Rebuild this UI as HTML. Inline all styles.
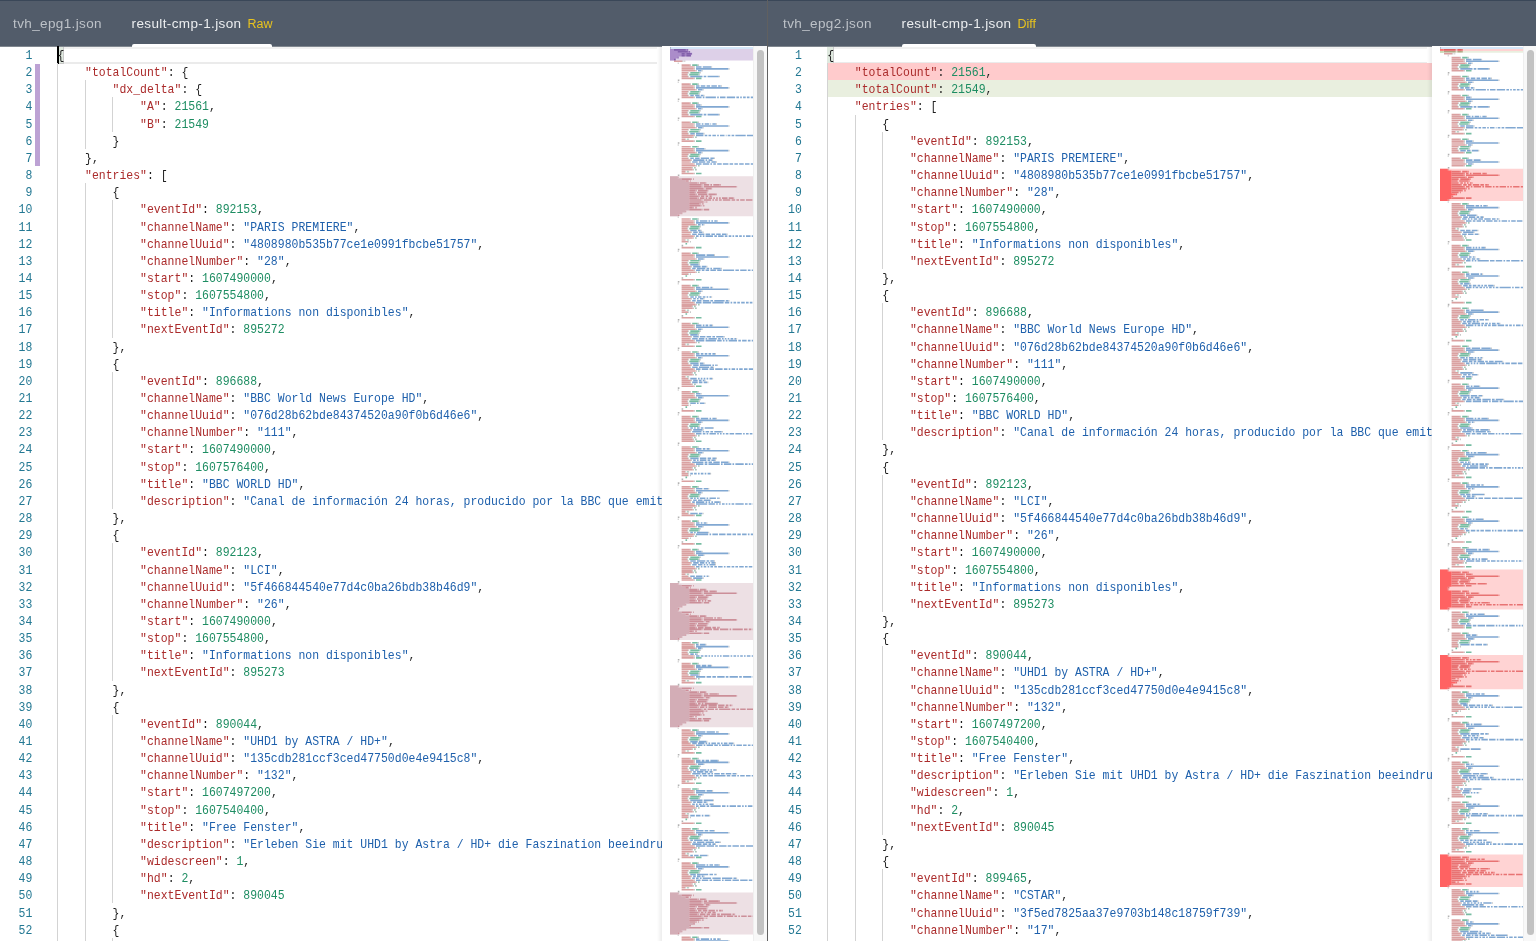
<!DOCTYPE html><html><head><meta charset="utf-8"><style>
*{margin:0;padding:0;box-sizing:border-box}
html,body{width:1536px;height:941px;overflow:hidden;background:#fff}
body{position:relative;font-family:"Liberation Mono",monospace}
.hdr{position:absolute;left:0;top:0;width:1536px;height:46px;background:#525c6a;border-top:1px solid #3a4758}
.tab{position:absolute;top:1.4px;height:46px;line-height:46px;font-family:"Liberation Sans",sans-serif;font-size:13.5px;letter-spacing:0.38px;white-space:nowrap}
.tab.in{color:#bdc2c8}
.tab.ac{color:#eceef0}
.tag{color:#e8c31e;margin-left:6px;font-size:12.5px;letter-spacing:0}
.ul{position:absolute;top:44px;height:3px;background:#fff;border-radius:2px 2px 0 0;z-index:2}
.div{position:absolute;left:767px;top:0;width:1px;height:941px;background:#606060}
.ln{position:absolute;width:60px;text-align:right;height:17.15px;line-height:17.15px;font-size:11.470px;color:#237893;white-space:pre;transform:scaleY(1.107);transform-origin:0 11.64px;margin-top:1px}
.cl{position:absolute;height:17.15px;line-height:17.15px;font-size:11.470px;color:#000;white-space:pre;overflow:hidden}
.ct{position:absolute;left:0;top:1px;transform:scaleY(1.107);transform-origin:0 11.64px}
.k{color:#ab2b2b}.s{color:#1e60ac}.n{color:#1d8d62}.p{color:#1e1e1e}
.g{position:absolute;width:1px;background:#d3d3d3}
.bg{position:absolute}
</style></head><body><div id="wrap" style="position:absolute;left:0;top:0;width:1536px;height:941px;overflow:hidden;will-change:transform">
<div class="hdr"></div><div style="position:absolute;left:0;top:46px;width:1536px;height:1px;background:#80878f"></div>
<div class="tab in" style="left:13px">tvh_epg1.json</div>
<div class="tab ac" style="left:131.5px">result-cmp-1.json<span class="tag">Raw</span></div>
<div class="ul" style="left:131.5px;width:140px"></div>
<div class="tab in" style="left:783px">tvh_epg2.json</div>
<div class="tab ac" style="left:901.5px">result-cmp-1.json<span class="tag">Diff</span></div>
<div class="ul" style="left:901.5px;width:134.5px"></div>
<div style="position:absolute;left:57.50px;top:47px;width:599.50px;height:16.5px;border-top:2px solid #f1f1f1;border-bottom:2px solid #ebebeb"></div>
<div style="position:absolute;left:57.50px;top:46.5px;width:6.7px;height:17px;background:#dfe9df;border-right:1px solid #c9c9c9;border-bottom:1px solid #c9c9c9"></div>
<div style="position:absolute;left:57.00px;top:46.3px;width:2px;height:17.3px;background:#000"></div>
<div style="position:absolute;left:827.30px;top:47px;width:599.70px;height:16.5px;border-top:2px solid #f1f1f1;border-bottom:2px solid #ebebeb"></div>
<div style="position:absolute;left:827.30px;top:46.5px;width:6.7px;height:17px;background:#dfe9df;border-right:1px solid #c9c9c9;border-bottom:1px solid #c9c9c9"></div>
<div class="g" style="left:57px;top:63.15px;height:891.80px"></div>
<div class="g" style="left:85px;top:80.30px;height:68.60px"></div>
<div class="g" style="left:85px;top:183.20px;height:771.75px"></div>
<div class="g" style="left:112px;top:97.45px;height:34.30px"></div>
<div class="g" style="left:112px;top:200.35px;height:137.20px"></div>
<div class="g" style="left:112px;top:371.85px;height:137.20px"></div>
<div class="g" style="left:112px;top:543.35px;height:137.20px"></div>
<div class="g" style="left:112px;top:714.85px;height:188.65px"></div>
<div class="g" style="left:112px;top:937.80px;height:17.15px"></div>
<div class="ln" style="top:46.00px;left:-27.70px">1</div>
<div class="cl" style="top:46.00px;left:57.50px;width:604.50px"><div class="ct"><span class="p">{</span></div></div>
<div class="ln" style="top:63.15px;left:-27.70px">2</div>
<div class="cl" style="top:63.15px;left:57.50px;width:604.50px"><div class="ct">    <span class="k">&quot;totalCount&quot;</span><span class="p">: </span><span class="p">{</span></div></div>
<div class="ln" style="top:80.30px;left:-27.70px">3</div>
<div class="cl" style="top:80.30px;left:57.50px;width:604.50px"><div class="ct">        <span class="k">&quot;dx_delta&quot;</span><span class="p">: </span><span class="p">{</span></div></div>
<div class="ln" style="top:97.45px;left:-27.70px">4</div>
<div class="cl" style="top:97.45px;left:57.50px;width:604.50px"><div class="ct">            <span class="k">&quot;A&quot;</span><span class="p">: </span><span class="n">21561</span><span class="p">,</span></div></div>
<div class="ln" style="top:114.60px;left:-27.70px">5</div>
<div class="cl" style="top:114.60px;left:57.50px;width:604.50px"><div class="ct">            <span class="k">&quot;B&quot;</span><span class="p">: </span><span class="n">21549</span></div></div>
<div class="ln" style="top:131.75px;left:-27.70px">6</div>
<div class="cl" style="top:131.75px;left:57.50px;width:604.50px"><div class="ct">        <span class="p">}</span></div></div>
<div class="ln" style="top:148.90px;left:-27.70px">7</div>
<div class="cl" style="top:148.90px;left:57.50px;width:604.50px"><div class="ct">    <span class="p">},</span></div></div>
<div class="ln" style="top:166.05px;left:-27.70px">8</div>
<div class="cl" style="top:166.05px;left:57.50px;width:604.50px"><div class="ct">    <span class="k">&quot;entries&quot;</span><span class="p">: </span><span class="p">[</span></div></div>
<div class="ln" style="top:183.20px;left:-27.70px">9</div>
<div class="cl" style="top:183.20px;left:57.50px;width:604.50px"><div class="ct">        <span class="p">{</span></div></div>
<div class="ln" style="top:200.35px;left:-27.70px">10</div>
<div class="cl" style="top:200.35px;left:57.50px;width:604.50px"><div class="ct">            <span class="k">&quot;eventId&quot;</span><span class="p">: </span><span class="n">892153</span><span class="p">,</span></div></div>
<div class="ln" style="top:217.50px;left:-27.70px">11</div>
<div class="cl" style="top:217.50px;left:57.50px;width:604.50px"><div class="ct">            <span class="k">&quot;channelName&quot;</span><span class="p">: </span><span class="s">&quot;PARIS PREMIERE&quot;</span><span class="p">,</span></div></div>
<div class="ln" style="top:234.65px;left:-27.70px">12</div>
<div class="cl" style="top:234.65px;left:57.50px;width:604.50px"><div class="ct">            <span class="k">&quot;channelUuid&quot;</span><span class="p">: </span><span class="s">&quot;4808980b535b77ce1e0991fbcbe51757&quot;</span><span class="p">,</span></div></div>
<div class="ln" style="top:251.80px;left:-27.70px">13</div>
<div class="cl" style="top:251.80px;left:57.50px;width:604.50px"><div class="ct">            <span class="k">&quot;channelNumber&quot;</span><span class="p">: </span><span class="s">&quot;28&quot;</span><span class="p">,</span></div></div>
<div class="ln" style="top:268.95px;left:-27.70px">14</div>
<div class="cl" style="top:268.95px;left:57.50px;width:604.50px"><div class="ct">            <span class="k">&quot;start&quot;</span><span class="p">: </span><span class="n">1607490000</span><span class="p">,</span></div></div>
<div class="ln" style="top:286.10px;left:-27.70px">15</div>
<div class="cl" style="top:286.10px;left:57.50px;width:604.50px"><div class="ct">            <span class="k">&quot;stop&quot;</span><span class="p">: </span><span class="n">1607554800</span><span class="p">,</span></div></div>
<div class="ln" style="top:303.25px;left:-27.70px">16</div>
<div class="cl" style="top:303.25px;left:57.50px;width:604.50px"><div class="ct">            <span class="k">&quot;title&quot;</span><span class="p">: </span><span class="s">&quot;Informations non disponibles&quot;</span><span class="p">,</span></div></div>
<div class="ln" style="top:320.40px;left:-27.70px">17</div>
<div class="cl" style="top:320.40px;left:57.50px;width:604.50px"><div class="ct">            <span class="k">&quot;nextEventId&quot;</span><span class="p">: </span><span class="n">895272</span></div></div>
<div class="ln" style="top:337.55px;left:-27.70px">18</div>
<div class="cl" style="top:337.55px;left:57.50px;width:604.50px"><div class="ct">        <span class="p">},</span></div></div>
<div class="ln" style="top:354.70px;left:-27.70px">19</div>
<div class="cl" style="top:354.70px;left:57.50px;width:604.50px"><div class="ct">        <span class="p">{</span></div></div>
<div class="ln" style="top:371.85px;left:-27.70px">20</div>
<div class="cl" style="top:371.85px;left:57.50px;width:604.50px"><div class="ct">            <span class="k">&quot;eventId&quot;</span><span class="p">: </span><span class="n">896688</span><span class="p">,</span></div></div>
<div class="ln" style="top:389.00px;left:-27.70px">21</div>
<div class="cl" style="top:389.00px;left:57.50px;width:604.50px"><div class="ct">            <span class="k">&quot;channelName&quot;</span><span class="p">: </span><span class="s">&quot;BBC World News Europe HD&quot;</span><span class="p">,</span></div></div>
<div class="ln" style="top:406.15px;left:-27.70px">22</div>
<div class="cl" style="top:406.15px;left:57.50px;width:604.50px"><div class="ct">            <span class="k">&quot;channelUuid&quot;</span><span class="p">: </span><span class="s">&quot;076d28b62bde84374520a90f0b6d46e6&quot;</span><span class="p">,</span></div></div>
<div class="ln" style="top:423.30px;left:-27.70px">23</div>
<div class="cl" style="top:423.30px;left:57.50px;width:604.50px"><div class="ct">            <span class="k">&quot;channelNumber&quot;</span><span class="p">: </span><span class="s">&quot;111&quot;</span><span class="p">,</span></div></div>
<div class="ln" style="top:440.45px;left:-27.70px">24</div>
<div class="cl" style="top:440.45px;left:57.50px;width:604.50px"><div class="ct">            <span class="k">&quot;start&quot;</span><span class="p">: </span><span class="n">1607490000</span><span class="p">,</span></div></div>
<div class="ln" style="top:457.60px;left:-27.70px">25</div>
<div class="cl" style="top:457.60px;left:57.50px;width:604.50px"><div class="ct">            <span class="k">&quot;stop&quot;</span><span class="p">: </span><span class="n">1607576400</span><span class="p">,</span></div></div>
<div class="ln" style="top:474.75px;left:-27.70px">26</div>
<div class="cl" style="top:474.75px;left:57.50px;width:604.50px"><div class="ct">            <span class="k">&quot;title&quot;</span><span class="p">: </span><span class="s">&quot;BBC WORLD HD&quot;</span><span class="p">,</span></div></div>
<div class="ln" style="top:491.90px;left:-27.70px">27</div>
<div class="cl" style="top:491.90px;left:57.50px;width:604.50px"><div class="ct">            <span class="k">&quot;description&quot;</span><span class="p">: </span><span class="s">&quot;Canal de información 24 horas, producido por la BBC que emite noticias internacionales&quot;</span></div></div>
<div class="ln" style="top:509.05px;left:-27.70px">28</div>
<div class="cl" style="top:509.05px;left:57.50px;width:604.50px"><div class="ct">        <span class="p">},</span></div></div>
<div class="ln" style="top:526.20px;left:-27.70px">29</div>
<div class="cl" style="top:526.20px;left:57.50px;width:604.50px"><div class="ct">        <span class="p">{</span></div></div>
<div class="ln" style="top:543.35px;left:-27.70px">30</div>
<div class="cl" style="top:543.35px;left:57.50px;width:604.50px"><div class="ct">            <span class="k">&quot;eventId&quot;</span><span class="p">: </span><span class="n">892123</span><span class="p">,</span></div></div>
<div class="ln" style="top:560.50px;left:-27.70px">31</div>
<div class="cl" style="top:560.50px;left:57.50px;width:604.50px"><div class="ct">            <span class="k">&quot;channelName&quot;</span><span class="p">: </span><span class="s">&quot;LCI&quot;</span><span class="p">,</span></div></div>
<div class="ln" style="top:577.65px;left:-27.70px">32</div>
<div class="cl" style="top:577.65px;left:57.50px;width:604.50px"><div class="ct">            <span class="k">&quot;channelUuid&quot;</span><span class="p">: </span><span class="s">&quot;5f466844540e77d4c0ba26bdb38b46d9&quot;</span><span class="p">,</span></div></div>
<div class="ln" style="top:594.80px;left:-27.70px">33</div>
<div class="cl" style="top:594.80px;left:57.50px;width:604.50px"><div class="ct">            <span class="k">&quot;channelNumber&quot;</span><span class="p">: </span><span class="s">&quot;26&quot;</span><span class="p">,</span></div></div>
<div class="ln" style="top:611.95px;left:-27.70px">34</div>
<div class="cl" style="top:611.95px;left:57.50px;width:604.50px"><div class="ct">            <span class="k">&quot;start&quot;</span><span class="p">: </span><span class="n">1607490000</span><span class="p">,</span></div></div>
<div class="ln" style="top:629.10px;left:-27.70px">35</div>
<div class="cl" style="top:629.10px;left:57.50px;width:604.50px"><div class="ct">            <span class="k">&quot;stop&quot;</span><span class="p">: </span><span class="n">1607554800</span><span class="p">,</span></div></div>
<div class="ln" style="top:646.25px;left:-27.70px">36</div>
<div class="cl" style="top:646.25px;left:57.50px;width:604.50px"><div class="ct">            <span class="k">&quot;title&quot;</span><span class="p">: </span><span class="s">&quot;Informations non disponibles&quot;</span><span class="p">,</span></div></div>
<div class="ln" style="top:663.40px;left:-27.70px">37</div>
<div class="cl" style="top:663.40px;left:57.50px;width:604.50px"><div class="ct">            <span class="k">&quot;nextEventId&quot;</span><span class="p">: </span><span class="n">895273</span></div></div>
<div class="ln" style="top:680.55px;left:-27.70px">38</div>
<div class="cl" style="top:680.55px;left:57.50px;width:604.50px"><div class="ct">        <span class="p">},</span></div></div>
<div class="ln" style="top:697.70px;left:-27.70px">39</div>
<div class="cl" style="top:697.70px;left:57.50px;width:604.50px"><div class="ct">        <span class="p">{</span></div></div>
<div class="ln" style="top:714.85px;left:-27.70px">40</div>
<div class="cl" style="top:714.85px;left:57.50px;width:604.50px"><div class="ct">            <span class="k">&quot;eventId&quot;</span><span class="p">: </span><span class="n">890044</span><span class="p">,</span></div></div>
<div class="ln" style="top:732.00px;left:-27.70px">41</div>
<div class="cl" style="top:732.00px;left:57.50px;width:604.50px"><div class="ct">            <span class="k">&quot;channelName&quot;</span><span class="p">: </span><span class="s">&quot;UHD1 by ASTRA / HD+&quot;</span><span class="p">,</span></div></div>
<div class="ln" style="top:749.15px;left:-27.70px">42</div>
<div class="cl" style="top:749.15px;left:57.50px;width:604.50px"><div class="ct">            <span class="k">&quot;channelUuid&quot;</span><span class="p">: </span><span class="s">&quot;135cdb281ccf3ced47750d0e4e9415c8&quot;</span><span class="p">,</span></div></div>
<div class="ln" style="top:766.30px;left:-27.70px">43</div>
<div class="cl" style="top:766.30px;left:57.50px;width:604.50px"><div class="ct">            <span class="k">&quot;channelNumber&quot;</span><span class="p">: </span><span class="s">&quot;132&quot;</span><span class="p">,</span></div></div>
<div class="ln" style="top:783.45px;left:-27.70px">44</div>
<div class="cl" style="top:783.45px;left:57.50px;width:604.50px"><div class="ct">            <span class="k">&quot;start&quot;</span><span class="p">: </span><span class="n">1607497200</span><span class="p">,</span></div></div>
<div class="ln" style="top:800.60px;left:-27.70px">45</div>
<div class="cl" style="top:800.60px;left:57.50px;width:604.50px"><div class="ct">            <span class="k">&quot;stop&quot;</span><span class="p">: </span><span class="n">1607540400</span><span class="p">,</span></div></div>
<div class="ln" style="top:817.75px;left:-27.70px">46</div>
<div class="cl" style="top:817.75px;left:57.50px;width:604.50px"><div class="ct">            <span class="k">&quot;title&quot;</span><span class="p">: </span><span class="s">&quot;Free Fenster&quot;</span><span class="p">,</span></div></div>
<div class="ln" style="top:834.90px;left:-27.70px">47</div>
<div class="cl" style="top:834.90px;left:57.50px;width:604.50px"><div class="ct">            <span class="k">&quot;description&quot;</span><span class="p">: </span><span class="s">&quot;Erleben Sie mit UHD1 by Astra / HD+ die Faszination beeindruckender Bilder&quot;</span><span class="p">,</span></div></div>
<div class="ln" style="top:852.05px;left:-27.70px">48</div>
<div class="cl" style="top:852.05px;left:57.50px;width:604.50px"><div class="ct">            <span class="k">&quot;widescreen&quot;</span><span class="p">: </span><span class="n">1</span><span class="p">,</span></div></div>
<div class="ln" style="top:869.20px;left:-27.70px">49</div>
<div class="cl" style="top:869.20px;left:57.50px;width:604.50px"><div class="ct">            <span class="k">&quot;hd&quot;</span><span class="p">: </span><span class="n">2</span><span class="p">,</span></div></div>
<div class="ln" style="top:886.35px;left:-27.70px">50</div>
<div class="cl" style="top:886.35px;left:57.50px;width:604.50px"><div class="ct">            <span class="k">&quot;nextEventId&quot;</span><span class="p">: </span><span class="n">890045</span></div></div>
<div class="ln" style="top:903.50px;left:-27.70px">51</div>
<div class="cl" style="top:903.50px;left:57.50px;width:604.50px"><div class="ct">        <span class="p">},</span></div></div>
<div class="ln" style="top:920.65px;left:-27.70px">52</div>
<div class="cl" style="top:920.65px;left:57.50px;width:604.50px"><div class="ct">        <span class="p">{</span></div></div>
<div class="ln" style="top:937.80px;left:-27.70px">53</div>
<div class="cl" style="top:937.80px;left:57.50px;width:604.50px"><div class="ct">            <span class="k">&quot;eventId&quot;</span><span class="p">: </span><span class="n">899465</span><span class="p">,</span></div></div>
<div style="position:absolute;left:35px;top:64.15px;width:5px;height:101.90px;background:#bda2d4"></div>
<div class="bg" style="left:827.30px;top:63.15px;width:604.70px;height:17.15px;background:#ffcbcc"></div>
<div class="bg" style="left:827.30px;top:80.30px;width:604.70px;height:17.15px;background:#e9efdf"></div>
<div class="g" style="left:827px;top:63.15px;height:891.80px"></div>
<div class="g" style="left:855px;top:114.60px;height:840.35px"></div>
<div class="g" style="left:882px;top:131.75px;height:137.20px"></div>
<div class="g" style="left:882px;top:303.25px;height:137.20px"></div>
<div class="g" style="left:882px;top:474.75px;height:137.20px"></div>
<div class="g" style="left:882px;top:646.25px;height:188.65px"></div>
<div class="g" style="left:882px;top:869.20px;height:85.75px"></div>
<div class="ln" style="top:46.00px;left:741.80px">1</div>
<div class="cl" style="top:46.00px;left:827.30px;width:604.70px"><div class="ct"><span class="p">{</span></div></div>
<div class="ln" style="top:63.15px;left:741.80px">2</div>
<div class="cl" style="top:63.15px;left:827.30px;width:604.70px"><div class="ct">    <span class="k">&quot;totalCount&quot;</span><span class="p">: </span><span class="n">21561</span><span class="p">,</span></div></div>
<div class="ln" style="top:80.30px;left:741.80px">3</div>
<div class="cl" style="top:80.30px;left:827.30px;width:604.70px"><div class="ct">    <span class="k">&quot;totalCount&quot;</span><span class="p">: </span><span class="n">21549</span><span class="p">,</span></div></div>
<div class="ln" style="top:97.45px;left:741.80px">4</div>
<div class="cl" style="top:97.45px;left:827.30px;width:604.70px"><div class="ct">    <span class="k">&quot;entries&quot;</span><span class="p">: </span><span class="p">[</span></div></div>
<div class="ln" style="top:114.60px;left:741.80px">5</div>
<div class="cl" style="top:114.60px;left:827.30px;width:604.70px"><div class="ct">        <span class="p">{</span></div></div>
<div class="ln" style="top:131.75px;left:741.80px">6</div>
<div class="cl" style="top:131.75px;left:827.30px;width:604.70px"><div class="ct">            <span class="k">&quot;eventId&quot;</span><span class="p">: </span><span class="n">892153</span><span class="p">,</span></div></div>
<div class="ln" style="top:148.90px;left:741.80px">7</div>
<div class="cl" style="top:148.90px;left:827.30px;width:604.70px"><div class="ct">            <span class="k">&quot;channelName&quot;</span><span class="p">: </span><span class="s">&quot;PARIS PREMIERE&quot;</span><span class="p">,</span></div></div>
<div class="ln" style="top:166.05px;left:741.80px">8</div>
<div class="cl" style="top:166.05px;left:827.30px;width:604.70px"><div class="ct">            <span class="k">&quot;channelUuid&quot;</span><span class="p">: </span><span class="s">&quot;4808980b535b77ce1e0991fbcbe51757&quot;</span><span class="p">,</span></div></div>
<div class="ln" style="top:183.20px;left:741.80px">9</div>
<div class="cl" style="top:183.20px;left:827.30px;width:604.70px"><div class="ct">            <span class="k">&quot;channelNumber&quot;</span><span class="p">: </span><span class="s">&quot;28&quot;</span><span class="p">,</span></div></div>
<div class="ln" style="top:200.35px;left:741.80px">10</div>
<div class="cl" style="top:200.35px;left:827.30px;width:604.70px"><div class="ct">            <span class="k">&quot;start&quot;</span><span class="p">: </span><span class="n">1607490000</span><span class="p">,</span></div></div>
<div class="ln" style="top:217.50px;left:741.80px">11</div>
<div class="cl" style="top:217.50px;left:827.30px;width:604.70px"><div class="ct">            <span class="k">&quot;stop&quot;</span><span class="p">: </span><span class="n">1607554800</span><span class="p">,</span></div></div>
<div class="ln" style="top:234.65px;left:741.80px">12</div>
<div class="cl" style="top:234.65px;left:827.30px;width:604.70px"><div class="ct">            <span class="k">&quot;title&quot;</span><span class="p">: </span><span class="s">&quot;Informations non disponibles&quot;</span><span class="p">,</span></div></div>
<div class="ln" style="top:251.80px;left:741.80px">13</div>
<div class="cl" style="top:251.80px;left:827.30px;width:604.70px"><div class="ct">            <span class="k">&quot;nextEventId&quot;</span><span class="p">: </span><span class="n">895272</span></div></div>
<div class="ln" style="top:268.95px;left:741.80px">14</div>
<div class="cl" style="top:268.95px;left:827.30px;width:604.70px"><div class="ct">        <span class="p">},</span></div></div>
<div class="ln" style="top:286.10px;left:741.80px">15</div>
<div class="cl" style="top:286.10px;left:827.30px;width:604.70px"><div class="ct">        <span class="p">{</span></div></div>
<div class="ln" style="top:303.25px;left:741.80px">16</div>
<div class="cl" style="top:303.25px;left:827.30px;width:604.70px"><div class="ct">            <span class="k">&quot;eventId&quot;</span><span class="p">: </span><span class="n">896688</span><span class="p">,</span></div></div>
<div class="ln" style="top:320.40px;left:741.80px">17</div>
<div class="cl" style="top:320.40px;left:827.30px;width:604.70px"><div class="ct">            <span class="k">&quot;channelName&quot;</span><span class="p">: </span><span class="s">&quot;BBC World News Europe HD&quot;</span><span class="p">,</span></div></div>
<div class="ln" style="top:337.55px;left:741.80px">18</div>
<div class="cl" style="top:337.55px;left:827.30px;width:604.70px"><div class="ct">            <span class="k">&quot;channelUuid&quot;</span><span class="p">: </span><span class="s">&quot;076d28b62bde84374520a90f0b6d46e6&quot;</span><span class="p">,</span></div></div>
<div class="ln" style="top:354.70px;left:741.80px">19</div>
<div class="cl" style="top:354.70px;left:827.30px;width:604.70px"><div class="ct">            <span class="k">&quot;channelNumber&quot;</span><span class="p">: </span><span class="s">&quot;111&quot;</span><span class="p">,</span></div></div>
<div class="ln" style="top:371.85px;left:741.80px">20</div>
<div class="cl" style="top:371.85px;left:827.30px;width:604.70px"><div class="ct">            <span class="k">&quot;start&quot;</span><span class="p">: </span><span class="n">1607490000</span><span class="p">,</span></div></div>
<div class="ln" style="top:389.00px;left:741.80px">21</div>
<div class="cl" style="top:389.00px;left:827.30px;width:604.70px"><div class="ct">            <span class="k">&quot;stop&quot;</span><span class="p">: </span><span class="n">1607576400</span><span class="p">,</span></div></div>
<div class="ln" style="top:406.15px;left:741.80px">22</div>
<div class="cl" style="top:406.15px;left:827.30px;width:604.70px"><div class="ct">            <span class="k">&quot;title&quot;</span><span class="p">: </span><span class="s">&quot;BBC WORLD HD&quot;</span><span class="p">,</span></div></div>
<div class="ln" style="top:423.30px;left:741.80px">23</div>
<div class="cl" style="top:423.30px;left:827.30px;width:604.70px"><div class="ct">            <span class="k">&quot;description&quot;</span><span class="p">: </span><span class="s">&quot;Canal de información 24 horas, producido por la BBC que emite noticias internacionales&quot;</span></div></div>
<div class="ln" style="top:440.45px;left:741.80px">24</div>
<div class="cl" style="top:440.45px;left:827.30px;width:604.70px"><div class="ct">        <span class="p">},</span></div></div>
<div class="ln" style="top:457.60px;left:741.80px">25</div>
<div class="cl" style="top:457.60px;left:827.30px;width:604.70px"><div class="ct">        <span class="p">{</span></div></div>
<div class="ln" style="top:474.75px;left:741.80px">26</div>
<div class="cl" style="top:474.75px;left:827.30px;width:604.70px"><div class="ct">            <span class="k">&quot;eventId&quot;</span><span class="p">: </span><span class="n">892123</span><span class="p">,</span></div></div>
<div class="ln" style="top:491.90px;left:741.80px">27</div>
<div class="cl" style="top:491.90px;left:827.30px;width:604.70px"><div class="ct">            <span class="k">&quot;channelName&quot;</span><span class="p">: </span><span class="s">&quot;LCI&quot;</span><span class="p">,</span></div></div>
<div class="ln" style="top:509.05px;left:741.80px">28</div>
<div class="cl" style="top:509.05px;left:827.30px;width:604.70px"><div class="ct">            <span class="k">&quot;channelUuid&quot;</span><span class="p">: </span><span class="s">&quot;5f466844540e77d4c0ba26bdb38b46d9&quot;</span><span class="p">,</span></div></div>
<div class="ln" style="top:526.20px;left:741.80px">29</div>
<div class="cl" style="top:526.20px;left:827.30px;width:604.70px"><div class="ct">            <span class="k">&quot;channelNumber&quot;</span><span class="p">: </span><span class="s">&quot;26&quot;</span><span class="p">,</span></div></div>
<div class="ln" style="top:543.35px;left:741.80px">30</div>
<div class="cl" style="top:543.35px;left:827.30px;width:604.70px"><div class="ct">            <span class="k">&quot;start&quot;</span><span class="p">: </span><span class="n">1607490000</span><span class="p">,</span></div></div>
<div class="ln" style="top:560.50px;left:741.80px">31</div>
<div class="cl" style="top:560.50px;left:827.30px;width:604.70px"><div class="ct">            <span class="k">&quot;stop&quot;</span><span class="p">: </span><span class="n">1607554800</span><span class="p">,</span></div></div>
<div class="ln" style="top:577.65px;left:741.80px">32</div>
<div class="cl" style="top:577.65px;left:827.30px;width:604.70px"><div class="ct">            <span class="k">&quot;title&quot;</span><span class="p">: </span><span class="s">&quot;Informations non disponibles&quot;</span><span class="p">,</span></div></div>
<div class="ln" style="top:594.80px;left:741.80px">33</div>
<div class="cl" style="top:594.80px;left:827.30px;width:604.70px"><div class="ct">            <span class="k">&quot;nextEventId&quot;</span><span class="p">: </span><span class="n">895273</span></div></div>
<div class="ln" style="top:611.95px;left:741.80px">34</div>
<div class="cl" style="top:611.95px;left:827.30px;width:604.70px"><div class="ct">        <span class="p">},</span></div></div>
<div class="ln" style="top:629.10px;left:741.80px">35</div>
<div class="cl" style="top:629.10px;left:827.30px;width:604.70px"><div class="ct">        <span class="p">{</span></div></div>
<div class="ln" style="top:646.25px;left:741.80px">36</div>
<div class="cl" style="top:646.25px;left:827.30px;width:604.70px"><div class="ct">            <span class="k">&quot;eventId&quot;</span><span class="p">: </span><span class="n">890044</span><span class="p">,</span></div></div>
<div class="ln" style="top:663.40px;left:741.80px">37</div>
<div class="cl" style="top:663.40px;left:827.30px;width:604.70px"><div class="ct">            <span class="k">&quot;channelName&quot;</span><span class="p">: </span><span class="s">&quot;UHD1 by ASTRA / HD+&quot;</span><span class="p">,</span></div></div>
<div class="ln" style="top:680.55px;left:741.80px">38</div>
<div class="cl" style="top:680.55px;left:827.30px;width:604.70px"><div class="ct">            <span class="k">&quot;channelUuid&quot;</span><span class="p">: </span><span class="s">&quot;135cdb281ccf3ced47750d0e4e9415c8&quot;</span><span class="p">,</span></div></div>
<div class="ln" style="top:697.70px;left:741.80px">39</div>
<div class="cl" style="top:697.70px;left:827.30px;width:604.70px"><div class="ct">            <span class="k">&quot;channelNumber&quot;</span><span class="p">: </span><span class="s">&quot;132&quot;</span><span class="p">,</span></div></div>
<div class="ln" style="top:714.85px;left:741.80px">40</div>
<div class="cl" style="top:714.85px;left:827.30px;width:604.70px"><div class="ct">            <span class="k">&quot;start&quot;</span><span class="p">: </span><span class="n">1607497200</span><span class="p">,</span></div></div>
<div class="ln" style="top:732.00px;left:741.80px">41</div>
<div class="cl" style="top:732.00px;left:827.30px;width:604.70px"><div class="ct">            <span class="k">&quot;stop&quot;</span><span class="p">: </span><span class="n">1607540400</span><span class="p">,</span></div></div>
<div class="ln" style="top:749.15px;left:741.80px">42</div>
<div class="cl" style="top:749.15px;left:827.30px;width:604.70px"><div class="ct">            <span class="k">&quot;title&quot;</span><span class="p">: </span><span class="s">&quot;Free Fenster&quot;</span><span class="p">,</span></div></div>
<div class="ln" style="top:766.30px;left:741.80px">43</div>
<div class="cl" style="top:766.30px;left:827.30px;width:604.70px"><div class="ct">            <span class="k">&quot;description&quot;</span><span class="p">: </span><span class="s">&quot;Erleben Sie mit UHD1 by Astra / HD+ die Faszination beeindruckender Bilder&quot;</span><span class="p">,</span></div></div>
<div class="ln" style="top:783.45px;left:741.80px">44</div>
<div class="cl" style="top:783.45px;left:827.30px;width:604.70px"><div class="ct">            <span class="k">&quot;widescreen&quot;</span><span class="p">: </span><span class="n">1</span><span class="p">,</span></div></div>
<div class="ln" style="top:800.60px;left:741.80px">45</div>
<div class="cl" style="top:800.60px;left:827.30px;width:604.70px"><div class="ct">            <span class="k">&quot;hd&quot;</span><span class="p">: </span><span class="n">2</span><span class="p">,</span></div></div>
<div class="ln" style="top:817.75px;left:741.80px">46</div>
<div class="cl" style="top:817.75px;left:827.30px;width:604.70px"><div class="ct">            <span class="k">&quot;nextEventId&quot;</span><span class="p">: </span><span class="n">890045</span></div></div>
<div class="ln" style="top:834.90px;left:741.80px">47</div>
<div class="cl" style="top:834.90px;left:827.30px;width:604.70px"><div class="ct">        <span class="p">},</span></div></div>
<div class="ln" style="top:852.05px;left:741.80px">48</div>
<div class="cl" style="top:852.05px;left:827.30px;width:604.70px"><div class="ct">        <span class="p">{</span></div></div>
<div class="ln" style="top:869.20px;left:741.80px">49</div>
<div class="cl" style="top:869.20px;left:827.30px;width:604.70px"><div class="ct">            <span class="k">&quot;eventId&quot;</span><span class="p">: </span><span class="n">899465</span><span class="p">,</span></div></div>
<div class="ln" style="top:886.35px;left:741.80px">50</div>
<div class="cl" style="top:886.35px;left:827.30px;width:604.70px"><div class="ct">            <span class="k">&quot;channelName&quot;</span><span class="p">: </span><span class="s">&quot;CSTAR&quot;</span><span class="p">,</span></div></div>
<div class="ln" style="top:903.50px;left:741.80px">51</div>
<div class="cl" style="top:903.50px;left:827.30px;width:604.70px"><div class="ct">            <span class="k">&quot;channelUuid&quot;</span><span class="p">: </span><span class="s">&quot;3f5ed7825aa37e9703b148c18759f739&quot;</span><span class="p">,</span></div></div>
<div class="ln" style="top:920.65px;left:741.80px">52</div>
<div class="cl" style="top:920.65px;left:827.30px;width:604.70px"><div class="ct">            <span class="k">&quot;channelNumber&quot;</span><span class="p">: </span><span class="s">&quot;17&quot;</span><span class="p">,</span></div></div>
<div class="ln" style="top:937.80px;left:741.80px">53</div>
<div class="cl" style="top:937.80px;left:827.30px;width:604.70px"><div class="ct">            <span class="k">&quot;start&quot;</span><span class="p">: </span><span class="n">1607490000</span><span class="p">,</span></div></div>
<div class="div"></div>
<div style="position:absolute;left:657.00px;top:46px;width:5.00px;height:895px;background:linear-gradient(to right,rgba(0,0,0,0),rgba(0,0,0,0.07))"></div>
<div style="position:absolute;left:662.00px;top:46px;width:91.00px;height:895px;background:#fff"></div>
<div style="position:absolute;left:670.00px;top:47px;width:83.00px;height:1.9px;background:#d4e6f8"></div>
<svg style="position:absolute;left:670.00px;top:48.90px" width="83.00" height="892.10"><path fill="#ede0e4" d="M0.0 127.3h83.0v1.9h-83.0zM0.0 129.2h83.0v1.9h-83.0zM0.0 131.1h83.0v1.9h-83.0zM0.0 133.0h83.0v1.9h-83.0zM0.0 134.9h83.0v1.9h-83.0zM0.0 136.8h83.0v1.9h-83.0zM0.0 138.7h83.0v1.9h-83.0zM0.0 140.6h83.0v1.9h-83.0zM0.0 142.5h83.0v1.9h-83.0zM0.0 144.4h83.0v1.9h-83.0zM0.0 146.3h83.0v1.9h-83.0zM0.0 148.2h83.0v1.9h-83.0zM0.0 150.1h83.0v1.9h-83.0zM0.0 152.0h83.0v1.9h-83.0zM0.0 153.9h83.0v1.9h-83.0zM0.0 155.8h83.0v1.9h-83.0zM0.0 157.7h83.0v1.9h-83.0zM0.0 159.6h83.0v1.9h-83.0zM0.0 161.5h83.0v1.9h-83.0zM0.0 163.4h83.0v1.9h-83.0zM0.0 165.3h83.0v1.9h-83.0zM0.0 533.9h83.0v1.9h-83.0zM0.0 535.8h83.0v1.9h-83.0zM0.0 537.7h83.0v1.9h-83.0zM0.0 539.6h83.0v1.9h-83.0zM0.0 541.5h83.0v1.9h-83.0zM0.0 543.4h83.0v1.9h-83.0zM0.0 545.3h83.0v1.9h-83.0zM0.0 547.2h83.0v1.9h-83.0zM0.0 549.1h83.0v1.9h-83.0zM0.0 551.0h83.0v1.9h-83.0zM0.0 552.9h83.0v1.9h-83.0zM0.0 554.8h83.0v1.9h-83.0zM0.0 556.7h83.0v1.9h-83.0zM0.0 558.6h83.0v1.9h-83.0zM0.0 560.5h83.0v1.9h-83.0zM0.0 562.4h83.0v1.9h-83.0zM0.0 564.3h83.0v1.9h-83.0zM0.0 566.2h83.0v1.9h-83.0zM0.0 568.1h83.0v1.9h-83.0zM0.0 570.0h83.0v1.9h-83.0zM0.0 571.9h83.0v1.9h-83.0zM0.0 573.8h83.0v1.9h-83.0zM0.0 575.7h83.0v1.9h-83.0zM0.0 577.6h83.0v1.9h-83.0zM0.0 579.5h83.0v1.9h-83.0zM0.0 581.4h83.0v1.9h-83.0zM0.0 583.3h83.0v1.9h-83.0zM0.0 585.2h83.0v1.9h-83.0zM0.0 587.1h83.0v1.9h-83.0zM0.0 589.0h83.0v1.9h-83.0zM0.0 636.5h83.0v1.9h-83.0zM0.0 638.4h83.0v1.9h-83.0zM0.0 640.3h83.0v1.9h-83.0zM0.0 642.2h83.0v1.9h-83.0zM0.0 644.1h83.0v1.9h-83.0zM0.0 646.0h83.0v1.9h-83.0zM0.0 647.9h83.0v1.9h-83.0zM0.0 649.8h83.0v1.9h-83.0zM0.0 651.7h83.0v1.9h-83.0zM0.0 653.6h83.0v1.9h-83.0zM0.0 655.5h83.0v1.9h-83.0zM0.0 657.4h83.0v1.9h-83.0zM0.0 659.3h83.0v1.9h-83.0zM0.0 661.2h83.0v1.9h-83.0zM0.0 663.1h83.0v1.9h-83.0zM0.0 665.0h83.0v1.9h-83.0zM0.0 666.9h83.0v1.9h-83.0zM0.0 668.8h83.0v1.9h-83.0zM0.0 670.7h83.0v1.9h-83.0zM0.0 672.6h83.0v1.9h-83.0zM0.0 674.5h83.0v1.9h-83.0zM0.0 676.4h83.0v1.9h-83.0zM0.0 843.6h83.0v1.9h-83.0zM0.0 845.5h83.0v1.9h-83.0zM0.0 847.4h83.0v1.9h-83.0zM0.0 849.3h83.0v1.9h-83.0zM0.0 851.2h83.0v1.9h-83.0zM0.0 853.1h83.0v1.9h-83.0zM0.0 855.0h83.0v1.9h-83.0zM0.0 856.9h83.0v1.9h-83.0zM0.0 858.8h83.0v1.9h-83.0zM0.0 860.7h83.0v1.9h-83.0zM0.0 862.6h83.0v1.9h-83.0zM0.0 864.5h83.0v1.9h-83.0zM0.0 866.4h83.0v1.9h-83.0zM0.0 868.3h83.0v1.9h-83.0zM0.0 870.2h83.0v1.9h-83.0zM0.0 872.1h83.0v1.9h-83.0zM0.0 874.0h83.0v1.9h-83.0zM0.0 875.9h83.0v1.9h-83.0zM0.0 877.8h83.0v1.9h-83.0zM0.0 879.7h83.0v1.9h-83.0zM0.0 881.6h83.0v1.9h-83.0zM0.0 883.5h83.0v1.9h-83.0z"/><path fill="#d3adb6" d="M0.0 127.3h7.7v1.9h-7.7zM0.0 129.2h11.5v1.9h-11.5zM0.0 131.1h15.4v1.9h-15.4zM0.0 133.0h19.2v1.9h-19.2zM0.0 134.9h19.2v1.9h-19.2zM0.0 136.8h19.2v1.9h-19.2zM0.0 138.7h19.2v1.9h-19.2zM0.0 140.6h19.2v1.9h-19.2zM0.0 142.5h19.2v1.9h-19.2zM0.0 144.4h19.2v1.9h-19.2zM0.0 146.3h19.2v1.9h-19.2zM0.0 148.2h19.2v1.9h-19.2zM0.0 150.1h19.2v1.9h-19.2zM0.0 152.0h19.2v1.9h-19.2zM0.0 153.9h19.2v1.9h-19.2zM0.0 155.8h19.2v1.9h-19.2zM0.0 157.7h19.2v1.9h-19.2zM0.0 159.6h19.2v1.9h-19.2zM0.0 161.5h15.4v1.9h-15.4zM0.0 163.4h11.5v1.9h-11.5zM0.0 165.3h7.7v1.9h-7.7zM0.0 533.9h7.7v1.9h-7.7zM0.0 535.8h11.5v1.9h-11.5zM0.0 537.7h15.4v1.9h-15.4zM0.0 539.6h19.2v1.9h-19.2zM0.0 541.5h19.2v1.9h-19.2zM0.0 543.4h19.2v1.9h-19.2zM0.0 545.3h19.2v1.9h-19.2zM0.0 547.2h19.2v1.9h-19.2zM0.0 549.1h19.2v1.9h-19.2zM0.0 551.0h19.2v1.9h-19.2zM0.0 552.9h19.2v1.9h-19.2zM0.0 554.8h15.4v1.9h-15.4zM0.0 556.7h11.5v1.9h-11.5zM0.0 558.6h7.7v1.9h-7.7zM0.0 560.5h7.7v1.9h-7.7zM0.0 562.4h11.5v1.9h-11.5zM0.0 564.3h15.4v1.9h-15.4zM0.0 566.2h19.2v1.9h-19.2zM0.0 568.1h19.2v1.9h-19.2zM0.0 570.0h19.2v1.9h-19.2zM0.0 571.9h19.2v1.9h-19.2zM0.0 573.8h19.2v1.9h-19.2zM0.0 575.7h19.2v1.9h-19.2zM0.0 577.6h19.2v1.9h-19.2zM0.0 579.5h19.2v1.9h-19.2zM0.0 581.4h19.2v1.9h-19.2zM0.0 583.3h19.2v1.9h-19.2zM0.0 585.2h15.4v1.9h-15.4zM0.0 587.1h11.5v1.9h-11.5zM0.0 589.0h7.7v1.9h-7.7zM0.0 636.5h7.7v1.9h-7.7zM0.0 638.4h11.5v1.9h-11.5zM0.0 640.3h15.4v1.9h-15.4zM0.0 642.2h19.2v1.9h-19.2zM0.0 644.1h19.2v1.9h-19.2zM0.0 646.0h19.2v1.9h-19.2zM0.0 647.9h19.2v1.9h-19.2zM0.0 649.8h19.2v1.9h-19.2zM0.0 651.7h19.2v1.9h-19.2zM0.0 653.6h19.2v1.9h-19.2zM0.0 655.5h19.2v1.9h-19.2zM0.0 657.4h19.2v1.9h-19.2zM0.0 659.3h19.2v1.9h-19.2zM0.0 661.2h19.2v1.9h-19.2zM0.0 663.1h19.2v1.9h-19.2zM0.0 665.0h19.2v1.9h-19.2zM0.0 666.9h19.2v1.9h-19.2zM0.0 668.8h19.2v1.9h-19.2zM0.0 670.7h19.2v1.9h-19.2zM0.0 672.6h15.4v1.9h-15.4zM0.0 674.5h11.5v1.9h-11.5zM0.0 676.4h7.7v1.9h-7.7zM0.0 843.6h7.7v1.9h-7.7zM0.0 845.5h11.5v1.9h-11.5zM0.0 847.4h15.4v1.9h-15.4zM0.0 849.3h19.2v1.9h-19.2zM0.0 851.2h19.2v1.9h-19.2zM0.0 853.1h19.2v1.9h-19.2zM0.0 855.0h19.2v1.9h-19.2zM0.0 856.9h19.2v1.9h-19.2zM0.0 858.8h19.2v1.9h-19.2zM0.0 860.7h19.2v1.9h-19.2zM0.0 862.6h19.2v1.9h-19.2zM0.0 864.5h19.2v1.9h-19.2zM0.0 866.4h19.2v1.9h-19.2zM0.0 868.3h19.2v1.9h-19.2zM0.0 870.2h19.2v1.9h-19.2zM0.0 872.1h19.2v1.9h-19.2zM0.0 874.0h23.0v1.9h-23.0zM0.0 875.9h19.2v1.9h-19.2zM0.0 877.8h19.2v1.9h-19.2zM0.0 879.7h15.4v1.9h-15.4zM0.0 881.6h11.5v1.9h-11.5zM0.0 883.5h7.7v1.9h-7.7z"/><path fill="#ddd0e8" d="M0.0 0.0h83.0v1.9h-83.0zM0.0 1.9h83.0v1.9h-83.0zM0.0 3.8h83.0v1.9h-83.0zM0.0 5.7h83.0v1.9h-83.0zM0.0 7.6h83.0v1.9h-83.0zM0.0 9.5h83.0v1.9h-83.0z"/><path fill="#ab8cca" d="M0.0 0.0h18.2v1.9h-18.2zM0.0 1.9h20.2v1.9h-20.2zM0.0 3.8h22.1v1.9h-22.1zM0.0 5.7h21.1v1.9h-21.1zM0.0 7.6h8.6v1.9h-8.6zM0.0 9.5h5.8v1.9h-5.8z"/><path fill="rgba(90,50,140,0.5)" d="M4.0 0.1h11.2v1.6h-11.2zM15.5 0.1h0.7v1.6h-0.7zM17.4 0.1h0.7v1.6h-0.7zM7.8 2.0h9.3v1.6h-9.3zM17.4 2.0h0.7v1.6h-0.7zM19.3 2.0h0.7v1.6h-0.7zM11.6 3.9h2.6v1.6h-2.6zM14.5 3.9h0.7v1.6h-0.7zM16.4 3.9h4.5v1.6h-4.5zM21.2 3.9h0.7v1.6h-0.7zM11.6 5.8h2.6v1.6h-2.6zM14.5 5.8h0.7v1.6h-0.7zM16.4 5.8h4.5v1.6h-4.5zM7.8 7.8h0.7v1.6h-0.7zM4.0 9.7h1.6v1.6h-1.6z"/><path fill="rgba(163,21,21,0.4)" d="M4.0 11.5h8.3v1.6h-8.3zM11.6 15.3h8.3v1.6h-8.3zM11.6 17.2h12.2v1.6h-12.2zM11.6 19.1h12.2v1.6h-12.2zM11.6 21.0h14.1v1.6h-14.1zM11.6 22.9h6.4v1.6h-6.4zM11.6 24.8h5.5v1.6h-5.5zM11.6 26.7h6.4v1.6h-6.4zM11.6 28.6h12.2v1.6h-12.2zM11.6 34.3h8.3v1.6h-8.3zM11.6 36.2h12.2v1.6h-12.2zM11.6 38.1h12.2v1.6h-12.2zM11.6 40.0h14.1v1.6h-14.1zM11.6 41.9h6.4v1.6h-6.4zM11.6 43.8h5.5v1.6h-5.5zM11.6 45.7h6.4v1.6h-6.4zM11.6 47.6h12.2v1.6h-12.2zM11.6 53.3h8.3v1.6h-8.3zM11.6 55.2h12.2v1.6h-12.2zM11.6 57.1h12.2v1.6h-12.2zM11.6 59.0h14.1v1.6h-14.1zM11.6 60.9h6.4v1.6h-6.4zM11.6 62.8h5.5v1.6h-5.5zM11.6 64.8h6.4v1.6h-6.4zM11.6 66.7h12.2v1.6h-12.2zM11.6 72.4h8.3v1.6h-8.3zM11.6 74.2h12.2v1.6h-12.2zM11.6 76.2h12.2v1.6h-12.2zM11.6 78.0h14.1v1.6h-14.1zM11.6 80.0h6.4v1.6h-6.4zM11.6 81.9h5.5v1.6h-5.5zM11.6 83.8h6.4v1.6h-6.4zM11.6 85.7h12.2v1.6h-12.2zM11.6 87.5h11.2v1.6h-11.2zM11.6 89.5h3.5v1.6h-3.5zM11.6 91.3h12.2v1.6h-12.2zM11.6 97.0h8.3v1.6h-8.3zM11.6 99.0h12.2v1.6h-12.2zM11.6 100.8h12.2v1.6h-12.2zM11.6 102.8h14.1v1.6h-14.1zM11.6 104.7h6.4v1.6h-6.4zM11.6 106.5h5.5v1.6h-5.5zM11.6 108.5h6.4v1.6h-6.4zM11.6 110.3h9.3v1.6h-9.3zM11.6 112.2h8.3v1.6h-8.3zM11.6 114.2h12.2v1.6h-12.2zM11.6 116.0h14.1v1.6h-14.1zM11.6 118.0h10.3v1.6h-10.3zM11.6 119.8h11.2v1.6h-11.2zM11.6 121.8h3.5v1.6h-3.5zM11.6 123.7h12.2v1.6h-12.2zM11.6 169.2h8.3v1.6h-8.3zM11.6 171.2h12.2v1.6h-12.2zM11.6 173.1h12.2v1.6h-12.2zM11.6 174.9h14.1v1.6h-14.1zM11.6 176.8h6.4v1.6h-6.4zM11.6 178.8h5.5v1.6h-5.5zM11.6 180.7h6.4v1.6h-6.4zM11.6 182.5h9.3v1.6h-9.3zM11.6 184.4h8.3v1.6h-8.3zM11.6 186.3h12.2v1.6h-12.2zM11.6 188.2h11.2v1.6h-11.2zM11.6 190.2h3.5v1.6h-3.5zM11.6 192.0h6.4v1.6h-6.4zM11.6 197.8h12.2v1.6h-12.2zM11.6 203.4h8.3v1.6h-8.3zM11.6 205.3h12.2v1.6h-12.2zM11.6 207.2h12.2v1.6h-12.2zM11.6 209.2h14.1v1.6h-14.1zM11.6 211.0h6.4v1.6h-6.4zM11.6 212.9h5.5v1.6h-5.5zM11.6 214.8h6.4v1.6h-6.4zM11.6 216.8h9.3v1.6h-9.3zM11.6 218.7h8.3v1.6h-8.3zM11.6 220.5h12.2v1.6h-12.2zM11.6 222.4h14.1v1.6h-14.1zM11.6 224.3h6.4v1.6h-6.4zM11.6 230.0h12.2v1.6h-12.2zM11.6 235.8h8.3v1.6h-8.3zM11.6 237.7h12.2v1.6h-12.2zM11.6 239.5h12.2v1.6h-12.2zM11.6 241.4h14.1v1.6h-14.1zM11.6 243.3h6.4v1.6h-6.4zM11.6 245.2h5.5v1.6h-5.5zM11.6 247.2h6.4v1.6h-6.4zM11.6 249.0h9.3v1.6h-9.3zM11.6 250.9h8.3v1.6h-8.3zM11.6 252.8h12.2v1.6h-12.2zM11.6 254.8h14.1v1.6h-14.1zM11.6 256.6h10.3v1.6h-10.3zM11.6 258.5h11.2v1.6h-11.2zM11.6 260.4h3.5v1.6h-3.5zM11.6 262.3h6.4v1.6h-6.4zM11.6 268.0h12.2v1.6h-12.2zM11.6 273.7h8.3v1.6h-8.3zM11.6 275.6h12.2v1.6h-12.2zM11.6 277.5h12.2v1.6h-12.2zM11.6 279.4h14.1v1.6h-14.1zM11.6 281.3h6.4v1.6h-6.4zM11.6 283.2h5.5v1.6h-5.5zM11.6 285.1h6.4v1.6h-6.4zM11.6 287.0h9.3v1.6h-9.3zM11.6 288.9h8.3v1.6h-8.3zM11.6 290.8h12.2v1.6h-12.2zM11.6 292.7h14.1v1.6h-14.1zM11.6 294.6h3.5v1.6h-3.5zM11.6 296.5h12.2v1.6h-12.2zM11.6 302.2h8.3v1.6h-8.3zM11.6 304.1h12.2v1.6h-12.2zM11.6 306.0h12.2v1.6h-12.2zM11.6 307.9h14.1v1.6h-14.1zM11.6 309.8h6.4v1.6h-6.4zM11.6 311.7h5.5v1.6h-5.5zM11.6 313.6h6.4v1.6h-6.4zM11.6 315.5h9.3v1.6h-9.3zM11.6 317.4h8.3v1.6h-8.3zM11.6 319.3h12.2v1.6h-12.2zM11.6 321.2h14.1v1.6h-14.1zM11.6 323.1h10.3v1.6h-10.3zM11.6 325.0h11.2v1.6h-11.2zM11.6 326.9h3.5v1.6h-3.5zM11.6 328.8h6.4v1.6h-6.4zM11.6 330.7h9.3v1.6h-9.3zM11.6 332.6h8.3v1.6h-8.3zM11.6 334.5h10.3v1.6h-10.3zM11.6 336.4h12.2v1.6h-12.2zM11.6 342.1h8.3v1.6h-8.3zM11.6 344.0h12.2v1.6h-12.2zM11.6 345.9h12.2v1.6h-12.2zM11.6 347.8h14.1v1.6h-14.1zM11.6 349.7h6.4v1.6h-6.4zM11.6 351.6h5.5v1.6h-5.5zM11.6 353.5h6.4v1.6h-6.4zM11.6 355.4h6.4v1.6h-6.4zM11.6 361.1h12.2v1.6h-12.2zM11.6 366.8h8.3v1.6h-8.3zM11.6 368.7h12.2v1.6h-12.2zM11.6 370.6h12.2v1.6h-12.2zM11.6 372.5h14.1v1.6h-14.1zM11.6 374.4h6.4v1.6h-6.4zM11.6 376.3h5.5v1.6h-5.5zM11.6 378.2h6.4v1.6h-6.4zM11.6 380.1h9.3v1.6h-9.3zM11.6 382.0h8.3v1.6h-8.3zM11.6 383.9h12.2v1.6h-12.2zM11.6 385.8h14.1v1.6h-14.1zM11.6 387.7h10.3v1.6h-10.3zM11.6 389.6h11.2v1.6h-11.2zM11.6 391.5h12.2v1.6h-12.2zM11.6 397.2h8.3v1.6h-8.3zM11.6 399.1h12.2v1.6h-12.2zM11.6 401.0h12.2v1.6h-12.2zM11.6 402.9h14.1v1.6h-14.1zM11.6 404.8h6.4v1.6h-6.4zM11.6 406.7h5.5v1.6h-5.5zM11.6 408.6h6.4v1.6h-6.4zM11.6 410.5h9.3v1.6h-9.3zM11.6 412.4h8.3v1.6h-8.3zM11.6 414.3h12.2v1.6h-12.2zM11.6 416.2h14.1v1.6h-14.1zM11.6 418.1h10.3v1.6h-10.3zM11.6 420.0h11.2v1.6h-11.2zM11.6 421.9h3.5v1.6h-3.5zM11.6 423.8h6.4v1.6h-6.4zM11.6 425.7h6.4v1.6h-6.4zM11.6 431.4h12.2v1.6h-12.2zM11.6 437.1h8.3v1.6h-8.3zM11.6 439.0h12.2v1.6h-12.2zM11.6 440.9h12.2v1.6h-12.2zM11.6 442.8h14.1v1.6h-14.1zM11.6 444.7h6.4v1.6h-6.4zM11.6 446.6h5.5v1.6h-5.5zM11.6 448.5h6.4v1.6h-6.4zM11.6 450.4h9.3v1.6h-9.3zM11.6 452.3h8.3v1.6h-8.3zM11.6 454.2h12.2v1.6h-12.2zM11.6 456.1h14.1v1.6h-14.1zM11.6 458.0h10.3v1.6h-10.3zM11.6 459.9h11.2v1.6h-11.2zM11.6 461.8h3.5v1.6h-3.5zM11.6 463.7h6.4v1.6h-6.4zM11.6 465.6h12.2v1.6h-12.2zM11.6 471.3h8.3v1.6h-8.3zM11.6 473.2h12.2v1.6h-12.2zM11.6 475.1h12.2v1.6h-12.2zM11.6 477.0h14.1v1.6h-14.1zM11.6 478.9h6.4v1.6h-6.4zM11.6 480.8h5.5v1.6h-5.5zM11.6 482.7h6.4v1.6h-6.4zM11.6 484.6h12.2v1.6h-12.2zM11.6 486.5h11.2v1.6h-11.2zM11.6 488.4h6.4v1.6h-6.4zM11.6 494.1h12.2v1.6h-12.2zM11.6 499.8h8.3v1.6h-8.3zM11.6 501.7h12.2v1.6h-12.2zM11.6 503.6h12.2v1.6h-12.2zM11.6 505.5h14.1v1.6h-14.1zM11.6 507.4h6.4v1.6h-6.4zM11.6 509.3h5.5v1.6h-5.5zM11.6 511.2h6.4v1.6h-6.4zM11.6 513.1h9.3v1.6h-9.3zM11.6 515.0h8.3v1.6h-8.3zM11.6 516.9h12.2v1.6h-12.2zM11.6 518.8h14.1v1.6h-14.1zM11.6 520.8h10.3v1.6h-10.3zM11.6 522.6h11.2v1.6h-11.2zM11.6 524.5h3.5v1.6h-3.5zM11.6 526.4h6.4v1.6h-6.4zM11.6 528.3h9.3v1.6h-9.3zM11.6 530.2h12.2v1.6h-12.2zM11.6 592.9h8.3v1.6h-8.3zM11.6 594.8h12.2v1.6h-12.2zM11.6 596.8h12.2v1.6h-12.2zM11.6 598.6h14.1v1.6h-14.1zM11.6 600.5h6.4v1.6h-6.4zM11.6 602.4h5.5v1.6h-5.5zM11.6 604.3h6.4v1.6h-6.4zM11.6 606.2h12.2v1.6h-12.2zM11.6 608.1h12.2v1.6h-12.2zM11.6 613.8h8.3v1.6h-8.3zM11.6 615.8h12.2v1.6h-12.2zM11.6 617.6h12.2v1.6h-12.2zM11.6 619.5h14.1v1.6h-14.1zM11.6 621.4h6.4v1.6h-6.4zM11.6 623.3h5.5v1.6h-5.5zM11.6 625.2h6.4v1.6h-6.4zM11.6 627.1h12.2v1.6h-12.2zM11.6 629.0h14.1v1.6h-14.1zM11.6 630.9h3.5v1.6h-3.5zM11.6 632.8h12.2v1.6h-12.2zM11.6 680.3h8.3v1.6h-8.3zM11.6 682.2h12.2v1.6h-12.2zM11.6 684.1h12.2v1.6h-12.2zM11.6 686.0h14.1v1.6h-14.1zM11.6 687.9h6.4v1.6h-6.4zM11.6 689.8h5.5v1.6h-5.5zM11.6 691.8h6.4v1.6h-6.4zM11.6 693.6h8.3v1.6h-8.3zM11.6 695.5h12.2v1.6h-12.2zM11.6 697.4h14.1v1.6h-14.1zM11.6 699.3h10.3v1.6h-10.3zM11.6 701.2h3.5v1.6h-3.5zM11.6 703.1h12.2v1.6h-12.2zM11.6 708.8h8.3v1.6h-8.3zM11.6 710.8h12.2v1.6h-12.2zM11.6 712.6h12.2v1.6h-12.2zM11.6 714.5h14.1v1.6h-14.1zM11.6 716.4h6.4v1.6h-6.4zM11.6 718.3h5.5v1.6h-5.5zM11.6 720.2h6.4v1.6h-6.4zM11.6 722.1h9.3v1.6h-9.3zM11.6 724.0h8.3v1.6h-8.3zM11.6 725.9h12.2v1.6h-12.2zM11.6 727.8h14.1v1.6h-14.1zM11.6 729.7h10.3v1.6h-10.3zM11.6 731.6h3.5v1.6h-3.5zM11.6 733.5h12.2v1.6h-12.2zM11.6 739.2h8.3v1.6h-8.3zM11.6 741.1h12.2v1.6h-12.2zM11.6 743.0h12.2v1.6h-12.2zM11.6 744.9h14.1v1.6h-14.1zM11.6 746.8h6.4v1.6h-6.4zM11.6 748.7h5.5v1.6h-5.5zM11.6 750.6h6.4v1.6h-6.4zM11.6 752.5h9.3v1.6h-9.3zM11.6 754.4h8.3v1.6h-8.3zM11.6 756.3h12.2v1.6h-12.2zM11.6 758.2h14.1v1.6h-14.1zM11.6 760.1h10.3v1.6h-10.3zM11.6 762.0h11.2v1.6h-11.2zM11.6 763.9h3.5v1.6h-3.5zM11.6 765.8h6.4v1.6h-6.4zM11.6 767.7h6.4v1.6h-6.4zM11.6 773.4h12.2v1.6h-12.2zM11.6 779.1h8.3v1.6h-8.3zM11.6 781.0h12.2v1.6h-12.2zM11.6 782.9h12.2v1.6h-12.2zM11.6 784.8h14.1v1.6h-14.1zM11.6 786.7h6.4v1.6h-6.4zM11.6 788.6h5.5v1.6h-5.5zM11.6 790.5h6.4v1.6h-6.4zM11.6 792.4h9.3v1.6h-9.3zM11.6 794.3h8.3v1.6h-8.3zM11.6 796.2h12.2v1.6h-12.2zM11.6 798.1h14.1v1.6h-14.1zM11.6 800.0h10.3v1.6h-10.3zM11.6 801.9h11.2v1.6h-11.2zM11.6 803.8h3.5v1.6h-3.5zM11.6 805.7h6.4v1.6h-6.4zM11.6 807.6h12.2v1.6h-12.2zM11.6 813.3h8.3v1.6h-8.3zM11.6 815.2h12.2v1.6h-12.2zM11.6 817.1h12.2v1.6h-12.2zM11.6 819.0h14.1v1.6h-14.1zM11.6 820.9h6.4v1.6h-6.4zM11.6 822.8h5.5v1.6h-5.5zM11.6 824.7h6.4v1.6h-6.4zM11.6 826.6h9.3v1.6h-9.3zM11.6 828.5h8.3v1.6h-8.3zM11.6 830.4h12.2v1.6h-12.2zM11.6 832.3h14.1v1.6h-14.1zM11.6 834.2h10.3v1.6h-10.3zM11.6 836.1h11.2v1.6h-11.2zM11.6 838.0h3.5v1.6h-3.5zM11.6 839.9h12.2v1.6h-12.2zM11.6 887.4h8.3v1.6h-8.3zM11.6 889.3h12.2v1.6h-12.2zM11.6 891.2h12.2v1.6h-12.2zM11.6 893.1h14.1v1.6h-14.1zM11.6 895.0h6.4v1.6h-6.4zM11.6 896.9h5.5v1.6h-5.5zM11.6 898.8h6.4v1.6h-6.4z"/><path fill="rgba(0,0,0,0.3)" d="M12.6 11.5h0.7v1.6h-0.7zM14.5 11.5h0.7v1.6h-0.7zM7.8 13.4h0.7v1.6h-0.7zM20.3 15.3h0.7v1.6h-0.7zM28.0 15.3h0.7v1.6h-0.7zM24.1 17.2h0.7v1.6h-0.7zM41.4 17.2h0.7v1.6h-0.7zM24.1 19.1h0.7v1.6h-0.7zM58.7 19.1h0.7v1.6h-0.7zM26.0 21.0h0.7v1.6h-0.7zM31.8 21.0h0.7v1.6h-0.7zM18.4 22.9h0.7v1.6h-0.7zM29.9 22.9h0.7v1.6h-0.7zM17.4 24.8h0.7v1.6h-0.7zM28.9 24.8h0.7v1.6h-0.7zM18.4 26.7h0.7v1.6h-0.7zM49.1 26.7h0.7v1.6h-0.7zM24.1 28.6h0.7v1.6h-0.7zM7.8 30.5h1.6v1.6h-1.6zM7.8 32.4h0.7v1.6h-0.7zM20.3 34.3h0.7v1.6h-0.7zM28.0 34.3h0.7v1.6h-0.7zM24.1 36.2h0.7v1.6h-0.7zM51.0 36.2h0.7v1.6h-0.7zM24.1 38.1h0.7v1.6h-0.7zM58.7 38.1h0.7v1.6h-0.7zM26.0 40.0h0.7v1.6h-0.7zM32.8 40.0h0.7v1.6h-0.7zM18.4 41.9h0.7v1.6h-0.7zM29.9 41.9h0.7v1.6h-0.7zM17.4 43.8h0.7v1.6h-0.7zM28.9 43.8h0.7v1.6h-0.7zM18.4 45.7h0.7v1.6h-0.7zM33.7 45.7h0.7v1.6h-0.7zM24.1 47.6h0.7v1.6h-0.7zM7.8 49.5h1.6v1.6h-1.6zM7.8 51.4h0.7v1.6h-0.7zM20.3 53.3h0.7v1.6h-0.7zM28.0 53.3h0.7v1.6h-0.7zM24.1 55.2h0.7v1.6h-0.7zM30.8 55.2h0.7v1.6h-0.7zM24.1 57.1h0.7v1.6h-0.7zM58.7 57.1h0.7v1.6h-0.7zM26.0 59.0h0.7v1.6h-0.7zM31.8 59.0h0.7v1.6h-0.7zM18.4 60.9h0.7v1.6h-0.7zM29.9 60.9h0.7v1.6h-0.7zM17.4 62.8h0.7v1.6h-0.7zM28.9 62.8h0.7v1.6h-0.7zM18.4 64.8h0.7v1.6h-0.7zM49.1 64.8h0.7v1.6h-0.7zM24.1 66.7h0.7v1.6h-0.7zM7.8 68.5h1.6v1.6h-1.6zM7.8 70.5h0.7v1.6h-0.7zM20.3 72.4h0.7v1.6h-0.7zM28.0 72.4h0.7v1.6h-0.7zM24.1 74.2h0.7v1.6h-0.7zM46.2 74.2h0.7v1.6h-0.7zM24.1 76.2h0.7v1.6h-0.7zM58.7 76.2h0.7v1.6h-0.7zM26.0 78.0h0.7v1.6h-0.7zM32.8 78.0h0.7v1.6h-0.7zM18.4 80.0h0.7v1.6h-0.7zM29.9 80.0h0.7v1.6h-0.7zM17.4 81.9h0.7v1.6h-0.7zM28.9 81.9h0.7v1.6h-0.7zM18.4 83.8h0.7v1.6h-0.7zM33.7 83.8h0.7v1.6h-0.7zM24.1 85.7h0.7v1.6h-0.7zM23.2 87.5h0.7v1.6h-0.7zM26.0 87.5h0.7v1.6h-0.7zM15.5 89.5h0.7v1.6h-0.7zM18.4 89.5h0.7v1.6h-0.7zM24.1 91.3h0.7v1.6h-0.7zM7.8 93.2h1.6v1.6h-1.6zM7.8 95.2h0.7v1.6h-0.7zM20.3 97.0h0.7v1.6h-0.7zM28.0 97.0h0.7v1.6h-0.7zM24.1 99.0h0.7v1.6h-0.7zM34.7 99.0h0.7v1.6h-0.7zM24.1 100.8h0.7v1.6h-0.7zM58.7 100.8h0.7v1.6h-0.7zM26.0 102.8h0.7v1.6h-0.7zM31.8 102.8h0.7v1.6h-0.7zM18.4 104.7h0.7v1.6h-0.7zM29.9 104.7h0.7v1.6h-0.7zM17.4 106.5h0.7v1.6h-0.7zM28.9 106.5h0.7v1.6h-0.7zM18.4 108.5h0.7v1.6h-0.7zM44.3 108.5h0.7v1.6h-0.7zM21.2 110.3h0.7v1.6h-0.7zM42.4 110.3h0.7v1.6h-0.7zM20.3 112.2h0.7v1.6h-0.7zM46.2 112.2h0.7v1.6h-0.7zM24.1 114.2h0.7v1.6h-0.7zM26.0 116.0h0.7v1.6h-0.7zM28.9 116.0h0.7v1.6h-0.7zM22.2 118.0h0.7v1.6h-0.7zM25.1 118.0h0.7v1.6h-0.7zM23.2 119.8h0.7v1.6h-0.7zM26.0 119.8h0.7v1.6h-0.7zM15.5 121.8h0.7v1.6h-0.7zM18.4 121.8h0.7v1.6h-0.7zM24.1 123.7h0.7v1.6h-0.7zM7.8 125.5h1.6v1.6h-1.6zM7.8 167.3h0.7v1.6h-0.7zM20.3 169.2h0.7v1.6h-0.7zM28.0 169.2h0.7v1.6h-0.7zM24.1 171.2h0.7v1.6h-0.7zM47.2 171.2h0.7v1.6h-0.7zM24.1 173.1h0.7v1.6h-0.7zM58.7 173.1h0.7v1.6h-0.7zM26.0 174.9h0.7v1.6h-0.7zM33.7 174.9h0.7v1.6h-0.7zM18.4 176.8h0.7v1.6h-0.7zM29.9 176.8h0.7v1.6h-0.7zM17.4 178.8h0.7v1.6h-0.7zM28.9 178.8h0.7v1.6h-0.7zM18.4 180.7h0.7v1.6h-0.7zM30.8 180.7h0.7v1.6h-0.7zM21.2 182.5h0.7v1.6h-0.7zM32.8 182.5h0.7v1.6h-0.7zM20.3 184.4h0.7v1.6h-0.7zM56.8 184.4h0.7v1.6h-0.7zM24.1 186.3h0.7v1.6h-0.7zM23.2 188.2h0.7v1.6h-0.7zM26.0 188.2h0.7v1.6h-0.7zM15.5 190.2h0.7v1.6h-0.7zM18.4 190.2h0.7v1.6h-0.7zM18.4 192.0h0.7v1.6h-0.7zM20.3 192.0h0.7v1.6h-0.7zM11.6 195.8h1.6v1.6h-1.6zM24.1 197.8h0.7v1.6h-0.7zM7.8 199.7h1.6v1.6h-1.6zM7.8 201.5h0.7v1.6h-0.7zM20.3 203.4h0.7v1.6h-0.7zM28.0 203.4h0.7v1.6h-0.7zM24.1 205.3h0.7v1.6h-0.7zM44.3 205.3h0.7v1.6h-0.7zM24.1 207.2h0.7v1.6h-0.7zM58.7 207.2h0.7v1.6h-0.7zM26.0 209.2h0.7v1.6h-0.7zM33.7 209.2h0.7v1.6h-0.7zM18.4 211.0h0.7v1.6h-0.7zM29.9 211.0h0.7v1.6h-0.7zM17.4 212.9h0.7v1.6h-0.7zM28.9 212.9h0.7v1.6h-0.7zM18.4 214.8h0.7v1.6h-0.7zM28.9 214.8h0.7v1.6h-0.7zM21.2 216.8h0.7v1.6h-0.7zM36.6 216.8h0.7v1.6h-0.7zM20.3 218.7h0.7v1.6h-0.7zM51.0 218.7h0.7v1.6h-0.7zM24.1 220.5h0.7v1.6h-0.7zM26.0 222.4h0.7v1.6h-0.7zM28.9 222.4h0.7v1.6h-0.7zM18.4 224.3h0.7v1.6h-0.7zM20.3 224.3h0.7v1.6h-0.7zM11.6 228.2h1.6v1.6h-1.6zM24.1 230.0h0.7v1.6h-0.7zM7.8 231.9h1.6v1.6h-1.6zM7.8 233.8h0.7v1.6h-0.7zM20.3 235.8h0.7v1.6h-0.7zM28.0 235.8h0.7v1.6h-0.7zM24.1 237.7h0.7v1.6h-0.7zM42.4 237.7h0.7v1.6h-0.7zM24.1 239.5h0.7v1.6h-0.7zM58.7 239.5h0.7v1.6h-0.7zM26.0 241.4h0.7v1.6h-0.7zM31.8 241.4h0.7v1.6h-0.7zM18.4 243.3h0.7v1.6h-0.7zM29.9 243.3h0.7v1.6h-0.7zM17.4 245.2h0.7v1.6h-0.7zM28.9 245.2h0.7v1.6h-0.7zM18.4 247.2h0.7v1.6h-0.7zM41.4 247.2h0.7v1.6h-0.7zM21.2 249.0h0.7v1.6h-0.7zM33.7 249.0h0.7v1.6h-0.7zM20.3 250.9h0.7v1.6h-0.7zM58.7 250.9h0.7v1.6h-0.7zM24.1 252.8h0.7v1.6h-0.7zM26.0 254.8h0.7v1.6h-0.7zM28.9 254.8h0.7v1.6h-0.7zM22.2 256.6h0.7v1.6h-0.7zM25.1 256.6h0.7v1.6h-0.7zM23.2 258.5h0.7v1.6h-0.7zM26.0 258.5h0.7v1.6h-0.7zM15.5 260.4h0.7v1.6h-0.7zM18.4 260.4h0.7v1.6h-0.7zM18.4 262.3h0.7v1.6h-0.7zM20.3 262.3h0.7v1.6h-0.7zM11.6 266.1h1.6v1.6h-1.6zM24.1 268.0h0.7v1.6h-0.7zM7.8 269.9h1.6v1.6h-1.6zM7.8 271.8h0.7v1.6h-0.7zM20.3 273.7h0.7v1.6h-0.7zM28.0 273.7h0.7v1.6h-0.7zM24.1 275.6h0.7v1.6h-0.7zM42.4 275.6h0.7v1.6h-0.7zM24.1 277.5h0.7v1.6h-0.7zM58.7 277.5h0.7v1.6h-0.7zM26.0 279.4h0.7v1.6h-0.7zM31.8 279.4h0.7v1.6h-0.7zM18.4 281.3h0.7v1.6h-0.7zM29.9 281.3h0.7v1.6h-0.7zM17.4 283.2h0.7v1.6h-0.7zM28.9 283.2h0.7v1.6h-0.7zM18.4 285.1h0.7v1.6h-0.7zM28.0 285.1h0.7v1.6h-0.7zM21.2 287.0h0.7v1.6h-0.7zM53.9 287.0h0.7v1.6h-0.7zM20.3 288.9h0.7v1.6h-0.7zM66.4 288.9h0.7v1.6h-0.7zM24.1 290.8h0.7v1.6h-0.7zM26.0 292.7h0.7v1.6h-0.7zM28.9 292.7h0.7v1.6h-0.7zM15.5 294.6h0.7v1.6h-0.7zM18.4 294.6h0.7v1.6h-0.7zM24.1 296.5h0.7v1.6h-0.7zM7.8 298.4h1.6v1.6h-1.6zM7.8 300.3h0.7v1.6h-0.7zM20.3 302.2h0.7v1.6h-0.7zM28.0 302.2h0.7v1.6h-0.7zM24.1 304.1h0.7v1.6h-0.7zM45.2 304.1h0.7v1.6h-0.7zM24.1 306.0h0.7v1.6h-0.7zM58.7 306.0h0.7v1.6h-0.7zM26.0 307.9h0.7v1.6h-0.7zM31.8 307.9h0.7v1.6h-0.7zM18.4 309.8h0.7v1.6h-0.7zM29.9 309.8h0.7v1.6h-0.7zM17.4 311.7h0.7v1.6h-0.7zM28.9 311.7h0.7v1.6h-0.7zM18.4 313.6h0.7v1.6h-0.7zM33.7 313.6h0.7v1.6h-0.7zM21.2 315.5h0.7v1.6h-0.7zM47.2 315.5h0.7v1.6h-0.7zM20.3 317.4h0.7v1.6h-0.7zM43.3 317.4h0.7v1.6h-0.7zM24.1 319.3h0.7v1.6h-0.7zM26.0 321.2h0.7v1.6h-0.7zM28.9 321.2h0.7v1.6h-0.7zM22.2 323.1h0.7v1.6h-0.7zM25.1 323.1h0.7v1.6h-0.7zM23.2 325.0h0.7v1.6h-0.7zM26.0 325.0h0.7v1.6h-0.7zM15.5 326.9h0.7v1.6h-0.7zM18.4 326.9h0.7v1.6h-0.7zM18.4 328.8h0.7v1.6h-0.7zM42.4 328.8h0.7v1.6h-0.7zM21.2 330.7h0.7v1.6h-0.7zM34.7 330.7h0.7v1.6h-0.7zM20.3 332.6h0.7v1.6h-0.7zM37.6 332.6h0.7v1.6h-0.7zM22.2 334.5h0.7v1.6h-0.7zM25.1 334.5h0.7v1.6h-0.7zM24.1 336.4h0.7v1.6h-0.7zM7.8 338.3h1.6v1.6h-1.6zM7.8 340.2h0.7v1.6h-0.7zM20.3 342.1h0.7v1.6h-0.7zM28.0 342.1h0.7v1.6h-0.7zM24.1 344.0h0.7v1.6h-0.7zM30.8 344.0h0.7v1.6h-0.7zM24.1 345.9h0.7v1.6h-0.7zM58.7 345.9h0.7v1.6h-0.7zM26.0 347.8h0.7v1.6h-0.7zM32.8 347.8h0.7v1.6h-0.7zM18.4 349.7h0.7v1.6h-0.7zM29.9 349.7h0.7v1.6h-0.7zM17.4 351.6h0.7v1.6h-0.7zM28.9 351.6h0.7v1.6h-0.7zM18.4 353.5h0.7v1.6h-0.7zM34.7 353.5h0.7v1.6h-0.7zM18.4 355.4h0.7v1.6h-0.7zM20.3 355.4h0.7v1.6h-0.7zM11.6 359.2h1.6v1.6h-1.6zM24.1 361.1h0.7v1.6h-0.7zM7.8 363.0h1.6v1.6h-1.6zM7.8 364.9h0.7v1.6h-0.7zM20.3 366.8h0.7v1.6h-0.7zM28.0 366.8h0.7v1.6h-0.7zM24.1 368.7h0.7v1.6h-0.7zM46.2 368.7h0.7v1.6h-0.7zM24.1 370.6h0.7v1.6h-0.7zM58.7 370.6h0.7v1.6h-0.7zM26.0 372.5h0.7v1.6h-0.7zM31.8 372.5h0.7v1.6h-0.7zM18.4 374.4h0.7v1.6h-0.7zM29.9 374.4h0.7v1.6h-0.7zM17.4 376.3h0.7v1.6h-0.7zM28.9 376.3h0.7v1.6h-0.7zM18.4 378.2h0.7v1.6h-0.7zM43.3 378.2h0.7v1.6h-0.7zM21.2 380.1h0.7v1.6h-0.7zM32.8 380.1h0.7v1.6h-0.7zM20.3 382.0h0.7v1.6h-0.7zM52.0 382.0h0.7v1.6h-0.7zM24.1 383.9h0.7v1.6h-0.7zM26.0 385.8h0.7v1.6h-0.7zM28.9 385.8h0.7v1.6h-0.7zM22.2 387.7h0.7v1.6h-0.7zM25.1 387.7h0.7v1.6h-0.7zM23.2 389.6h0.7v1.6h-0.7zM26.0 389.6h0.7v1.6h-0.7zM24.1 391.5h0.7v1.6h-0.7zM7.8 393.4h1.6v1.6h-1.6zM7.8 395.3h0.7v1.6h-0.7zM20.3 397.2h0.7v1.6h-0.7zM28.0 397.2h0.7v1.6h-0.7zM24.1 399.1h0.7v1.6h-0.7zM39.5 399.1h0.7v1.6h-0.7zM24.1 401.0h0.7v1.6h-0.7zM58.7 401.0h0.7v1.6h-0.7zM26.0 402.9h0.7v1.6h-0.7zM32.8 402.9h0.7v1.6h-0.7zM18.4 404.8h0.7v1.6h-0.7zM29.9 404.8h0.7v1.6h-0.7zM17.4 406.7h0.7v1.6h-0.7zM28.9 406.7h0.7v1.6h-0.7zM18.4 408.6h0.7v1.6h-0.7zM46.2 408.6h0.7v1.6h-0.7zM21.2 410.5h0.7v1.6h-0.7zM45.2 410.5h0.7v1.6h-0.7zM20.3 412.4h0.7v1.6h-0.7zM58.7 412.4h0.7v1.6h-0.7zM24.1 414.3h0.7v1.6h-0.7zM26.0 416.2h0.7v1.6h-0.7zM28.9 416.2h0.7v1.6h-0.7zM22.2 418.1h0.7v1.6h-0.7zM25.1 418.1h0.7v1.6h-0.7zM23.2 420.0h0.7v1.6h-0.7zM26.0 420.0h0.7v1.6h-0.7zM15.5 421.9h0.7v1.6h-0.7zM18.4 421.9h0.7v1.6h-0.7zM18.4 423.8h0.7v1.6h-0.7zM40.4 423.8h0.7v1.6h-0.7zM18.4 425.7h0.7v1.6h-0.7zM20.3 425.7h0.7v1.6h-0.7zM11.6 429.5h1.6v1.6h-1.6zM24.1 431.4h0.7v1.6h-0.7zM7.8 433.3h1.6v1.6h-1.6zM7.8 435.2h0.7v1.6h-0.7zM20.3 437.1h0.7v1.6h-0.7zM28.0 437.1h0.7v1.6h-0.7zM24.1 439.0h0.7v1.6h-0.7zM38.5 439.0h0.7v1.6h-0.7zM24.1 440.9h0.7v1.6h-0.7zM58.7 440.9h0.7v1.6h-0.7zM26.0 442.8h0.7v1.6h-0.7zM31.8 442.8h0.7v1.6h-0.7zM18.4 444.7h0.7v1.6h-0.7zM29.9 444.7h0.7v1.6h-0.7zM17.4 446.6h0.7v1.6h-0.7zM28.9 446.6h0.7v1.6h-0.7zM18.4 448.5h0.7v1.6h-0.7zM49.1 448.5h0.7v1.6h-0.7zM21.2 450.4h0.7v1.6h-0.7zM40.4 450.4h0.7v1.6h-0.7zM20.3 452.3h0.7v1.6h-0.7zM50.0 452.3h0.7v1.6h-0.7zM24.1 454.2h0.7v1.6h-0.7zM26.0 456.1h0.7v1.6h-0.7zM28.9 456.1h0.7v1.6h-0.7zM22.2 458.0h0.7v1.6h-0.7zM25.1 458.0h0.7v1.6h-0.7zM23.2 459.9h0.7v1.6h-0.7zM26.0 459.9h0.7v1.6h-0.7zM15.5 461.8h0.7v1.6h-0.7zM18.4 461.8h0.7v1.6h-0.7zM18.4 463.7h0.7v1.6h-0.7zM32.8 463.7h0.7v1.6h-0.7zM24.1 465.6h0.7v1.6h-0.7zM7.8 467.5h1.6v1.6h-1.6zM7.8 469.4h0.7v1.6h-0.7zM20.3 471.3h0.7v1.6h-0.7zM28.0 471.3h0.7v1.6h-0.7zM24.1 473.2h0.7v1.6h-0.7zM36.6 473.2h0.7v1.6h-0.7zM24.1 475.1h0.7v1.6h-0.7zM58.7 475.1h0.7v1.6h-0.7zM26.0 477.0h0.7v1.6h-0.7zM32.8 477.0h0.7v1.6h-0.7zM18.4 478.9h0.7v1.6h-0.7zM29.9 478.9h0.7v1.6h-0.7zM17.4 480.8h0.7v1.6h-0.7zM28.9 480.8h0.7v1.6h-0.7zM18.4 482.7h0.7v1.6h-0.7zM38.5 482.7h0.7v1.6h-0.7zM24.1 484.6h0.7v1.6h-0.7zM23.2 486.5h0.7v1.6h-0.7zM26.0 486.5h0.7v1.6h-0.7zM18.4 488.4h0.7v1.6h-0.7zM20.3 488.4h0.7v1.6h-0.7zM11.6 492.2h1.6v1.6h-1.6zM24.1 494.1h0.7v1.6h-0.7zM7.8 496.0h1.6v1.6h-1.6zM7.8 497.9h0.7v1.6h-0.7zM20.3 499.8h0.7v1.6h-0.7zM28.0 499.8h0.7v1.6h-0.7zM24.1 501.7h0.7v1.6h-0.7zM31.8 501.7h0.7v1.6h-0.7zM24.1 503.6h0.7v1.6h-0.7zM58.7 503.6h0.7v1.6h-0.7zM26.0 505.5h0.7v1.6h-0.7zM33.7 505.5h0.7v1.6h-0.7zM18.4 507.4h0.7v1.6h-0.7zM29.9 507.4h0.7v1.6h-0.7zM17.4 509.3h0.7v1.6h-0.7zM28.9 509.3h0.7v1.6h-0.7zM18.4 511.2h0.7v1.6h-0.7zM44.3 511.2h0.7v1.6h-0.7zM21.2 513.1h0.7v1.6h-0.7zM45.2 513.1h0.7v1.6h-0.7zM20.3 515.0h0.7v1.6h-0.7zM45.2 515.0h0.7v1.6h-0.7zM24.1 516.9h0.7v1.6h-0.7zM26.0 518.8h0.7v1.6h-0.7zM28.9 518.8h0.7v1.6h-0.7zM22.2 520.8h0.7v1.6h-0.7zM25.1 520.8h0.7v1.6h-0.7zM23.2 522.6h0.7v1.6h-0.7zM26.0 522.6h0.7v1.6h-0.7zM15.5 524.5h0.7v1.6h-0.7zM18.4 524.5h0.7v1.6h-0.7zM18.4 526.4h0.7v1.6h-0.7zM38.5 526.4h0.7v1.6h-0.7zM21.2 528.3h0.7v1.6h-0.7zM32.8 528.3h0.7v1.6h-0.7zM24.1 530.2h0.7v1.6h-0.7zM7.8 532.1h1.6v1.6h-1.6zM7.8 591.0h0.7v1.6h-0.7zM20.3 592.9h0.7v1.6h-0.7zM28.0 592.9h0.7v1.6h-0.7zM24.1 594.8h0.7v1.6h-0.7zM35.6 594.8h0.7v1.6h-0.7zM24.1 596.8h0.7v1.6h-0.7zM58.7 596.8h0.7v1.6h-0.7zM26.0 598.6h0.7v1.6h-0.7zM31.8 598.6h0.7v1.6h-0.7zM18.4 600.5h0.7v1.6h-0.7zM29.9 600.5h0.7v1.6h-0.7zM17.4 602.4h0.7v1.6h-0.7zM28.9 602.4h0.7v1.6h-0.7zM18.4 604.3h0.7v1.6h-0.7zM27.0 604.3h0.7v1.6h-0.7zM24.1 606.2h0.7v1.6h-0.7zM24.1 608.1h0.7v1.6h-0.7zM7.8 610.0h1.6v1.6h-1.6zM7.8 611.9h0.7v1.6h-0.7zM20.3 613.8h0.7v1.6h-0.7zM28.0 613.8h0.7v1.6h-0.7zM24.1 615.8h0.7v1.6h-0.7zM41.4 615.8h0.7v1.6h-0.7zM24.1 617.6h0.7v1.6h-0.7zM58.7 617.6h0.7v1.6h-0.7zM26.0 619.5h0.7v1.6h-0.7zM31.8 619.5h0.7v1.6h-0.7zM18.4 621.4h0.7v1.6h-0.7zM29.9 621.4h0.7v1.6h-0.7zM17.4 623.3h0.7v1.6h-0.7zM28.9 623.3h0.7v1.6h-0.7zM18.4 625.2h0.7v1.6h-0.7zM28.9 625.2h0.7v1.6h-0.7zM24.1 627.1h0.7v1.6h-0.7zM26.0 629.0h0.7v1.6h-0.7zM28.9 629.0h0.7v1.6h-0.7zM15.5 630.9h0.7v1.6h-0.7zM18.4 630.9h0.7v1.6h-0.7zM24.1 632.8h0.7v1.6h-0.7zM7.8 634.8h1.6v1.6h-1.6zM7.8 678.4h0.7v1.6h-0.7zM20.3 680.3h0.7v1.6h-0.7zM28.0 680.3h0.7v1.6h-0.7zM24.1 682.2h0.7v1.6h-0.7zM48.1 682.2h0.7v1.6h-0.7zM24.1 684.1h0.7v1.6h-0.7zM58.7 684.1h0.7v1.6h-0.7zM26.0 686.0h0.7v1.6h-0.7zM31.8 686.0h0.7v1.6h-0.7zM18.4 687.9h0.7v1.6h-0.7zM29.9 687.9h0.7v1.6h-0.7zM17.4 689.8h0.7v1.6h-0.7zM28.9 689.8h0.7v1.6h-0.7zM18.4 691.8h0.7v1.6h-0.7zM36.6 691.8h0.7v1.6h-0.7zM20.3 693.6h0.7v1.6h-0.7zM63.5 693.6h0.7v1.6h-0.7zM24.1 695.5h0.7v1.6h-0.7zM26.0 697.4h0.7v1.6h-0.7zM28.9 697.4h0.7v1.6h-0.7zM22.2 699.3h0.7v1.6h-0.7zM25.1 699.3h0.7v1.6h-0.7zM15.5 701.2h0.7v1.6h-0.7zM18.4 701.2h0.7v1.6h-0.7zM24.1 703.1h0.7v1.6h-0.7zM7.8 705.0h1.6v1.6h-1.6zM7.8 706.9h0.7v1.6h-0.7zM20.3 708.8h0.7v1.6h-0.7zM28.0 708.8h0.7v1.6h-0.7zM24.1 710.8h0.7v1.6h-0.7zM48.1 710.8h0.7v1.6h-0.7zM24.1 712.6h0.7v1.6h-0.7zM58.7 712.6h0.7v1.6h-0.7zM26.0 714.5h0.7v1.6h-0.7zM33.7 714.5h0.7v1.6h-0.7zM18.4 716.4h0.7v1.6h-0.7zM29.9 716.4h0.7v1.6h-0.7zM17.4 718.3h0.7v1.6h-0.7zM28.9 718.3h0.7v1.6h-0.7zM18.4 720.2h0.7v1.6h-0.7zM46.2 720.2h0.7v1.6h-0.7zM21.2 722.1h0.7v1.6h-0.7zM42.4 722.1h0.7v1.6h-0.7zM20.3 724.0h0.7v1.6h-0.7zM66.4 724.0h0.7v1.6h-0.7zM24.1 725.9h0.7v1.6h-0.7zM26.0 727.8h0.7v1.6h-0.7zM28.9 727.8h0.7v1.6h-0.7zM22.2 729.7h0.7v1.6h-0.7zM25.1 729.7h0.7v1.6h-0.7zM15.5 731.6h0.7v1.6h-0.7zM18.4 731.6h0.7v1.6h-0.7zM24.1 733.5h0.7v1.6h-0.7zM7.8 735.4h1.6v1.6h-1.6zM7.8 737.3h0.7v1.6h-0.7zM20.3 739.2h0.7v1.6h-0.7zM28.0 739.2h0.7v1.6h-0.7zM24.1 741.1h0.7v1.6h-0.7zM42.4 741.1h0.7v1.6h-0.7zM24.1 743.0h0.7v1.6h-0.7zM58.7 743.0h0.7v1.6h-0.7zM26.0 744.9h0.7v1.6h-0.7zM32.8 744.9h0.7v1.6h-0.7zM18.4 746.8h0.7v1.6h-0.7zM29.9 746.8h0.7v1.6h-0.7zM17.4 748.7h0.7v1.6h-0.7zM28.9 748.7h0.7v1.6h-0.7zM18.4 750.6h0.7v1.6h-0.7zM43.3 750.6h0.7v1.6h-0.7zM21.2 752.5h0.7v1.6h-0.7zM36.6 752.5h0.7v1.6h-0.7zM20.3 754.4h0.7v1.6h-0.7zM43.3 754.4h0.7v1.6h-0.7zM24.1 756.3h0.7v1.6h-0.7zM26.0 758.2h0.7v1.6h-0.7zM28.9 758.2h0.7v1.6h-0.7zM22.2 760.1h0.7v1.6h-0.7zM25.1 760.1h0.7v1.6h-0.7zM23.2 762.0h0.7v1.6h-0.7zM26.0 762.0h0.7v1.6h-0.7zM15.5 763.9h0.7v1.6h-0.7zM18.4 763.9h0.7v1.6h-0.7zM18.4 765.8h0.7v1.6h-0.7zM39.5 765.8h0.7v1.6h-0.7zM18.4 767.7h0.7v1.6h-0.7zM20.3 767.7h0.7v1.6h-0.7zM11.6 771.5h1.6v1.6h-1.6zM24.1 773.4h0.7v1.6h-0.7zM7.8 775.3h1.6v1.6h-1.6zM7.8 777.2h0.7v1.6h-0.7zM20.3 779.1h0.7v1.6h-0.7zM28.0 779.1h0.7v1.6h-0.7zM24.1 781.0h0.7v1.6h-0.7zM44.3 781.0h0.7v1.6h-0.7zM24.1 782.9h0.7v1.6h-0.7zM58.7 782.9h0.7v1.6h-0.7zM26.0 784.8h0.7v1.6h-0.7zM31.8 784.8h0.7v1.6h-0.7zM18.4 786.7h0.7v1.6h-0.7zM29.9 786.7h0.7v1.6h-0.7zM17.4 788.6h0.7v1.6h-0.7zM28.9 788.6h0.7v1.6h-0.7zM18.4 790.5h0.7v1.6h-0.7zM42.4 790.5h0.7v1.6h-0.7zM21.2 792.4h0.7v1.6h-0.7zM50.0 792.4h0.7v1.6h-0.7zM20.3 794.3h0.7v1.6h-0.7zM45.2 794.3h0.7v1.6h-0.7zM24.1 796.2h0.7v1.6h-0.7zM26.0 798.1h0.7v1.6h-0.7zM28.9 798.1h0.7v1.6h-0.7zM22.2 800.0h0.7v1.6h-0.7zM25.1 800.0h0.7v1.6h-0.7zM23.2 801.9h0.7v1.6h-0.7zM26.0 801.9h0.7v1.6h-0.7zM15.5 803.8h0.7v1.6h-0.7zM18.4 803.8h0.7v1.6h-0.7zM18.4 805.7h0.7v1.6h-0.7zM37.6 805.7h0.7v1.6h-0.7zM24.1 807.6h0.7v1.6h-0.7zM7.8 809.5h1.6v1.6h-1.6zM7.8 811.4h0.7v1.6h-0.7zM20.3 813.3h0.7v1.6h-0.7zM28.0 813.3h0.7v1.6h-0.7zM24.1 815.2h0.7v1.6h-0.7zM49.1 815.2h0.7v1.6h-0.7zM24.1 817.1h0.7v1.6h-0.7zM58.7 817.1h0.7v1.6h-0.7zM26.0 819.0h0.7v1.6h-0.7zM32.8 819.0h0.7v1.6h-0.7zM18.4 820.9h0.7v1.6h-0.7zM29.9 820.9h0.7v1.6h-0.7zM17.4 822.8h0.7v1.6h-0.7zM28.9 822.8h0.7v1.6h-0.7zM18.4 824.7h0.7v1.6h-0.7zM46.2 824.7h0.7v1.6h-0.7zM21.2 826.6h0.7v1.6h-0.7zM33.7 826.6h0.7v1.6h-0.7zM20.3 828.5h0.7v1.6h-0.7zM66.4 828.5h0.7v1.6h-0.7zM24.1 830.4h0.7v1.6h-0.7zM26.0 832.3h0.7v1.6h-0.7zM28.9 832.3h0.7v1.6h-0.7zM22.2 834.2h0.7v1.6h-0.7zM25.1 834.2h0.7v1.6h-0.7zM23.2 836.1h0.7v1.6h-0.7zM26.0 836.1h0.7v1.6h-0.7zM15.5 838.0h0.7v1.6h-0.7zM18.4 838.0h0.7v1.6h-0.7zM24.1 839.9h0.7v1.6h-0.7zM7.8 841.8h1.6v1.6h-1.6zM7.8 885.5h0.7v1.6h-0.7zM20.3 887.4h0.7v1.6h-0.7zM28.0 887.4h0.7v1.6h-0.7zM24.1 889.3h0.7v1.6h-0.7zM50.0 889.3h0.7v1.6h-0.7zM24.1 891.2h0.7v1.6h-0.7zM58.7 891.2h0.7v1.6h-0.7zM26.0 893.1h0.7v1.6h-0.7zM32.8 893.1h0.7v1.6h-0.7zM18.4 895.0h0.7v1.6h-0.7zM29.9 895.0h0.7v1.6h-0.7zM17.4 896.9h0.7v1.6h-0.7zM28.9 896.9h0.7v1.6h-0.7zM18.4 898.8h0.7v1.6h-0.7zM32.8 898.8h0.7v1.6h-0.7z"/><path fill="rgba(9,134,88,0.55)" d="M22.2 15.3h5.5v1.6h-5.5zM20.3 22.9h9.3v1.6h-9.3zM19.3 24.8h9.3v1.6h-9.3zM26.0 28.6h5.5v1.6h-5.5zM22.2 34.3h5.5v1.6h-5.5zM20.3 41.9h9.3v1.6h-9.3zM19.3 43.8h9.3v1.6h-9.3zM22.2 53.3h5.5v1.6h-5.5zM20.3 60.9h9.3v1.6h-9.3zM19.3 62.8h9.3v1.6h-9.3zM26.0 66.7h5.5v1.6h-5.5zM22.2 72.4h5.5v1.6h-5.5zM20.3 80.0h9.3v1.6h-9.3zM19.3 81.9h9.3v1.6h-9.3zM25.1 87.5h0.7v1.6h-0.7zM17.4 89.5h0.7v1.6h-0.7zM26.0 91.3h5.5v1.6h-5.5zM22.2 97.0h5.5v1.6h-5.5zM20.3 104.7h9.3v1.6h-9.3zM19.3 106.5h9.3v1.6h-9.3zM28.0 116.0h0.7v1.6h-0.7zM24.1 118.0h0.7v1.6h-0.7zM25.1 119.8h0.7v1.6h-0.7zM17.4 121.8h0.7v1.6h-0.7zM26.0 123.7h5.5v1.6h-5.5zM22.2 169.2h5.5v1.6h-5.5zM20.3 176.8h9.3v1.6h-9.3zM19.3 178.8h9.3v1.6h-9.3zM25.1 188.2h0.7v1.6h-0.7zM17.4 190.2h0.7v1.6h-0.7zM15.5 193.9h1.6v1.6h-1.6zM26.0 197.8h5.5v1.6h-5.5zM22.2 203.4h5.5v1.6h-5.5zM20.3 211.0h9.3v1.6h-9.3zM19.3 212.9h9.3v1.6h-9.3zM28.0 222.4h0.7v1.6h-0.7zM15.5 226.2h1.6v1.6h-1.6zM26.0 230.0h5.5v1.6h-5.5zM22.2 235.8h5.5v1.6h-5.5zM20.3 243.3h9.3v1.6h-9.3zM19.3 245.2h9.3v1.6h-9.3zM28.0 254.8h0.7v1.6h-0.7zM24.1 256.6h0.7v1.6h-0.7zM25.1 258.5h0.7v1.6h-0.7zM17.4 260.4h0.7v1.6h-0.7zM15.5 264.2h1.6v1.6h-1.6zM26.0 268.0h5.5v1.6h-5.5zM22.2 273.7h5.5v1.6h-5.5zM20.3 281.3h9.3v1.6h-9.3zM19.3 283.2h9.3v1.6h-9.3zM28.0 292.7h0.7v1.6h-0.7zM17.4 294.6h0.7v1.6h-0.7zM26.0 296.5h5.5v1.6h-5.5zM22.2 302.2h5.5v1.6h-5.5zM20.3 309.8h9.3v1.6h-9.3zM19.3 311.7h9.3v1.6h-9.3zM28.0 321.2h0.7v1.6h-0.7zM24.1 323.1h0.7v1.6h-0.7zM25.1 325.0h0.7v1.6h-0.7zM17.4 326.9h0.7v1.6h-0.7zM24.1 334.5h0.7v1.6h-0.7zM26.0 336.4h5.5v1.6h-5.5zM22.2 342.1h5.5v1.6h-5.5zM20.3 349.7h9.3v1.6h-9.3zM19.3 351.6h9.3v1.6h-9.3zM15.5 357.3h1.6v1.6h-1.6zM26.0 361.1h5.5v1.6h-5.5zM22.2 366.8h5.5v1.6h-5.5zM20.3 374.4h9.3v1.6h-9.3zM19.3 376.3h9.3v1.6h-9.3zM28.0 385.8h0.7v1.6h-0.7zM24.1 387.7h0.7v1.6h-0.7zM25.1 389.6h0.7v1.6h-0.7zM26.0 391.5h5.5v1.6h-5.5zM22.2 397.2h5.5v1.6h-5.5zM20.3 404.8h9.3v1.6h-9.3zM19.3 406.7h9.3v1.6h-9.3zM28.0 416.2h0.7v1.6h-0.7zM24.1 418.1h0.7v1.6h-0.7zM25.1 420.0h0.7v1.6h-0.7zM17.4 421.9h0.7v1.6h-0.7zM15.5 427.6h1.6v1.6h-1.6zM26.0 431.4h5.5v1.6h-5.5zM22.2 437.1h5.5v1.6h-5.5zM20.3 444.7h9.3v1.6h-9.3zM19.3 446.6h9.3v1.6h-9.3zM28.0 456.1h0.7v1.6h-0.7zM24.1 458.0h0.7v1.6h-0.7zM25.1 459.9h0.7v1.6h-0.7zM17.4 461.8h0.7v1.6h-0.7zM26.0 465.6h5.5v1.6h-5.5zM22.2 471.3h5.5v1.6h-5.5zM20.3 478.9h9.3v1.6h-9.3zM19.3 480.8h9.3v1.6h-9.3zM25.1 486.5h0.7v1.6h-0.7zM15.5 490.3h1.6v1.6h-1.6zM26.0 494.1h5.5v1.6h-5.5zM22.2 499.8h5.5v1.6h-5.5zM20.3 507.4h9.3v1.6h-9.3zM19.3 509.3h9.3v1.6h-9.3zM28.0 518.8h0.7v1.6h-0.7zM24.1 520.8h0.7v1.6h-0.7zM25.1 522.6h0.7v1.6h-0.7zM17.4 524.5h0.7v1.6h-0.7zM26.0 530.2h5.5v1.6h-5.5zM22.2 592.9h5.5v1.6h-5.5zM20.3 600.5h9.3v1.6h-9.3zM19.3 602.4h9.3v1.6h-9.3zM26.0 608.1h5.5v1.6h-5.5zM22.2 613.8h5.5v1.6h-5.5zM20.3 621.4h9.3v1.6h-9.3zM19.3 623.3h9.3v1.6h-9.3zM28.0 629.0h0.7v1.6h-0.7zM17.4 630.9h0.7v1.6h-0.7zM26.0 632.8h5.5v1.6h-5.5zM22.2 680.3h5.5v1.6h-5.5zM20.3 687.9h9.3v1.6h-9.3zM19.3 689.8h9.3v1.6h-9.3zM28.0 697.4h0.7v1.6h-0.7zM24.1 699.3h0.7v1.6h-0.7zM17.4 701.2h0.7v1.6h-0.7zM26.0 703.1h5.5v1.6h-5.5zM22.2 708.8h5.5v1.6h-5.5zM20.3 716.4h9.3v1.6h-9.3zM19.3 718.3h9.3v1.6h-9.3zM28.0 727.8h0.7v1.6h-0.7zM24.1 729.7h0.7v1.6h-0.7zM17.4 731.6h0.7v1.6h-0.7zM26.0 733.5h5.5v1.6h-5.5zM22.2 739.2h5.5v1.6h-5.5zM20.3 746.8h9.3v1.6h-9.3zM19.3 748.7h9.3v1.6h-9.3zM28.0 758.2h0.7v1.6h-0.7zM24.1 760.1h0.7v1.6h-0.7zM25.1 762.0h0.7v1.6h-0.7zM17.4 763.9h0.7v1.6h-0.7zM15.5 769.6h1.6v1.6h-1.6zM26.0 773.4h5.5v1.6h-5.5zM22.2 779.1h5.5v1.6h-5.5zM20.3 786.7h9.3v1.6h-9.3zM19.3 788.6h9.3v1.6h-9.3zM28.0 798.1h0.7v1.6h-0.7zM24.1 800.0h0.7v1.6h-0.7zM25.1 801.9h0.7v1.6h-0.7zM17.4 803.8h0.7v1.6h-0.7zM26.0 807.6h5.5v1.6h-5.5zM22.2 813.3h5.5v1.6h-5.5zM20.3 820.9h9.3v1.6h-9.3zM19.3 822.8h9.3v1.6h-9.3zM28.0 832.3h0.7v1.6h-0.7zM24.1 834.2h0.7v1.6h-0.7zM25.1 836.1h0.7v1.6h-0.7zM17.4 838.0h0.7v1.6h-0.7zM26.0 839.9h5.5v1.6h-5.5zM22.2 887.4h5.5v1.6h-5.5zM20.3 895.0h9.3v1.6h-9.3zM19.3 896.9h9.3v1.6h-9.3z"/><path fill="rgba(4,81,165,0.5)" d="M26.0 17.2h5.5v1.6h-5.5zM32.8 17.2h8.3v1.6h-8.3zM26.0 19.1h32.3v1.6h-32.3zM28.0 21.0h3.5v1.6h-3.5zM20.3 26.7h12.2v1.6h-12.2zM33.7 26.7h2.6v1.6h-2.6zM37.6 26.7h11.2v1.6h-11.2zM26.0 36.2h3.5v1.6h-3.5zM30.8 36.2h4.5v1.6h-4.5zM36.6 36.2h3.5v1.6h-3.5zM41.4 36.2h5.5v1.6h-5.5zM48.1 36.2h2.6v1.6h-2.6zM26.0 38.1h32.3v1.6h-32.3zM28.0 40.0h4.5v1.6h-4.5zM20.3 45.7h3.5v1.6h-3.5zM25.1 45.7h4.5v1.6h-4.5zM30.8 45.7h2.6v1.6h-2.6zM26.0 47.6h5.5v1.6h-5.5zM32.8 47.6h1.6v1.6h-1.6zM35.6 47.6h10.3v1.6h-10.3zM47.2 47.6h1.6v1.6h-1.6zM50.0 47.6h5.5v1.6h-5.5zM56.8 47.6h8.3v1.6h-8.3zM66.4 47.6h2.6v1.6h-2.6zM70.2 47.6h1.6v1.6h-1.6zM73.1 47.6h2.6v1.6h-2.6zM76.9 47.6h2.6v1.6h-2.6zM80.8 47.6h2.2v1.6h-2.2zM26.0 55.2h4.5v1.6h-4.5zM26.0 57.1h32.3v1.6h-32.3zM28.0 59.0h3.5v1.6h-3.5zM20.3 64.8h12.2v1.6h-12.2zM33.7 64.8h2.6v1.6h-2.6zM37.6 64.8h11.2v1.6h-11.2zM26.0 74.2h4.5v1.6h-4.5zM31.8 74.2h1.6v1.6h-1.6zM34.7 74.2h4.5v1.6h-4.5zM40.4 74.2h0.7v1.6h-0.7zM42.4 74.2h3.5v1.6h-3.5zM26.0 76.2h32.3v1.6h-32.3zM28.0 78.0h4.5v1.6h-4.5zM20.3 83.8h4.5v1.6h-4.5zM26.0 83.8h7.4v1.6h-7.4zM26.0 85.7h7.4v1.6h-7.4zM34.7 85.7h2.6v1.6h-2.6zM38.5 85.7h2.6v1.6h-2.6zM42.4 85.7h3.5v1.6h-3.5zM47.2 85.7h1.6v1.6h-1.6zM50.0 85.7h4.5v1.6h-4.5zM55.8 85.7h0.7v1.6h-0.7zM57.7 85.7h2.6v1.6h-2.6zM61.6 85.7h2.6v1.6h-2.6zM65.4 85.7h10.3v1.6h-10.3zM76.9 85.7h6.1v1.6h-6.1zM26.0 99.0h8.3v1.6h-8.3zM26.0 100.8h32.3v1.6h-32.3zM28.0 102.8h3.5v1.6h-3.5zM20.3 108.5h3.5v1.6h-3.5zM25.1 108.5h4.5v1.6h-4.5zM30.8 108.5h8.3v1.6h-8.3zM40.4 108.5h3.5v1.6h-3.5zM23.2 110.3h11.2v1.6h-11.2zM35.6 110.3h1.6v1.6h-1.6zM38.5 110.3h3.5v1.6h-3.5zM22.2 112.2h5.5v1.6h-5.5zM28.9 112.2h6.4v1.6h-6.4zM36.6 112.2h3.5v1.6h-3.5zM41.4 112.2h4.5v1.6h-4.5zM26.0 114.2h5.5v1.6h-5.5zM32.8 114.2h6.4v1.6h-6.4zM40.4 114.2h1.6v1.6h-1.6zM43.3 114.2h2.6v1.6h-2.6zM47.2 114.2h4.5v1.6h-4.5zM52.9 114.2h5.5v1.6h-5.5zM59.6 114.2h3.5v1.6h-3.5zM64.4 114.2h3.5v1.6h-3.5zM69.2 114.2h4.5v1.6h-4.5zM75.0 114.2h4.5v1.6h-4.5zM80.8 114.2h2.2v1.6h-2.2zM26.0 171.2h2.6v1.6h-2.6zM29.9 171.2h7.4v1.6h-7.4zM38.5 171.2h1.6v1.6h-1.6zM41.4 171.2h1.6v1.6h-1.6zM44.3 171.2h2.6v1.6h-2.6zM26.0 173.1h32.3v1.6h-32.3zM28.0 174.9h2.6v1.6h-2.6zM31.8 174.9h1.6v1.6h-1.6zM20.3 180.7h6.4v1.6h-6.4zM28.0 180.7h2.6v1.6h-2.6zM23.2 182.5h4.5v1.6h-4.5zM28.9 182.5h3.5v1.6h-3.5zM22.2 184.4h4.5v1.6h-4.5zM28.0 184.4h6.4v1.6h-6.4zM35.6 184.4h4.5v1.6h-4.5zM41.4 184.4h3.5v1.6h-3.5zM46.2 184.4h4.5v1.6h-4.5zM52.0 184.4h4.5v1.6h-4.5zM26.0 186.3h2.6v1.6h-2.6zM29.9 186.3h1.6v1.6h-1.6zM32.8 186.3h1.6v1.6h-1.6zM35.6 186.3h7.4v1.6h-7.4zM44.3 186.3h2.6v1.6h-2.6zM48.1 186.3h5.5v1.6h-5.5zM54.8 186.3h2.6v1.6h-2.6zM58.7 186.3h2.6v1.6h-2.6zM62.5 186.3h1.6v1.6h-1.6zM65.4 186.3h2.6v1.6h-2.6zM69.2 186.3h2.6v1.6h-2.6zM73.1 186.3h1.6v1.6h-1.6zM76.0 186.3h4.5v1.6h-4.5zM81.7 186.3h1.3v1.6h-1.3zM26.0 205.3h9.3v1.6h-9.3zM36.6 205.3h7.4v1.6h-7.4zM26.0 207.2h32.3v1.6h-32.3zM28.0 209.2h5.5v1.6h-5.5zM20.3 214.8h8.3v1.6h-8.3zM23.2 216.8h7.4v1.6h-7.4zM31.8 216.8h4.5v1.6h-4.5zM22.2 218.7h3.5v1.6h-3.5zM27.0 218.7h8.3v1.6h-8.3zM36.6 218.7h2.6v1.6h-2.6zM40.4 218.7h1.6v1.6h-1.6zM43.3 218.7h7.4v1.6h-7.4zM26.0 220.5h4.5v1.6h-4.5zM31.8 220.5h2.6v1.6h-2.6zM35.6 220.5h3.5v1.6h-3.5zM40.4 220.5h5.5v1.6h-5.5zM47.2 220.5h4.5v1.6h-4.5zM52.9 220.5h11.2v1.6h-11.2zM65.4 220.5h3.5v1.6h-3.5zM70.2 220.5h6.4v1.6h-6.4zM77.9 220.5h2.6v1.6h-2.6zM81.7 220.5h1.3v1.6h-1.3zM26.0 237.7h4.5v1.6h-4.5zM31.8 237.7h7.4v1.6h-7.4zM40.4 237.7h1.6v1.6h-1.6zM26.0 239.5h32.3v1.6h-32.3zM28.0 241.4h3.5v1.6h-3.5zM20.3 247.2h3.5v1.6h-3.5zM25.1 247.2h1.6v1.6h-1.6zM28.0 247.2h3.5v1.6h-3.5zM32.8 247.2h2.6v1.6h-2.6zM36.6 247.2h1.6v1.6h-1.6zM39.5 247.2h1.6v1.6h-1.6zM23.2 249.0h2.6v1.6h-2.6zM27.0 249.0h1.6v1.6h-1.6zM29.9 249.0h3.5v1.6h-3.5zM22.2 250.9h3.5v1.6h-3.5zM27.0 250.9h4.5v1.6h-4.5zM32.8 250.9h6.4v1.6h-6.4zM40.4 250.9h2.6v1.6h-2.6zM44.3 250.9h10.3v1.6h-10.3zM55.8 250.9h2.6v1.6h-2.6zM26.0 252.8h5.5v1.6h-5.5zM32.8 252.8h8.3v1.6h-8.3zM42.4 252.8h11.2v1.6h-11.2zM54.8 252.8h4.5v1.6h-4.5zM60.6 252.8h1.6v1.6h-1.6zM63.5 252.8h2.6v1.6h-2.6zM67.3 252.8h2.6v1.6h-2.6zM71.2 252.8h3.5v1.6h-3.5zM76.0 252.8h2.6v1.6h-2.6zM79.8 252.8h2.6v1.6h-2.6zM26.0 275.6h5.5v1.6h-5.5zM32.8 275.6h1.6v1.6h-1.6zM35.6 275.6h2.6v1.6h-2.6zM39.5 275.6h2.6v1.6h-2.6zM26.0 277.5h32.3v1.6h-32.3zM28.0 279.4h3.5v1.6h-3.5zM20.3 285.1h7.4v1.6h-7.4zM23.2 287.0h5.5v1.6h-5.5zM29.9 287.0h5.5v1.6h-5.5zM36.6 287.0h4.5v1.6h-4.5zM42.4 287.0h2.6v1.6h-2.6zM46.2 287.0h7.4v1.6h-7.4zM22.2 288.9h5.5v1.6h-5.5zM28.9 288.9h5.5v1.6h-5.5zM35.6 288.9h1.6v1.6h-1.6zM38.5 288.9h8.3v1.6h-8.3zM48.1 288.9h2.6v1.6h-2.6zM52.0 288.9h1.6v1.6h-1.6zM54.8 288.9h1.6v1.6h-1.6zM57.7 288.9h1.6v1.6h-1.6zM60.6 288.9h2.6v1.6h-2.6zM64.4 288.9h1.6v1.6h-1.6zM26.0 290.8h8.3v1.6h-8.3zM35.6 290.8h10.3v1.6h-10.3zM47.2 290.8h4.5v1.6h-4.5zM52.9 290.8h1.6v1.6h-1.6zM55.8 290.8h1.6v1.6h-1.6zM58.7 290.8h8.3v1.6h-8.3zM68.3 290.8h2.6v1.6h-2.6zM72.1 290.8h4.5v1.6h-4.5zM77.9 290.8h2.6v1.6h-2.6zM81.7 290.8h1.3v1.6h-1.3zM26.0 304.1h3.5v1.6h-3.5zM30.8 304.1h2.6v1.6h-2.6zM34.7 304.1h2.6v1.6h-2.6zM38.5 304.1h2.6v1.6h-2.6zM42.4 304.1h2.6v1.6h-2.6zM26.0 306.0h32.3v1.6h-32.3zM28.0 307.9h3.5v1.6h-3.5zM20.3 313.6h8.3v1.6h-8.3zM29.9 313.6h3.5v1.6h-3.5zM23.2 315.5h5.5v1.6h-5.5zM29.9 315.5h11.2v1.6h-11.2zM42.4 315.5h1.6v1.6h-1.6zM45.2 315.5h1.6v1.6h-1.6zM22.2 317.4h5.5v1.6h-5.5zM28.9 317.4h10.3v1.6h-10.3zM40.4 317.4h2.6v1.6h-2.6zM26.0 319.3h4.5v1.6h-4.5zM31.8 319.3h6.4v1.6h-6.4zM39.5 319.3h4.5v1.6h-4.5zM45.2 319.3h7.4v1.6h-7.4zM53.9 319.3h3.5v1.6h-3.5zM58.7 319.3h1.6v1.6h-1.6zM61.6 319.3h3.5v1.6h-3.5zM66.4 319.3h1.6v1.6h-1.6zM69.2 319.3h3.5v1.6h-3.5zM74.0 319.3h3.5v1.6h-3.5zM78.8 319.3h4.2v1.6h-4.2zM20.3 328.8h6.4v1.6h-6.4zM28.0 328.8h1.6v1.6h-1.6zM30.8 328.8h1.6v1.6h-1.6zM33.7 328.8h1.6v1.6h-1.6zM36.6 328.8h1.6v1.6h-1.6zM39.5 328.8h2.6v1.6h-2.6zM23.2 330.7h4.5v1.6h-4.5zM28.9 330.7h2.6v1.6h-2.6zM32.8 330.7h1.6v1.6h-1.6zM22.2 332.6h5.5v1.6h-5.5zM28.9 332.6h3.5v1.6h-3.5zM33.7 332.6h3.5v1.6h-3.5zM26.0 344.0h4.5v1.6h-4.5zM26.0 345.9h32.3v1.6h-32.3zM28.0 347.8h4.5v1.6h-4.5zM20.3 353.5h5.5v1.6h-5.5zM27.0 353.5h1.6v1.6h-1.6zM29.9 353.5h4.5v1.6h-4.5zM26.0 368.7h3.5v1.6h-3.5zM30.8 368.7h7.4v1.6h-7.4zM39.5 368.7h1.6v1.6h-1.6zM42.4 368.7h3.5v1.6h-3.5zM26.0 370.6h32.3v1.6h-32.3zM28.0 372.5h3.5v1.6h-3.5zM20.3 378.2h2.6v1.6h-2.6zM24.1 378.2h1.6v1.6h-1.6zM27.0 378.2h2.6v1.6h-2.6zM30.8 378.2h2.6v1.6h-2.6zM34.7 378.2h8.3v1.6h-8.3zM23.2 380.1h9.3v1.6h-9.3zM22.2 382.0h9.3v1.6h-9.3zM32.8 382.0h1.6v1.6h-1.6zM35.6 382.0h3.5v1.6h-3.5zM40.4 382.0h2.6v1.6h-2.6zM44.3 382.0h7.4v1.6h-7.4zM26.0 383.9h5.5v1.6h-5.5zM32.8 383.9h2.6v1.6h-2.6zM36.6 383.9h1.6v1.6h-1.6zM39.5 383.9h6.4v1.6h-6.4zM47.2 383.9h1.6v1.6h-1.6zM50.0 383.9h1.6v1.6h-1.6zM52.9 383.9h1.6v1.6h-1.6zM55.8 383.9h2.6v1.6h-2.6zM59.6 383.9h4.5v1.6h-4.5zM65.4 383.9h6.4v1.6h-6.4zM73.1 383.9h1.6v1.6h-1.6zM76.0 383.9h2.6v1.6h-2.6zM79.8 383.9h2.6v1.6h-2.6zM26.0 399.1h5.5v1.6h-5.5zM32.8 399.1h2.6v1.6h-2.6zM36.6 399.1h2.6v1.6h-2.6zM26.0 401.0h32.3v1.6h-32.3zM28.0 402.9h4.5v1.6h-4.5zM20.3 408.6h8.3v1.6h-8.3zM29.9 408.6h6.4v1.6h-6.4zM37.6 408.6h3.5v1.6h-3.5zM42.4 408.6h3.5v1.6h-3.5zM23.2 410.5h2.6v1.6h-2.6zM27.0 410.5h1.6v1.6h-1.6zM29.9 410.5h6.4v1.6h-6.4zM37.6 410.5h2.6v1.6h-2.6zM41.4 410.5h3.5v1.6h-3.5zM22.2 412.4h11.2v1.6h-11.2zM34.7 412.4h2.6v1.6h-2.6zM38.5 412.4h3.5v1.6h-3.5zM43.3 412.4h6.4v1.6h-6.4zM51.0 412.4h7.4v1.6h-7.4zM26.0 414.3h7.4v1.6h-7.4zM34.7 414.3h2.6v1.6h-2.6zM38.5 414.3h11.2v1.6h-11.2zM51.0 414.3h1.6v1.6h-1.6zM53.9 414.3h7.4v1.6h-7.4zM62.5 414.3h1.6v1.6h-1.6zM65.4 414.3h8.3v1.6h-8.3zM75.0 414.3h2.6v1.6h-2.6zM78.8 414.3h1.6v1.6h-1.6zM81.7 414.3h1.3v1.6h-1.3zM20.3 423.8h2.6v1.6h-2.6zM24.1 423.8h2.6v1.6h-2.6zM28.0 423.8h1.6v1.6h-1.6zM30.8 423.8h2.6v1.6h-2.6zM34.7 423.8h1.6v1.6h-1.6zM37.6 423.8h2.6v1.6h-2.6zM26.0 439.0h6.4v1.6h-6.4zM33.7 439.0h4.5v1.6h-4.5zM26.0 440.9h32.3v1.6h-32.3zM28.0 442.8h3.5v1.6h-3.5zM20.3 448.5h2.6v1.6h-2.6zM24.1 448.5h1.6v1.6h-1.6zM27.0 448.5h1.6v1.6h-1.6zM29.9 448.5h5.5v1.6h-5.5zM36.6 448.5h1.6v1.6h-1.6zM39.5 448.5h6.4v1.6h-6.4zM47.2 448.5h1.6v1.6h-1.6zM23.2 450.4h3.5v1.6h-3.5zM28.0 450.4h4.5v1.6h-4.5zM33.7 450.4h6.4v1.6h-6.4zM22.2 452.3h2.6v1.6h-2.6zM26.0 452.3h8.3v1.6h-8.3zM35.6 452.3h1.6v1.6h-1.6zM38.5 452.3h1.6v1.6h-1.6zM41.4 452.3h1.6v1.6h-1.6zM44.3 452.3h5.5v1.6h-5.5zM26.0 454.2h11.2v1.6h-11.2zM38.5 454.2h6.4v1.6h-6.4zM46.2 454.2h1.6v1.6h-1.6zM49.1 454.2h1.6v1.6h-1.6zM52.0 454.2h2.6v1.6h-2.6zM55.8 454.2h1.6v1.6h-1.6zM58.7 454.2h1.6v1.6h-1.6zM61.6 454.2h2.6v1.6h-2.6zM65.4 454.2h8.3v1.6h-8.3zM75.0 454.2h2.6v1.6h-2.6zM78.8 454.2h2.6v1.6h-2.6zM82.7 454.2h0.3v1.6h-0.3zM20.3 463.7h7.4v1.6h-7.4zM28.9 463.7h3.5v1.6h-3.5zM26.0 473.2h3.5v1.6h-3.5zM30.8 473.2h1.6v1.6h-1.6zM33.7 473.2h2.6v1.6h-2.6zM26.0 475.1h32.3v1.6h-32.3zM28.0 477.0h4.5v1.6h-4.5zM20.3 482.7h2.6v1.6h-2.6zM24.1 482.7h1.6v1.6h-1.6zM27.0 482.7h11.2v1.6h-11.2zM26.0 484.6h12.2v1.6h-12.2zM39.5 484.6h1.6v1.6h-1.6zM42.4 484.6h5.5v1.6h-5.5zM49.1 484.6h6.4v1.6h-6.4zM56.8 484.6h4.5v1.6h-4.5zM62.5 484.6h3.5v1.6h-3.5zM67.3 484.6h3.5v1.6h-3.5zM72.1 484.6h4.5v1.6h-4.5zM77.9 484.6h1.6v1.6h-1.6zM80.8 484.6h2.2v1.6h-2.2zM26.0 501.7h5.5v1.6h-5.5zM26.0 503.6h32.3v1.6h-32.3zM28.0 505.5h5.5v1.6h-5.5zM20.3 511.2h5.5v1.6h-5.5zM27.0 511.2h8.3v1.6h-8.3zM36.6 511.2h2.6v1.6h-2.6zM40.4 511.2h3.5v1.6h-3.5zM23.2 513.1h5.5v1.6h-5.5zM29.9 513.1h4.5v1.6h-4.5zM35.6 513.1h1.6v1.6h-1.6zM38.5 513.1h1.6v1.6h-1.6zM41.4 513.1h3.5v1.6h-3.5zM22.2 515.0h4.5v1.6h-4.5zM28.0 515.0h4.5v1.6h-4.5zM33.7 515.0h1.6v1.6h-1.6zM36.6 515.0h1.6v1.6h-1.6zM39.5 515.0h5.5v1.6h-5.5zM26.0 516.9h3.5v1.6h-3.5zM30.8 516.9h1.6v1.6h-1.6zM33.7 516.9h2.6v1.6h-2.6zM37.6 516.9h1.6v1.6h-1.6zM40.4 516.9h2.6v1.6h-2.6zM44.3 516.9h2.6v1.6h-2.6zM48.1 516.9h4.5v1.6h-4.5zM53.9 516.9h1.6v1.6h-1.6zM56.8 516.9h3.5v1.6h-3.5zM61.6 516.9h2.6v1.6h-2.6zM65.4 516.9h2.6v1.6h-2.6zM69.2 516.9h4.5v1.6h-4.5zM75.0 516.9h2.6v1.6h-2.6zM78.8 516.9h3.5v1.6h-3.5zM20.3 526.4h4.5v1.6h-4.5zM26.0 526.4h6.4v1.6h-6.4zM33.7 526.4h1.6v1.6h-1.6zM36.6 526.4h1.6v1.6h-1.6zM23.2 528.3h9.3v1.6h-9.3zM26.0 594.8h2.6v1.6h-2.6zM29.9 594.8h5.5v1.6h-5.5zM26.0 596.8h32.3v1.6h-32.3zM28.0 598.6h3.5v1.6h-3.5zM20.3 604.3h3.5v1.6h-3.5zM25.1 604.3h1.6v1.6h-1.6zM26.0 606.2h3.5v1.6h-3.5zM30.8 606.2h2.6v1.6h-2.6zM34.7 606.2h2.6v1.6h-2.6zM38.5 606.2h1.6v1.6h-1.6zM41.4 606.2h1.6v1.6h-1.6zM44.3 606.2h1.6v1.6h-1.6zM47.2 606.2h1.6v1.6h-1.6zM50.0 606.2h1.6v1.6h-1.6zM52.9 606.2h6.4v1.6h-6.4zM60.6 606.2h1.6v1.6h-1.6zM63.5 606.2h2.6v1.6h-2.6zM67.3 606.2h1.6v1.6h-1.6zM70.2 606.2h2.6v1.6h-2.6zM74.0 606.2h1.6v1.6h-1.6zM76.9 606.2h3.5v1.6h-3.5zM81.7 606.2h1.3v1.6h-1.3zM26.0 615.8h4.5v1.6h-4.5zM31.8 615.8h4.5v1.6h-4.5zM37.6 615.8h3.5v1.6h-3.5zM26.0 617.6h32.3v1.6h-32.3zM28.0 619.5h3.5v1.6h-3.5zM20.3 625.2h8.3v1.6h-8.3zM26.0 627.1h9.3v1.6h-9.3zM36.6 627.1h4.5v1.6h-4.5zM42.4 627.1h3.5v1.6h-3.5zM47.2 627.1h7.4v1.6h-7.4zM55.8 627.1h2.6v1.6h-2.6zM59.6 627.1h8.3v1.6h-8.3zM69.2 627.1h2.6v1.6h-2.6zM73.1 627.1h8.3v1.6h-8.3zM82.7 627.1h0.3v1.6h-0.3zM26.0 682.2h9.3v1.6h-9.3zM36.6 682.2h8.3v1.6h-8.3zM46.2 682.2h1.6v1.6h-1.6zM26.0 684.1h32.3v1.6h-32.3zM28.0 686.0h3.5v1.6h-3.5zM20.3 691.8h7.4v1.6h-7.4zM28.9 691.8h7.4v1.6h-7.4zM22.2 693.6h4.5v1.6h-4.5zM28.0 693.6h6.4v1.6h-6.4zM35.6 693.6h1.6v1.6h-1.6zM38.5 693.6h1.6v1.6h-1.6zM41.4 693.6h4.5v1.6h-4.5zM47.2 693.6h2.6v1.6h-2.6zM51.0 693.6h1.6v1.6h-1.6zM53.9 693.6h3.5v1.6h-3.5zM58.7 693.6h4.5v1.6h-4.5zM26.0 695.5h6.4v1.6h-6.4zM33.7 695.5h1.6v1.6h-1.6zM36.6 695.5h6.4v1.6h-6.4zM44.3 695.5h3.5v1.6h-3.5zM49.1 695.5h1.6v1.6h-1.6zM52.0 695.5h7.4v1.6h-7.4zM60.6 695.5h1.6v1.6h-1.6zM63.5 695.5h1.6v1.6h-1.6zM66.4 695.5h5.5v1.6h-5.5zM73.1 695.5h3.5v1.6h-3.5zM77.9 695.5h2.6v1.6h-2.6zM81.7 695.5h1.3v1.6h-1.3zM26.0 710.8h4.5v1.6h-4.5zM31.8 710.8h2.6v1.6h-2.6zM35.6 710.8h3.5v1.6h-3.5zM40.4 710.8h7.4v1.6h-7.4zM26.0 712.6h32.3v1.6h-32.3zM28.0 714.5h5.5v1.6h-5.5zM20.3 720.2h3.5v1.6h-3.5zM25.1 720.2h3.5v1.6h-3.5zM29.9 720.2h6.4v1.6h-6.4zM37.6 720.2h1.6v1.6h-1.6zM40.4 720.2h1.6v1.6h-1.6zM43.3 720.2h2.6v1.6h-2.6zM23.2 722.1h2.6v1.6h-2.6zM27.0 722.1h6.4v1.6h-6.4zM34.7 722.1h3.5v1.6h-3.5zM39.5 722.1h2.6v1.6h-2.6zM22.2 724.0h8.3v1.6h-8.3zM31.8 724.0h4.5v1.6h-4.5zM37.6 724.0h2.6v1.6h-2.6zM41.4 724.0h1.6v1.6h-1.6zM44.3 724.0h5.5v1.6h-5.5zM51.0 724.0h3.5v1.6h-3.5zM55.8 724.0h5.5v1.6h-5.5zM62.5 724.0h3.5v1.6h-3.5zM26.0 725.9h2.6v1.6h-2.6zM29.9 725.9h1.6v1.6h-1.6zM32.8 725.9h4.5v1.6h-4.5zM38.5 725.9h4.5v1.6h-4.5zM44.3 725.9h11.2v1.6h-11.2zM56.8 725.9h3.5v1.6h-3.5zM61.6 725.9h4.5v1.6h-4.5zM67.3 725.9h1.6v1.6h-1.6zM70.2 725.9h4.5v1.6h-4.5zM76.0 725.9h4.5v1.6h-4.5zM81.7 725.9h1.3v1.6h-1.3zM26.0 741.1h9.3v1.6h-9.3zM36.6 741.1h5.5v1.6h-5.5zM26.0 743.0h32.3v1.6h-32.3zM28.0 744.9h4.5v1.6h-4.5zM20.3 750.6h12.2v1.6h-12.2zM33.7 750.6h9.3v1.6h-9.3zM23.2 752.5h2.6v1.6h-2.6zM27.0 752.5h5.5v1.6h-5.5zM33.7 752.5h2.6v1.6h-2.6zM22.2 754.4h2.6v1.6h-2.6zM26.0 754.4h1.6v1.6h-1.6zM28.9 754.4h2.6v1.6h-2.6zM32.8 754.4h1.6v1.6h-1.6zM35.6 754.4h2.6v1.6h-2.6zM39.5 754.4h3.5v1.6h-3.5zM26.0 756.3h2.6v1.6h-2.6zM29.9 756.3h5.5v1.6h-5.5zM36.6 756.3h2.6v1.6h-2.6zM40.4 756.3h10.3v1.6h-10.3zM52.0 756.3h3.5v1.6h-3.5zM56.8 756.3h1.6v1.6h-1.6zM59.6 756.3h6.4v1.6h-6.4zM67.3 756.3h3.5v1.6h-3.5zM72.1 756.3h1.6v1.6h-1.6zM75.0 756.3h1.6v1.6h-1.6zM77.9 756.3h4.5v1.6h-4.5zM20.3 765.8h4.5v1.6h-4.5zM26.0 765.8h4.5v1.6h-4.5zM31.8 765.8h1.6v1.6h-1.6zM34.7 765.8h4.5v1.6h-4.5zM26.0 781.0h7.4v1.6h-7.4zM34.7 781.0h3.5v1.6h-3.5zM39.5 781.0h4.5v1.6h-4.5zM26.0 782.9h32.3v1.6h-32.3zM28.0 784.8h3.5v1.6h-3.5zM20.3 790.5h2.6v1.6h-2.6zM24.1 790.5h8.3v1.6h-8.3zM33.7 790.5h4.5v1.6h-4.5zM39.5 790.5h2.6v1.6h-2.6zM23.2 792.4h2.6v1.6h-2.6zM27.0 792.4h7.4v1.6h-7.4zM35.6 792.4h8.3v1.6h-8.3zM45.2 792.4h4.5v1.6h-4.5zM22.2 794.3h9.3v1.6h-9.3zM32.8 794.3h4.5v1.6h-4.5zM38.5 794.3h2.6v1.6h-2.6zM42.4 794.3h2.6v1.6h-2.6zM26.0 796.2h9.3v1.6h-9.3zM36.6 796.2h7.4v1.6h-7.4zM45.2 796.2h2.6v1.6h-2.6zM49.1 796.2h7.4v1.6h-7.4zM57.7 796.2h3.5v1.6h-3.5zM62.5 796.2h6.4v1.6h-6.4zM70.2 796.2h4.5v1.6h-4.5zM76.0 796.2h7.0v1.6h-7.0zM20.3 805.7h2.6v1.6h-2.6zM24.1 805.7h4.5v1.6h-4.5zM29.9 805.7h7.4v1.6h-7.4zM26.0 815.2h9.3v1.6h-9.3zM36.6 815.2h1.6v1.6h-1.6zM39.5 815.2h3.5v1.6h-3.5zM44.3 815.2h4.5v1.6h-4.5zM26.0 817.1h32.3v1.6h-32.3zM28.0 819.0h4.5v1.6h-4.5zM20.3 824.7h5.5v1.6h-5.5zM27.0 824.7h11.2v1.6h-11.2zM39.5 824.7h3.5v1.6h-3.5zM44.3 824.7h1.6v1.6h-1.6zM23.2 826.6h2.6v1.6h-2.6zM27.0 826.6h3.5v1.6h-3.5zM31.8 826.6h1.6v1.6h-1.6zM22.2 828.5h2.6v1.6h-2.6zM26.0 828.5h2.6v1.6h-2.6zM29.9 828.5h1.6v1.6h-1.6zM32.8 828.5h8.3v1.6h-8.3zM42.4 828.5h8.3v1.6h-8.3zM52.0 828.5h10.3v1.6h-10.3zM63.5 828.5h2.6v1.6h-2.6zM26.0 830.4h4.5v1.6h-4.5zM31.8 830.4h6.4v1.6h-6.4zM39.5 830.4h2.6v1.6h-2.6zM43.3 830.4h7.4v1.6h-7.4zM52.0 830.4h1.6v1.6h-1.6zM54.8 830.4h6.4v1.6h-6.4zM62.5 830.4h6.4v1.6h-6.4zM70.2 830.4h7.4v1.6h-7.4zM78.8 830.4h3.5v1.6h-3.5zM26.0 889.3h3.5v1.6h-3.5zM30.8 889.3h8.3v1.6h-8.3zM40.4 889.3h1.6v1.6h-1.6zM43.3 889.3h2.6v1.6h-2.6zM47.2 889.3h2.6v1.6h-2.6zM26.0 891.2h32.3v1.6h-32.3zM28.0 893.1h4.5v1.6h-4.5zM20.3 898.8h2.6v1.6h-2.6zM24.1 898.8h2.6v1.6h-2.6zM28.0 898.8h4.5v1.6h-4.5z"/><path fill="rgba(160,30,50,0.42)" d="M7.8 127.5h0.7v1.6h-0.7zM11.6 129.3h9.3v1.6h-9.3zM21.2 129.3h0.7v1.6h-0.7zM23.2 129.3h0.7v1.6h-0.7zM15.5 131.2h2.6v1.6h-2.6zM18.4 131.2h0.7v1.6h-0.7zM20.3 131.2h0.7v1.6h-0.7zM19.3 133.2h8.3v1.6h-8.3zM28.0 133.2h0.7v1.6h-0.7zM29.9 133.2h5.5v1.6h-5.5zM35.6 133.2h0.7v1.6h-0.7zM19.3 135.1h12.2v1.6h-12.2zM31.8 135.1h0.7v1.6h-0.7zM33.7 135.1h5.5v1.6h-5.5zM40.4 135.1h1.6v1.6h-1.6zM43.3 135.1h6.4v1.6h-6.4zM50.0 135.1h0.7v1.6h-0.7zM19.3 136.9h12.2v1.6h-12.2zM31.8 136.9h0.7v1.6h-0.7zM33.7 136.9h32.3v1.6h-32.3zM66.4 136.9h0.7v1.6h-0.7zM19.3 138.8h14.1v1.6h-14.1zM33.7 138.8h0.7v1.6h-0.7zM35.6 138.8h5.5v1.6h-5.5zM41.4 138.8h0.7v1.6h-0.7zM19.3 140.8h6.4v1.6h-6.4zM26.0 140.8h0.7v1.6h-0.7zM28.0 140.8h9.3v1.6h-9.3zM37.6 140.8h0.7v1.6h-0.7zM19.3 142.7h5.5v1.6h-5.5zM25.1 142.7h0.7v1.6h-0.7zM27.0 142.7h9.3v1.6h-9.3zM36.6 142.7h0.7v1.6h-0.7zM19.3 144.6h6.4v1.6h-6.4zM26.0 144.6h0.7v1.6h-0.7zM28.0 144.6h9.3v1.6h-9.3zM38.5 144.6h7.4v1.6h-7.4zM46.2 144.6h0.7v1.6h-0.7zM19.3 146.4h9.3v1.6h-9.3zM28.9 146.4h0.7v1.6h-0.7zM30.8 146.4h3.5v1.6h-3.5zM35.6 146.4h2.6v1.6h-2.6zM39.5 146.4h1.6v1.6h-1.6zM41.4 146.4h0.7v1.6h-0.7zM19.3 148.3h8.3v1.6h-8.3zM28.0 148.3h0.7v1.6h-0.7zM29.9 148.3h4.5v1.6h-4.5zM35.6 148.3h1.6v1.6h-1.6zM38.5 148.3h3.5v1.6h-3.5zM43.3 148.3h1.6v1.6h-1.6zM46.2 148.3h1.6v1.6h-1.6zM49.1 148.3h1.6v1.6h-1.6zM52.0 148.3h5.5v1.6h-5.5zM58.7 148.3h4.5v1.6h-4.5zM63.5 148.3h0.7v1.6h-0.7zM19.3 150.2h12.2v1.6h-12.2zM31.8 150.2h0.7v1.6h-0.7zM33.7 150.2h7.4v1.6h-7.4zM42.4 150.2h1.6v1.6h-1.6zM45.2 150.2h2.6v1.6h-2.6zM49.1 150.2h2.6v1.6h-2.6zM52.9 150.2h7.4v1.6h-7.4zM61.6 150.2h3.5v1.6h-3.5zM66.4 150.2h2.6v1.6h-2.6zM70.2 150.2h4.5v1.6h-4.5zM76.0 150.2h6.4v1.6h-6.4zM19.3 152.2h14.1v1.6h-14.1zM33.7 152.2h0.7v1.6h-0.7zM35.6 152.2h0.7v1.6h-0.7zM36.6 152.2h0.7v1.6h-0.7zM19.3 154.1h10.3v1.6h-10.3zM29.9 154.1h0.7v1.6h-0.7zM31.8 154.1h0.7v1.6h-0.7zM32.8 154.1h0.7v1.6h-0.7zM19.3 155.9h11.2v1.6h-11.2zM30.8 155.9h0.7v1.6h-0.7zM32.8 155.9h0.7v1.6h-0.7zM33.7 155.9h0.7v1.6h-0.7zM19.3 157.8h3.5v1.6h-3.5zM23.2 157.8h0.7v1.6h-0.7zM25.1 157.8h0.7v1.6h-0.7zM26.0 157.8h0.7v1.6h-0.7zM19.3 159.8h12.2v1.6h-12.2zM31.8 159.8h0.7v1.6h-0.7zM33.7 159.8h5.5v1.6h-5.5zM15.5 161.7h0.7v1.6h-0.7zM11.6 163.6h0.7v1.6h-0.7zM7.8 165.4h1.6v1.6h-1.6zM7.8 534.0h0.7v1.6h-0.7zM11.6 535.9h9.3v1.6h-9.3zM21.2 535.9h0.7v1.6h-0.7zM23.2 535.9h0.7v1.6h-0.7zM15.5 537.8h2.6v1.6h-2.6zM18.4 537.8h0.7v1.6h-0.7zM20.3 537.8h0.7v1.6h-0.7zM19.3 539.8h8.3v1.6h-8.3zM28.0 539.8h0.7v1.6h-0.7zM29.9 539.8h5.5v1.6h-5.5zM35.6 539.8h0.7v1.6h-0.7zM19.3 541.6h12.2v1.6h-12.2zM31.8 541.6h0.7v1.6h-0.7zM33.7 541.6h4.5v1.6h-4.5zM39.5 541.6h6.4v1.6h-6.4zM46.2 541.6h0.7v1.6h-0.7zM19.3 543.5h12.2v1.6h-12.2zM31.8 543.5h0.7v1.6h-0.7zM33.7 543.5h32.3v1.6h-32.3zM66.4 543.5h0.7v1.6h-0.7zM19.3 545.4h14.1v1.6h-14.1zM33.7 545.4h0.7v1.6h-0.7zM35.6 545.4h5.5v1.6h-5.5zM41.4 545.4h0.7v1.6h-0.7zM19.3 547.3h6.4v1.6h-6.4zM26.0 547.3h0.7v1.6h-0.7zM28.0 547.3h9.3v1.6h-9.3zM37.6 547.3h0.7v1.6h-0.7zM19.3 549.2h5.5v1.6h-5.5zM25.1 549.2h0.7v1.6h-0.7zM27.0 549.2h9.3v1.6h-9.3zM36.6 549.2h0.7v1.6h-0.7zM19.3 551.1h6.4v1.6h-6.4zM26.0 551.1h0.7v1.6h-0.7zM28.0 551.1h2.6v1.6h-2.6zM31.8 551.1h1.6v1.6h-1.6zM34.7 551.1h1.6v1.6h-1.6zM37.6 551.1h2.6v1.6h-2.6zM40.4 551.1h0.7v1.6h-0.7zM19.3 553.0h12.2v1.6h-12.2zM31.8 553.0h0.7v1.6h-0.7zM33.7 553.0h5.5v1.6h-5.5zM15.5 554.9h0.7v1.6h-0.7zM11.6 556.8h0.7v1.6h-0.7zM7.8 558.8h1.6v1.6h-1.6zM7.8 560.6h0.7v1.6h-0.7zM11.6 562.5h9.3v1.6h-9.3zM21.2 562.5h0.7v1.6h-0.7zM23.2 562.5h0.7v1.6h-0.7zM15.5 564.4h2.6v1.6h-2.6zM18.4 564.4h0.7v1.6h-0.7zM20.3 564.4h0.7v1.6h-0.7zM19.3 566.3h8.3v1.6h-8.3zM28.0 566.3h0.7v1.6h-0.7zM29.9 566.3h5.5v1.6h-5.5zM35.6 566.3h0.7v1.6h-0.7zM19.3 568.2h12.2v1.6h-12.2zM31.8 568.2h0.7v1.6h-0.7zM33.7 568.2h9.3v1.6h-9.3zM44.3 568.2h1.6v1.6h-1.6zM47.2 568.2h3.5v1.6h-3.5zM51.0 568.2h0.7v1.6h-0.7zM19.3 570.1h12.2v1.6h-12.2zM31.8 570.1h0.7v1.6h-0.7zM33.7 570.1h32.3v1.6h-32.3zM66.4 570.1h0.7v1.6h-0.7zM19.3 572.0h14.1v1.6h-14.1zM33.7 572.0h0.7v1.6h-0.7zM35.6 572.0h3.5v1.6h-3.5zM39.5 572.0h0.7v1.6h-0.7zM19.3 573.9h6.4v1.6h-6.4zM26.0 573.9h0.7v1.6h-0.7zM28.0 573.9h9.3v1.6h-9.3zM37.6 573.9h0.7v1.6h-0.7zM19.3 575.8h5.5v1.6h-5.5zM25.1 575.8h0.7v1.6h-0.7zM27.0 575.8h9.3v1.6h-9.3zM36.6 575.8h0.7v1.6h-0.7zM19.3 577.8h6.4v1.6h-6.4zM26.0 577.8h0.7v1.6h-0.7zM28.0 577.8h5.5v1.6h-5.5zM34.7 577.8h6.4v1.6h-6.4zM42.4 577.8h3.5v1.6h-3.5zM47.2 577.8h1.6v1.6h-1.6zM49.1 577.8h0.7v1.6h-0.7zM19.3 579.6h12.2v1.6h-12.2zM31.8 579.6h0.7v1.6h-0.7zM33.7 579.6h8.3v1.6h-8.3zM43.3 579.6h5.5v1.6h-5.5zM50.0 579.6h8.3v1.6h-8.3zM59.6 579.6h1.6v1.6h-1.6zM62.5 579.6h10.3v1.6h-10.3zM74.0 579.6h3.5v1.6h-3.5zM78.8 579.6h2.6v1.6h-2.6zM82.7 579.6h0.3v1.6h-0.3zM19.3 581.5h3.5v1.6h-3.5zM23.2 581.5h0.7v1.6h-0.7zM25.1 581.5h0.7v1.6h-0.7zM26.0 581.5h0.7v1.6h-0.7zM19.3 583.4h12.2v1.6h-12.2zM31.8 583.4h0.7v1.6h-0.7zM33.7 583.4h5.5v1.6h-5.5zM15.5 585.3h0.7v1.6h-0.7zM11.6 587.2h0.7v1.6h-0.7zM7.8 589.1h1.6v1.6h-1.6zM7.8 636.6h0.7v1.6h-0.7zM11.6 638.5h9.3v1.6h-9.3zM21.2 638.5h0.7v1.6h-0.7zM23.2 638.5h0.7v1.6h-0.7zM15.5 640.4h2.6v1.6h-2.6zM18.4 640.4h0.7v1.6h-0.7zM20.3 640.4h0.7v1.6h-0.7zM19.3 642.3h8.3v1.6h-8.3zM28.0 642.3h0.7v1.6h-0.7zM29.9 642.3h5.5v1.6h-5.5zM35.6 642.3h0.7v1.6h-0.7zM19.3 644.2h12.2v1.6h-12.2zM31.8 644.2h0.7v1.6h-0.7zM33.7 644.2h4.5v1.6h-4.5zM39.5 644.2h8.3v1.6h-8.3zM48.1 644.2h0.7v1.6h-0.7zM19.3 646.1h12.2v1.6h-12.2zM31.8 646.1h0.7v1.6h-0.7zM33.7 646.1h32.3v1.6h-32.3zM66.4 646.1h0.7v1.6h-0.7zM19.3 648.0h14.1v1.6h-14.1zM33.7 648.0h0.7v1.6h-0.7zM35.6 648.0h3.5v1.6h-3.5zM39.5 648.0h0.7v1.6h-0.7zM19.3 649.9h6.4v1.6h-6.4zM26.0 649.9h0.7v1.6h-0.7zM28.0 649.9h9.3v1.6h-9.3zM37.6 649.9h0.7v1.6h-0.7zM19.3 651.8h5.5v1.6h-5.5zM25.1 651.8h0.7v1.6h-0.7zM27.0 651.8h9.3v1.6h-9.3zM36.6 651.8h0.7v1.6h-0.7zM19.3 653.8h6.4v1.6h-6.4zM26.0 653.8h0.7v1.6h-0.7zM28.0 653.8h2.6v1.6h-2.6zM31.8 653.8h1.6v1.6h-1.6zM34.7 653.8h12.2v1.6h-12.2zM47.2 653.8h0.7v1.6h-0.7zM19.3 655.6h9.3v1.6h-9.3zM28.9 655.6h0.7v1.6h-0.7zM30.8 655.6h6.4v1.6h-6.4zM38.5 655.6h8.3v1.6h-8.3zM48.1 655.6h6.4v1.6h-6.4zM55.8 655.6h2.6v1.6h-2.6zM59.6 655.6h1.6v1.6h-1.6zM61.6 655.6h0.7v1.6h-0.7zM19.3 657.5h8.3v1.6h-8.3zM28.0 657.5h0.7v1.6h-0.7zM29.9 657.5h4.5v1.6h-4.5zM35.6 657.5h1.6v1.6h-1.6zM38.5 657.5h8.3v1.6h-8.3zM48.1 657.5h5.5v1.6h-5.5zM54.8 657.5h2.6v1.6h-2.6zM57.7 657.5h0.7v1.6h-0.7zM19.3 659.4h12.2v1.6h-12.2zM31.8 659.4h0.7v1.6h-0.7zM33.7 659.4h2.6v1.6h-2.6zM37.6 659.4h6.4v1.6h-6.4zM45.2 659.4h2.6v1.6h-2.6zM49.1 659.4h11.2v1.6h-11.2zM61.6 659.4h3.5v1.6h-3.5zM66.4 659.4h2.6v1.6h-2.6zM70.2 659.4h5.5v1.6h-5.5zM76.9 659.4h6.1v1.6h-6.1zM19.3 661.3h14.1v1.6h-14.1zM33.7 661.3h0.7v1.6h-0.7zM35.6 661.3h0.7v1.6h-0.7zM36.6 661.3h0.7v1.6h-0.7zM19.3 663.2h10.3v1.6h-10.3zM29.9 663.2h0.7v1.6h-0.7zM31.8 663.2h0.7v1.6h-0.7zM32.8 663.2h0.7v1.6h-0.7zM19.3 665.1h11.2v1.6h-11.2zM30.8 665.1h0.7v1.6h-0.7zM32.8 665.1h0.7v1.6h-0.7zM33.7 665.1h0.7v1.6h-0.7zM19.3 667.0h3.5v1.6h-3.5zM23.2 667.0h0.7v1.6h-0.7zM25.1 667.0h0.7v1.6h-0.7zM26.0 667.0h0.7v1.6h-0.7zM19.3 668.9h6.4v1.6h-6.4zM26.0 668.9h0.7v1.6h-0.7zM28.0 668.9h3.5v1.6h-3.5zM32.8 668.9h7.4v1.6h-7.4zM40.4 668.9h0.7v1.6h-0.7zM19.3 670.8h12.2v1.6h-12.2zM31.8 670.8h0.7v1.6h-0.7zM33.7 670.8h5.5v1.6h-5.5zM15.5 672.8h0.7v1.6h-0.7zM11.6 674.6h0.7v1.6h-0.7zM7.8 676.5h1.6v1.6h-1.6zM7.8 843.7h0.7v1.6h-0.7zM11.6 845.6h9.3v1.6h-9.3zM21.2 845.6h0.7v1.6h-0.7zM23.2 845.6h0.7v1.6h-0.7zM15.5 847.5h2.6v1.6h-2.6zM18.4 847.5h0.7v1.6h-0.7zM20.3 847.5h0.7v1.6h-0.7zM19.3 849.4h8.3v1.6h-8.3zM28.0 849.4h0.7v1.6h-0.7zM29.9 849.4h5.5v1.6h-5.5zM35.6 849.4h0.7v1.6h-0.7zM19.3 851.3h12.2v1.6h-12.2zM31.8 851.3h0.7v1.6h-0.7zM33.7 851.3h3.5v1.6h-3.5zM38.5 851.3h10.3v1.6h-10.3zM49.1 851.3h0.7v1.6h-0.7zM19.3 853.2h12.2v1.6h-12.2zM31.8 853.2h0.7v1.6h-0.7zM33.7 853.2h32.3v1.6h-32.3zM66.4 853.2h0.7v1.6h-0.7zM19.3 855.1h14.1v1.6h-14.1zM33.7 855.1h0.7v1.6h-0.7zM35.6 855.1h3.5v1.6h-3.5zM39.5 855.1h0.7v1.6h-0.7zM19.3 857.0h6.4v1.6h-6.4zM26.0 857.0h0.7v1.6h-0.7zM28.0 857.0h9.3v1.6h-9.3zM37.6 857.0h0.7v1.6h-0.7zM19.3 858.9h5.5v1.6h-5.5zM25.1 858.9h0.7v1.6h-0.7zM27.0 858.9h9.3v1.6h-9.3zM36.6 858.9h0.7v1.6h-0.7zM19.3 860.8h6.4v1.6h-6.4zM26.0 860.8h0.7v1.6h-0.7zM28.0 860.8h3.5v1.6h-3.5zM32.8 860.8h4.5v1.6h-4.5zM38.5 860.8h6.4v1.6h-6.4zM46.2 860.8h1.6v1.6h-1.6zM49.1 860.8h2.6v1.6h-2.6zM52.0 860.8h0.7v1.6h-0.7zM19.3 862.7h9.3v1.6h-9.3zM28.9 862.7h0.7v1.6h-0.7zM30.8 862.7h2.6v1.6h-2.6zM34.7 862.7h1.6v1.6h-1.6zM37.6 862.7h3.5v1.6h-3.5zM42.4 862.7h2.6v1.6h-2.6zM45.2 862.7h0.7v1.6h-0.7zM19.3 864.6h8.3v1.6h-8.3zM28.0 864.6h0.7v1.6h-0.7zM29.9 864.6h5.5v1.6h-5.5zM36.6 864.6h3.5v1.6h-3.5zM41.4 864.6h4.5v1.6h-4.5zM47.2 864.6h2.6v1.6h-2.6zM51.0 864.6h10.3v1.6h-10.3zM62.5 864.6h1.6v1.6h-1.6zM64.4 864.6h0.7v1.6h-0.7zM19.3 866.5h12.2v1.6h-12.2zM31.8 866.5h0.7v1.6h-0.7zM33.7 866.5h4.5v1.6h-4.5zM39.5 866.5h6.4v1.6h-6.4zM47.2 866.5h5.5v1.6h-5.5zM53.9 866.5h1.6v1.6h-1.6zM56.8 866.5h6.4v1.6h-6.4zM64.4 866.5h2.6v1.6h-2.6zM68.3 866.5h1.6v1.6h-1.6zM71.2 866.5h5.5v1.6h-5.5zM77.9 866.5h3.5v1.6h-3.5zM82.7 866.5h0.3v1.6h-0.3zM19.3 868.4h14.1v1.6h-14.1zM33.7 868.4h0.7v1.6h-0.7zM35.6 868.4h0.7v1.6h-0.7zM36.6 868.4h0.7v1.6h-0.7zM19.3 870.3h10.3v1.6h-10.3zM29.9 870.3h0.7v1.6h-0.7zM31.8 870.3h0.7v1.6h-0.7zM32.8 870.3h0.7v1.6h-0.7zM19.3 872.2h6.4v1.6h-6.4zM26.0 872.2h0.7v1.6h-0.7zM28.0 872.2h0.7v1.6h-0.7zM23.2 874.1h1.6v1.6h-1.6zM19.3 876.0h1.6v1.6h-1.6zM19.3 877.9h12.2v1.6h-12.2zM31.8 877.9h0.7v1.6h-0.7zM33.7 877.9h5.5v1.6h-5.5zM15.5 879.8h0.7v1.6h-0.7zM11.6 881.7h0.7v1.6h-0.7zM7.8 883.6h1.6v1.6h-1.6z"/></svg>
<svg style="position:absolute;left:670.00px;top:47.00px" width="83.00" height="894.00"><path fill="rgba(0,0,0,0.3)" d="M0.1 0.1h0.7v1.6h-0.7z"/></svg>
<div style="position:absolute;left:753.00px;top:46px;width:14.00px;height:895px;background:#f8f8f8;border-left:1px solid #efefef"></div>
<div style="position:absolute;left:756.70px;top:50px;width:7.4px;height:885px;background:#c2c2c2;border-radius:4px"></div>
<div style="position:absolute;left:1427.00px;top:46px;width:5.00px;height:895px;background:linear-gradient(to right,rgba(0,0,0,0),rgba(0,0,0,0.07))"></div>
<div style="position:absolute;left:1432.00px;top:46px;width:91.00px;height:895px;background:#fff"></div>
<div style="position:absolute;left:1440.00px;top:47px;width:83.00px;height:1.9px;background:#d4e6f8"></div>
<svg style="position:absolute;left:1440.00px;top:48.90px" width="83.00" height="892.10"><path fill="#ffd3d3" d="M0.0 0.0h83.0v1.9h-83.0zM0.0 119.7h83.0v1.9h-83.0zM0.0 121.6h83.0v1.9h-83.0zM0.0 123.5h83.0v1.9h-83.0zM0.0 125.4h83.0v1.9h-83.0zM0.0 127.3h83.0v1.9h-83.0zM0.0 129.2h83.0v1.9h-83.0zM0.0 131.1h83.0v1.9h-83.0zM0.0 133.0h83.0v1.9h-83.0zM0.0 134.9h83.0v1.9h-83.0zM0.0 136.8h83.0v1.9h-83.0zM0.0 138.7h83.0v1.9h-83.0zM0.0 140.6h83.0v1.9h-83.0zM0.0 142.5h83.0v1.9h-83.0zM0.0 144.4h83.0v1.9h-83.0zM0.0 146.3h83.0v1.9h-83.0zM0.0 148.2h83.0v1.9h-83.0zM0.0 150.1h83.0v1.9h-83.0zM0.0 520.6h83.0v1.9h-83.0zM0.0 522.5h83.0v1.9h-83.0zM0.0 524.4h83.0v1.9h-83.0zM0.0 526.3h83.0v1.9h-83.0zM0.0 528.2h83.0v1.9h-83.0zM0.0 530.1h83.0v1.9h-83.0zM0.0 532.0h83.0v1.9h-83.0zM0.0 533.9h83.0v1.9h-83.0zM0.0 535.8h83.0v1.9h-83.0zM0.0 537.7h83.0v1.9h-83.0zM0.0 539.6h83.0v1.9h-83.0zM0.0 541.5h83.0v1.9h-83.0zM0.0 543.4h83.0v1.9h-83.0zM0.0 545.3h83.0v1.9h-83.0zM0.0 547.2h83.0v1.9h-83.0zM0.0 549.1h83.0v1.9h-83.0zM0.0 551.0h83.0v1.9h-83.0zM0.0 552.9h83.0v1.9h-83.0zM0.0 554.8h83.0v1.9h-83.0zM0.0 556.7h83.0v1.9h-83.0zM0.0 558.6h83.0v1.9h-83.0zM0.0 606.1h83.0v1.9h-83.0zM0.0 608.0h83.0v1.9h-83.0zM0.0 609.9h83.0v1.9h-83.0zM0.0 611.8h83.0v1.9h-83.0zM0.0 613.7h83.0v1.9h-83.0zM0.0 615.6h83.0v1.9h-83.0zM0.0 617.5h83.0v1.9h-83.0zM0.0 619.4h83.0v1.9h-83.0zM0.0 621.3h83.0v1.9h-83.0zM0.0 623.2h83.0v1.9h-83.0zM0.0 625.1h83.0v1.9h-83.0zM0.0 627.0h83.0v1.9h-83.0zM0.0 628.9h83.0v1.9h-83.0zM0.0 630.8h83.0v1.9h-83.0zM0.0 632.7h83.0v1.9h-83.0zM0.0 634.6h83.0v1.9h-83.0zM0.0 636.5h83.0v1.9h-83.0zM0.0 638.4h83.0v1.9h-83.0zM0.0 805.6h83.0v1.9h-83.0zM0.0 807.5h83.0v1.9h-83.0zM0.0 809.4h83.0v1.9h-83.0zM0.0 811.3h83.0v1.9h-83.0zM0.0 813.2h83.0v1.9h-83.0zM0.0 815.1h83.0v1.9h-83.0zM0.0 817.0h83.0v1.9h-83.0zM0.0 818.9h83.0v1.9h-83.0zM0.0 820.8h83.0v1.9h-83.0zM0.0 822.7h83.0v1.9h-83.0zM0.0 824.6h83.0v1.9h-83.0zM0.0 826.5h83.0v1.9h-83.0zM0.0 828.4h83.0v1.9h-83.0zM0.0 830.3h83.0v1.9h-83.0zM0.0 832.2h83.0v1.9h-83.0zM0.0 834.1h83.0v1.9h-83.0zM0.0 836.0h83.0v1.9h-83.0z"/><path fill="#ff6262" d="M0.0 119.7h7.7v1.9h-7.7zM0.0 121.6h11.5v1.9h-11.5zM0.0 123.5h11.5v1.9h-11.5zM0.0 125.4h11.5v1.9h-11.5zM0.0 127.3h11.5v1.9h-11.5zM0.0 129.2h11.5v1.9h-11.5zM0.0 131.1h11.5v1.9h-11.5zM0.0 133.0h11.5v1.9h-11.5zM0.0 134.9h11.5v1.9h-11.5zM0.0 136.8h11.5v1.9h-11.5zM0.0 138.7h11.5v1.9h-11.5zM0.0 140.6h11.5v1.9h-11.5zM0.0 142.5h11.5v1.9h-11.5zM0.0 144.4h15.4v1.9h-15.4zM0.0 146.3h11.5v1.9h-11.5zM0.0 148.2h11.5v1.9h-11.5zM0.0 150.1h7.7v1.9h-7.7zM0.0 520.6h7.7v1.9h-7.7zM0.0 522.5h11.5v1.9h-11.5zM0.0 524.4h11.5v1.9h-11.5zM0.0 526.3h11.5v1.9h-11.5zM0.0 528.2h11.5v1.9h-11.5zM0.0 530.1h11.5v1.9h-11.5zM0.0 532.0h11.5v1.9h-11.5zM0.0 533.9h11.5v1.9h-11.5zM0.0 535.8h11.5v1.9h-11.5zM0.0 537.7h7.7v1.9h-7.7zM0.0 539.6h7.7v1.9h-7.7zM0.0 541.5h11.5v1.9h-11.5zM0.0 543.4h11.5v1.9h-11.5zM0.0 545.3h11.5v1.9h-11.5zM0.0 547.2h11.5v1.9h-11.5zM0.0 549.1h11.5v1.9h-11.5zM0.0 551.0h11.5v1.9h-11.5zM0.0 552.9h11.5v1.9h-11.5zM0.0 554.8h11.5v1.9h-11.5zM0.0 556.7h11.5v1.9h-11.5zM0.0 558.6h7.7v1.9h-7.7zM0.0 606.1h7.7v1.9h-7.7zM0.0 608.0h11.5v1.9h-11.5zM0.0 609.9h11.5v1.9h-11.5zM0.0 611.8h11.5v1.9h-11.5zM0.0 613.7h11.5v1.9h-11.5zM0.0 615.6h11.5v1.9h-11.5zM0.0 617.5h11.5v1.9h-11.5zM0.0 619.4h11.5v1.9h-11.5zM0.0 621.3h11.5v1.9h-11.5zM0.0 623.2h11.5v1.9h-11.5zM0.0 625.1h11.5v1.9h-11.5zM0.0 627.0h11.5v1.9h-11.5zM0.0 628.9h11.5v1.9h-11.5zM0.0 630.8h11.5v1.9h-11.5zM0.0 632.7h15.4v1.9h-15.4zM0.0 634.6h11.5v1.9h-11.5zM0.0 636.5h11.5v1.9h-11.5zM0.0 638.4h7.7v1.9h-7.7zM0.0 805.6h7.7v1.9h-7.7zM0.0 807.5h11.5v1.9h-11.5zM0.0 809.4h11.5v1.9h-11.5zM0.0 811.3h11.5v1.9h-11.5zM0.0 813.2h11.5v1.9h-11.5zM0.0 815.1h11.5v1.9h-11.5zM0.0 817.0h11.5v1.9h-11.5zM0.0 818.9h11.5v1.9h-11.5zM0.0 820.8h11.5v1.9h-11.5zM0.0 822.7h11.5v1.9h-11.5zM0.0 824.6h11.5v1.9h-11.5zM0.0 826.5h11.5v1.9h-11.5zM0.0 828.4h11.5v1.9h-11.5zM0.0 830.3h11.5v1.9h-11.5zM0.0 832.2h11.5v1.9h-11.5zM0.0 834.1h11.5v1.9h-11.5zM0.0 836.0h7.7v1.9h-7.7z"/><path fill="#ff7070" d="M0.0 0.0h3.8v1.9h-3.8z"/><path fill="#e9efdf" d="M0.0 1.9h83.0v1.9h-83.0z"/><path fill="#c9d9b5" d="M0.0 1.9h3.8v1.9h-3.8z"/><path fill="rgba(200,20,20,0.6)" d="M4.0 0.1h11.2v1.6h-11.2zM15.5 0.1h0.7v1.6h-0.7zM17.4 0.1h4.5v1.6h-4.5zM22.2 0.1h0.7v1.6h-0.7z"/><path fill="rgba(120,90,40,0.5)" d="M4.0 2.0h11.2v1.6h-11.2zM15.5 2.0h0.7v1.6h-0.7zM17.4 2.0h4.5v1.6h-4.5zM22.2 2.0h0.7v1.6h-0.7z"/><path fill="rgba(163,21,21,0.4)" d="M4.0 3.9h8.3v1.6h-8.3zM11.6 7.8h8.3v1.6h-8.3zM11.6 9.7h12.2v1.6h-12.2zM11.6 11.5h12.2v1.6h-12.2zM11.6 13.4h14.1v1.6h-14.1zM11.6 15.3h6.4v1.6h-6.4zM11.6 17.2h5.5v1.6h-5.5zM11.6 19.1h6.4v1.6h-6.4zM11.6 21.0h12.2v1.6h-12.2zM11.6 26.7h8.3v1.6h-8.3zM11.6 28.6h12.2v1.6h-12.2zM11.6 30.5h12.2v1.6h-12.2zM11.6 32.4h14.1v1.6h-14.1zM11.6 34.3h6.4v1.6h-6.4zM11.6 36.2h5.5v1.6h-5.5zM11.6 38.1h6.4v1.6h-6.4zM11.6 40.0h12.2v1.6h-12.2zM11.6 45.7h8.3v1.6h-8.3zM11.6 47.6h12.2v1.6h-12.2zM11.6 49.5h12.2v1.6h-12.2zM11.6 51.4h14.1v1.6h-14.1zM11.6 53.3h6.4v1.6h-6.4zM11.6 55.2h5.5v1.6h-5.5zM11.6 57.1h6.4v1.6h-6.4zM11.6 59.0h12.2v1.6h-12.2zM11.6 64.8h8.3v1.6h-8.3zM11.6 66.7h12.2v1.6h-12.2zM11.6 68.5h12.2v1.6h-12.2zM11.6 70.5h14.1v1.6h-14.1zM11.6 72.4h6.4v1.6h-6.4zM11.6 74.2h5.5v1.6h-5.5zM11.6 76.2h6.4v1.6h-6.4zM11.6 78.0h12.2v1.6h-12.2zM11.6 80.0h11.2v1.6h-11.2zM11.6 81.9h3.5v1.6h-3.5zM11.6 83.8h12.2v1.6h-12.2zM11.6 89.5h8.3v1.6h-8.3zM11.6 91.3h12.2v1.6h-12.2zM11.6 93.2h12.2v1.6h-12.2zM11.6 95.2h14.1v1.6h-14.1zM11.6 97.0h6.4v1.6h-6.4zM11.6 99.0h5.5v1.6h-5.5zM11.6 100.8h6.4v1.6h-6.4zM11.6 102.8h12.2v1.6h-12.2zM11.6 108.5h8.3v1.6h-8.3zM11.6 110.3h12.2v1.6h-12.2zM11.6 112.2h12.2v1.6h-12.2zM11.6 114.2h14.1v1.6h-14.1zM11.6 116.0h12.2v1.6h-12.2zM11.6 154.1h8.3v1.6h-8.3zM11.6 155.9h12.2v1.6h-12.2zM11.6 157.8h12.2v1.6h-12.2zM11.6 159.8h14.1v1.6h-14.1zM11.6 161.7h6.4v1.6h-6.4zM11.6 163.6h5.5v1.6h-5.5zM11.6 165.4h6.4v1.6h-6.4zM11.6 167.3h9.3v1.6h-9.3zM11.6 169.2h8.3v1.6h-8.3zM11.6 171.2h12.2v1.6h-12.2zM11.6 173.1h14.1v1.6h-14.1zM11.6 174.9h10.3v1.6h-10.3zM11.6 176.8h11.2v1.6h-11.2zM11.6 178.8h3.5v1.6h-3.5zM11.6 180.7h6.4v1.6h-6.4zM11.6 182.5h9.3v1.6h-9.3zM11.6 184.4h8.3v1.6h-8.3zM11.6 186.3h10.3v1.6h-10.3zM11.6 188.2h11.2v1.6h-11.2zM11.6 190.2h12.2v1.6h-12.2zM11.6 195.8h8.3v1.6h-8.3zM11.6 197.8h12.2v1.6h-12.2zM11.6 199.7h12.2v1.6h-12.2zM11.6 201.5h14.1v1.6h-14.1zM11.6 203.4h6.4v1.6h-6.4zM11.6 205.3h5.5v1.6h-5.5zM11.6 207.2h6.4v1.6h-6.4zM11.6 209.2h9.3v1.6h-9.3zM11.6 211.0h12.2v1.6h-12.2zM11.6 212.9h10.3v1.6h-10.3zM11.6 214.8h3.5v1.6h-3.5zM11.6 216.8h12.2v1.6h-12.2zM11.6 222.4h8.3v1.6h-8.3zM11.6 224.3h12.2v1.6h-12.2zM11.6 226.2h12.2v1.6h-12.2zM11.6 228.2h14.1v1.6h-14.1zM11.6 230.0h6.4v1.6h-6.4zM11.6 231.9h5.5v1.6h-5.5zM11.6 233.8h6.4v1.6h-6.4zM11.6 235.8h9.3v1.6h-9.3zM11.6 237.7h12.2v1.6h-12.2zM11.6 239.5h14.1v1.6h-14.1zM11.6 241.4h10.3v1.6h-10.3zM11.6 243.3h11.2v1.6h-11.2zM11.6 245.2h3.5v1.6h-3.5zM11.6 247.2h6.4v1.6h-6.4zM11.6 252.8h12.2v1.6h-12.2zM11.6 258.5h8.3v1.6h-8.3zM11.6 260.4h12.2v1.6h-12.2zM11.6 262.3h12.2v1.6h-12.2zM11.6 264.2h14.1v1.6h-14.1zM11.6 266.1h6.4v1.6h-6.4zM11.6 268.0h5.5v1.6h-5.5zM11.6 269.9h6.4v1.6h-6.4zM11.6 271.8h9.3v1.6h-9.3zM11.6 273.7h8.3v1.6h-8.3zM11.6 275.6h12.2v1.6h-12.2zM11.6 277.5h14.1v1.6h-14.1zM11.6 279.4h10.3v1.6h-10.3zM11.6 281.3h11.2v1.6h-11.2zM11.6 283.2h3.5v1.6h-3.5zM11.6 285.1h6.4v1.6h-6.4zM11.6 290.8h12.2v1.6h-12.2zM11.6 296.5h8.3v1.6h-8.3zM11.6 298.4h12.2v1.6h-12.2zM11.6 300.3h12.2v1.6h-12.2zM11.6 302.2h14.1v1.6h-14.1zM11.6 304.1h6.4v1.6h-6.4zM11.6 306.0h5.5v1.6h-5.5zM11.6 307.9h6.4v1.6h-6.4zM11.6 309.8h9.3v1.6h-9.3zM11.6 311.7h8.3v1.6h-8.3zM11.6 313.6h12.2v1.6h-12.2zM11.6 315.5h14.1v1.6h-14.1zM11.6 317.4h10.3v1.6h-10.3zM11.6 319.3h11.2v1.6h-11.2zM11.6 321.2h3.5v1.6h-3.5zM11.6 323.1h6.4v1.6h-6.4zM11.6 325.0h9.3v1.6h-9.3zM11.6 326.9h8.3v1.6h-8.3zM11.6 328.8h12.2v1.6h-12.2zM11.6 334.5h8.3v1.6h-8.3zM11.6 336.4h12.2v1.6h-12.2zM11.6 338.3h12.2v1.6h-12.2zM11.6 340.2h14.1v1.6h-14.1zM11.6 342.1h6.4v1.6h-6.4zM11.6 344.0h5.5v1.6h-5.5zM11.6 345.9h6.4v1.6h-6.4zM11.6 347.8h9.3v1.6h-9.3zM11.6 349.7h8.3v1.6h-8.3zM11.6 351.6h12.2v1.6h-12.2zM11.6 353.5h3.5v1.6h-3.5zM11.6 355.4h6.4v1.6h-6.4zM11.6 361.1h12.2v1.6h-12.2zM11.6 366.8h8.3v1.6h-8.3zM11.6 368.7h12.2v1.6h-12.2zM11.6 370.6h12.2v1.6h-12.2zM11.6 372.5h14.1v1.6h-14.1zM11.6 374.4h6.4v1.6h-6.4zM11.6 376.3h5.5v1.6h-5.5zM11.6 378.2h6.4v1.6h-6.4zM11.6 380.1h9.3v1.6h-9.3zM11.6 382.0h8.3v1.6h-8.3zM11.6 383.9h12.2v1.6h-12.2zM11.6 385.8h14.1v1.6h-14.1zM11.6 387.7h3.5v1.6h-3.5zM11.6 389.6h6.4v1.6h-6.4zM11.6 395.3h12.2v1.6h-12.2zM11.6 401.0h8.3v1.6h-8.3zM11.6 402.9h12.2v1.6h-12.2zM11.6 404.8h12.2v1.6h-12.2zM11.6 406.7h14.1v1.6h-14.1zM11.6 408.6h6.4v1.6h-6.4zM11.6 410.5h5.5v1.6h-5.5zM11.6 412.4h6.4v1.6h-6.4zM11.6 414.3h9.3v1.6h-9.3zM11.6 416.2h8.3v1.6h-8.3zM11.6 418.1h12.2v1.6h-12.2zM11.6 420.0h14.1v1.6h-14.1zM11.6 421.9h10.3v1.6h-10.3zM11.6 423.8h11.2v1.6h-11.2zM11.6 425.7h3.5v1.6h-3.5zM11.6 427.6h12.2v1.6h-12.2zM11.6 433.3h8.3v1.6h-8.3zM11.6 435.2h12.2v1.6h-12.2zM11.6 437.1h12.2v1.6h-12.2zM11.6 439.0h14.1v1.6h-14.1zM11.6 440.9h6.4v1.6h-6.4zM11.6 442.8h5.5v1.6h-5.5zM11.6 444.7h6.4v1.6h-6.4zM11.6 446.6h9.3v1.6h-9.3zM11.6 448.5h12.2v1.6h-12.2zM11.6 450.4h14.1v1.6h-14.1zM11.6 452.3h10.3v1.6h-10.3zM11.6 454.2h3.5v1.6h-3.5zM11.6 456.1h6.4v1.6h-6.4zM11.6 461.8h12.2v1.6h-12.2zM11.6 467.5h8.3v1.6h-8.3zM11.6 469.4h12.2v1.6h-12.2zM11.6 471.3h12.2v1.6h-12.2zM11.6 473.2h14.1v1.6h-14.1zM11.6 475.1h6.4v1.6h-6.4zM11.6 477.0h5.5v1.6h-5.5zM11.6 478.9h6.4v1.6h-6.4zM11.6 480.8h12.2v1.6h-12.2zM11.6 482.7h14.1v1.6h-14.1zM11.6 484.6h10.3v1.6h-10.3zM11.6 486.5h6.4v1.6h-6.4zM11.6 492.2h12.2v1.6h-12.2zM11.6 497.9h8.3v1.6h-8.3zM11.6 499.8h12.2v1.6h-12.2zM11.6 501.7h12.2v1.6h-12.2zM11.6 503.6h14.1v1.6h-14.1zM11.6 505.5h6.4v1.6h-6.4zM11.6 507.4h5.5v1.6h-5.5zM11.6 509.3h6.4v1.6h-6.4zM11.6 511.2h12.2v1.6h-12.2zM11.6 513.1h11.2v1.6h-11.2zM11.6 515.0h3.5v1.6h-3.5zM11.6 516.9h12.2v1.6h-12.2zM11.6 562.5h8.3v1.6h-8.3zM11.6 564.4h12.2v1.6h-12.2zM11.6 566.3h12.2v1.6h-12.2zM11.6 568.2h14.1v1.6h-14.1zM11.6 570.1h6.4v1.6h-6.4zM11.6 572.0h5.5v1.6h-5.5zM11.6 573.9h6.4v1.6h-6.4zM11.6 575.8h12.2v1.6h-12.2zM11.6 577.8h12.2v1.6h-12.2zM11.6 583.4h8.3v1.6h-8.3zM11.6 585.3h12.2v1.6h-12.2zM11.6 587.2h12.2v1.6h-12.2zM11.6 589.1h14.1v1.6h-14.1zM11.6 591.0h6.4v1.6h-6.4zM11.6 592.9h5.5v1.6h-5.5zM11.6 594.8h6.4v1.6h-6.4zM11.6 596.8h6.4v1.6h-6.4zM11.6 602.4h12.2v1.6h-12.2zM11.6 642.3h8.3v1.6h-8.3zM11.6 644.2h12.2v1.6h-12.2zM11.6 646.1h12.2v1.6h-12.2zM11.6 648.0h14.1v1.6h-14.1zM11.6 649.9h6.4v1.6h-6.4zM11.6 651.8h5.5v1.6h-5.5zM11.6 653.8h6.4v1.6h-6.4zM11.6 655.6h9.3v1.6h-9.3zM11.6 657.5h12.2v1.6h-12.2zM11.6 659.4h14.1v1.6h-14.1zM11.6 661.3h6.4v1.6h-6.4zM11.6 667.0h12.2v1.6h-12.2zM11.6 672.8h8.3v1.6h-8.3zM11.6 674.6h12.2v1.6h-12.2zM11.6 676.5h12.2v1.6h-12.2zM11.6 678.4h14.1v1.6h-14.1zM11.6 680.3h6.4v1.6h-6.4zM11.6 682.2h5.5v1.6h-5.5zM11.6 684.1h6.4v1.6h-6.4zM11.6 686.0h9.3v1.6h-9.3zM11.6 687.9h8.3v1.6h-8.3zM11.6 689.8h12.2v1.6h-12.2zM11.6 691.8h14.1v1.6h-14.1zM11.6 693.6h10.3v1.6h-10.3zM11.6 695.5h11.2v1.6h-11.2zM11.6 697.4h3.5v1.6h-3.5zM11.6 699.3h6.4v1.6h-6.4zM11.6 701.2h6.4v1.6h-6.4zM11.6 706.9h12.2v1.6h-12.2zM11.6 712.6h8.3v1.6h-8.3zM11.6 714.5h12.2v1.6h-12.2zM11.6 716.4h12.2v1.6h-12.2zM11.6 718.3h14.1v1.6h-14.1zM11.6 720.2h6.4v1.6h-6.4zM11.6 722.1h5.5v1.6h-5.5zM11.6 724.0h6.4v1.6h-6.4zM11.6 725.9h9.3v1.6h-9.3zM11.6 727.8h8.3v1.6h-8.3zM11.6 729.7h12.2v1.6h-12.2zM11.6 731.6h14.1v1.6h-14.1zM11.6 733.5h10.3v1.6h-10.3zM11.6 735.4h11.2v1.6h-11.2zM11.6 737.3h3.5v1.6h-3.5zM11.6 739.2h6.4v1.6h-6.4zM11.6 741.1h9.3v1.6h-9.3zM11.6 743.0h8.3v1.6h-8.3zM11.6 744.9h10.3v1.6h-10.3zM11.6 746.8h12.2v1.6h-12.2zM11.6 752.5h8.3v1.6h-8.3zM11.6 754.4h12.2v1.6h-12.2zM11.6 756.3h12.2v1.6h-12.2zM11.6 758.2h14.1v1.6h-14.1zM11.6 760.1h6.4v1.6h-6.4zM11.6 762.0h5.5v1.6h-5.5zM11.6 763.9h6.4v1.6h-6.4zM11.6 765.8h12.2v1.6h-12.2zM11.6 767.7h14.1v1.6h-14.1zM11.6 769.6h10.3v1.6h-10.3zM11.6 771.5h3.5v1.6h-3.5zM11.6 773.4h12.2v1.6h-12.2zM11.6 779.1h8.3v1.6h-8.3zM11.6 781.0h12.2v1.6h-12.2zM11.6 782.9h12.2v1.6h-12.2zM11.6 784.8h14.1v1.6h-14.1zM11.6 786.7h6.4v1.6h-6.4zM11.6 788.6h5.5v1.6h-5.5zM11.6 790.5h6.4v1.6h-6.4zM11.6 792.4h9.3v1.6h-9.3zM11.6 794.3h12.2v1.6h-12.2zM11.6 796.2h14.1v1.6h-14.1zM11.6 798.1h11.2v1.6h-11.2zM11.6 800.0h3.5v1.6h-3.5zM11.6 801.9h12.2v1.6h-12.2zM11.6 839.9h8.3v1.6h-8.3zM11.6 841.8h12.2v1.6h-12.2zM11.6 843.7h12.2v1.6h-12.2zM11.6 845.6h14.1v1.6h-14.1zM11.6 847.5h6.4v1.6h-6.4zM11.6 849.4h5.5v1.6h-5.5zM11.6 851.3h6.4v1.6h-6.4zM11.6 853.2h9.3v1.6h-9.3zM11.6 855.1h8.3v1.6h-8.3zM11.6 857.0h12.2v1.6h-12.2zM11.6 858.9h14.1v1.6h-14.1zM11.6 860.8h10.3v1.6h-10.3zM11.6 862.7h11.2v1.6h-11.2zM11.6 864.6h12.2v1.6h-12.2zM11.6 870.3h8.3v1.6h-8.3zM11.6 872.2h12.2v1.6h-12.2zM11.6 874.1h12.2v1.6h-12.2zM11.6 876.0h14.1v1.6h-14.1zM11.6 877.9h6.4v1.6h-6.4zM11.6 879.8h5.5v1.6h-5.5zM11.6 881.7h6.4v1.6h-6.4zM11.6 883.6h9.3v1.6h-9.3zM11.6 885.5h8.3v1.6h-8.3zM11.6 887.4h12.2v1.6h-12.2zM11.6 889.3h14.1v1.6h-14.1zM11.6 891.2h10.3v1.6h-10.3zM11.6 893.1h11.2v1.6h-11.2zM11.6 895.0h3.5v1.6h-3.5zM11.6 896.9h6.4v1.6h-6.4zM11.6 898.8h9.3v1.6h-9.3z"/><path fill="rgba(0,0,0,0.3)" d="M12.6 3.9h0.7v1.6h-0.7zM14.5 3.9h0.7v1.6h-0.7zM7.8 5.8h0.7v1.6h-0.7zM20.3 7.8h0.7v1.6h-0.7zM28.0 7.8h0.7v1.6h-0.7zM24.1 9.7h0.7v1.6h-0.7zM41.4 9.7h0.7v1.6h-0.7zM24.1 11.5h0.7v1.6h-0.7zM58.7 11.5h0.7v1.6h-0.7zM26.0 13.4h0.7v1.6h-0.7zM31.8 13.4h0.7v1.6h-0.7zM18.4 15.3h0.7v1.6h-0.7zM29.9 15.3h0.7v1.6h-0.7zM17.4 17.2h0.7v1.6h-0.7zM28.9 17.2h0.7v1.6h-0.7zM18.4 19.1h0.7v1.6h-0.7zM49.1 19.1h0.7v1.6h-0.7zM24.1 21.0h0.7v1.6h-0.7zM7.8 22.9h1.6v1.6h-1.6zM7.8 24.8h0.7v1.6h-0.7zM20.3 26.7h0.7v1.6h-0.7zM28.0 26.7h0.7v1.6h-0.7zM24.1 28.6h0.7v1.6h-0.7zM51.0 28.6h0.7v1.6h-0.7zM24.1 30.5h0.7v1.6h-0.7zM58.7 30.5h0.7v1.6h-0.7zM26.0 32.4h0.7v1.6h-0.7zM32.8 32.4h0.7v1.6h-0.7zM18.4 34.3h0.7v1.6h-0.7zM29.9 34.3h0.7v1.6h-0.7zM17.4 36.2h0.7v1.6h-0.7zM28.9 36.2h0.7v1.6h-0.7zM18.4 38.1h0.7v1.6h-0.7zM33.7 38.1h0.7v1.6h-0.7zM24.1 40.0h0.7v1.6h-0.7zM7.8 41.9h1.6v1.6h-1.6zM7.8 43.8h0.7v1.6h-0.7zM20.3 45.7h0.7v1.6h-0.7zM28.0 45.7h0.7v1.6h-0.7zM24.1 47.6h0.7v1.6h-0.7zM30.8 47.6h0.7v1.6h-0.7zM24.1 49.5h0.7v1.6h-0.7zM58.7 49.5h0.7v1.6h-0.7zM26.0 51.4h0.7v1.6h-0.7zM31.8 51.4h0.7v1.6h-0.7zM18.4 53.3h0.7v1.6h-0.7zM29.9 53.3h0.7v1.6h-0.7zM17.4 55.2h0.7v1.6h-0.7zM28.9 55.2h0.7v1.6h-0.7zM18.4 57.1h0.7v1.6h-0.7zM49.1 57.1h0.7v1.6h-0.7zM24.1 59.0h0.7v1.6h-0.7zM7.8 60.9h1.6v1.6h-1.6zM7.8 62.8h0.7v1.6h-0.7zM20.3 64.8h0.7v1.6h-0.7zM28.0 64.8h0.7v1.6h-0.7zM24.1 66.7h0.7v1.6h-0.7zM46.2 66.7h0.7v1.6h-0.7zM24.1 68.5h0.7v1.6h-0.7zM58.7 68.5h0.7v1.6h-0.7zM26.0 70.5h0.7v1.6h-0.7zM32.8 70.5h0.7v1.6h-0.7zM18.4 72.4h0.7v1.6h-0.7zM29.9 72.4h0.7v1.6h-0.7zM17.4 74.2h0.7v1.6h-0.7zM28.9 74.2h0.7v1.6h-0.7zM18.4 76.2h0.7v1.6h-0.7zM33.7 76.2h0.7v1.6h-0.7zM24.1 78.0h0.7v1.6h-0.7zM23.2 80.0h0.7v1.6h-0.7zM26.0 80.0h0.7v1.6h-0.7zM15.5 81.9h0.7v1.6h-0.7zM18.4 81.9h0.7v1.6h-0.7zM24.1 83.8h0.7v1.6h-0.7zM7.8 85.7h1.6v1.6h-1.6zM7.8 87.5h0.7v1.6h-0.7zM20.3 89.5h0.7v1.6h-0.7zM28.0 89.5h0.7v1.6h-0.7zM24.1 91.3h0.7v1.6h-0.7zM32.8 91.3h0.7v1.6h-0.7zM24.1 93.2h0.7v1.6h-0.7zM58.7 93.2h0.7v1.6h-0.7zM26.0 95.2h0.7v1.6h-0.7zM31.8 95.2h0.7v1.6h-0.7zM18.4 97.0h0.7v1.6h-0.7zM29.9 97.0h0.7v1.6h-0.7zM17.4 99.0h0.7v1.6h-0.7zM28.9 99.0h0.7v1.6h-0.7zM18.4 100.8h0.7v1.6h-0.7zM38.5 100.8h0.7v1.6h-0.7zM24.1 102.8h0.7v1.6h-0.7zM7.8 104.7h1.6v1.6h-1.6zM7.8 106.5h0.7v1.6h-0.7zM20.3 108.5h0.7v1.6h-0.7zM28.0 108.5h0.7v1.6h-0.7zM24.1 110.3h0.7v1.6h-0.7zM40.4 110.3h0.7v1.6h-0.7zM24.1 112.2h0.7v1.6h-0.7zM58.7 112.2h0.7v1.6h-0.7zM26.0 114.2h0.7v1.6h-0.7zM32.8 114.2h0.7v1.6h-0.7zM24.1 116.0h0.7v1.6h-0.7zM7.8 118.0h1.6v1.6h-1.6zM7.8 152.2h0.7v1.6h-0.7zM20.3 154.1h0.7v1.6h-0.7zM28.0 154.1h0.7v1.6h-0.7zM24.1 155.9h0.7v1.6h-0.7zM47.2 155.9h0.7v1.6h-0.7zM24.1 157.8h0.7v1.6h-0.7zM58.7 157.8h0.7v1.6h-0.7zM26.0 159.8h0.7v1.6h-0.7zM32.8 159.8h0.7v1.6h-0.7zM18.4 161.7h0.7v1.6h-0.7zM29.9 161.7h0.7v1.6h-0.7zM17.4 163.6h0.7v1.6h-0.7zM28.9 163.6h0.7v1.6h-0.7zM18.4 165.4h0.7v1.6h-0.7zM36.6 165.4h0.7v1.6h-0.7zM21.2 167.3h0.7v1.6h-0.7zM43.3 167.3h0.7v1.6h-0.7zM20.3 169.2h0.7v1.6h-0.7zM58.7 169.2h0.7v1.6h-0.7zM24.1 171.2h0.7v1.6h-0.7zM26.0 173.1h0.7v1.6h-0.7zM28.9 173.1h0.7v1.6h-0.7zM22.2 174.9h0.7v1.6h-0.7zM25.1 174.9h0.7v1.6h-0.7zM23.2 176.8h0.7v1.6h-0.7zM26.0 176.8h0.7v1.6h-0.7zM15.5 178.8h0.7v1.6h-0.7zM18.4 178.8h0.7v1.6h-0.7zM18.4 180.7h0.7v1.6h-0.7zM37.6 180.7h0.7v1.6h-0.7zM21.2 182.5h0.7v1.6h-0.7zM33.7 182.5h0.7v1.6h-0.7zM20.3 184.4h0.7v1.6h-0.7zM38.5 184.4h0.7v1.6h-0.7zM22.2 186.3h0.7v1.6h-0.7zM25.1 186.3h0.7v1.6h-0.7zM23.2 188.2h0.7v1.6h-0.7zM26.0 188.2h0.7v1.6h-0.7zM24.1 190.2h0.7v1.6h-0.7zM7.8 192.0h1.6v1.6h-1.6zM7.8 193.9h0.7v1.6h-0.7zM20.3 195.8h0.7v1.6h-0.7zM28.0 195.8h0.7v1.6h-0.7zM24.1 197.8h0.7v1.6h-0.7zM45.2 197.8h0.7v1.6h-0.7zM24.1 199.7h0.7v1.6h-0.7zM58.7 199.7h0.7v1.6h-0.7zM26.0 201.5h0.7v1.6h-0.7zM33.7 201.5h0.7v1.6h-0.7zM18.4 203.4h0.7v1.6h-0.7zM29.9 203.4h0.7v1.6h-0.7zM17.4 205.3h0.7v1.6h-0.7zM28.9 205.3h0.7v1.6h-0.7zM18.4 207.2h0.7v1.6h-0.7zM34.7 207.2h0.7v1.6h-0.7zM21.2 209.2h0.7v1.6h-0.7zM39.5 209.2h0.7v1.6h-0.7zM24.1 211.0h0.7v1.6h-0.7zM22.2 212.9h0.7v1.6h-0.7zM25.1 212.9h0.7v1.6h-0.7zM15.5 214.8h0.7v1.6h-0.7zM18.4 214.8h0.7v1.6h-0.7zM24.1 216.8h0.7v1.6h-0.7zM7.8 218.7h1.6v1.6h-1.6zM7.8 220.5h0.7v1.6h-0.7zM20.3 222.4h0.7v1.6h-0.7zM28.0 222.4h0.7v1.6h-0.7zM24.1 224.3h0.7v1.6h-0.7zM42.4 224.3h0.7v1.6h-0.7zM24.1 226.2h0.7v1.6h-0.7zM58.7 226.2h0.7v1.6h-0.7zM26.0 228.2h0.7v1.6h-0.7zM33.7 228.2h0.7v1.6h-0.7zM18.4 230.0h0.7v1.6h-0.7zM29.9 230.0h0.7v1.6h-0.7zM17.4 231.9h0.7v1.6h-0.7zM28.9 231.9h0.7v1.6h-0.7zM18.4 233.8h0.7v1.6h-0.7zM29.9 233.8h0.7v1.6h-0.7zM21.2 235.8h0.7v1.6h-0.7zM53.9 235.8h0.7v1.6h-0.7zM24.1 237.7h0.7v1.6h-0.7zM26.0 239.5h0.7v1.6h-0.7zM28.9 239.5h0.7v1.6h-0.7zM22.2 241.4h0.7v1.6h-0.7zM25.1 241.4h0.7v1.6h-0.7zM23.2 243.3h0.7v1.6h-0.7zM26.0 243.3h0.7v1.6h-0.7zM15.5 245.2h0.7v1.6h-0.7zM18.4 245.2h0.7v1.6h-0.7zM18.4 247.2h0.7v1.6h-0.7zM20.3 247.2h0.7v1.6h-0.7zM11.6 250.9h1.6v1.6h-1.6zM24.1 252.8h0.7v1.6h-0.7zM7.8 254.8h1.6v1.6h-1.6zM7.8 256.6h0.7v1.6h-0.7zM20.3 258.5h0.7v1.6h-0.7zM28.0 258.5h0.7v1.6h-0.7zM24.1 260.4h0.7v1.6h-0.7zM43.3 260.4h0.7v1.6h-0.7zM24.1 262.3h0.7v1.6h-0.7zM58.7 262.3h0.7v1.6h-0.7zM26.0 264.2h0.7v1.6h-0.7zM32.8 264.2h0.7v1.6h-0.7zM18.4 266.1h0.7v1.6h-0.7zM29.9 266.1h0.7v1.6h-0.7zM17.4 268.0h0.7v1.6h-0.7zM28.9 268.0h0.7v1.6h-0.7zM18.4 269.9h0.7v1.6h-0.7zM48.1 269.9h0.7v1.6h-0.7zM21.2 271.8h0.7v1.6h-0.7zM38.5 271.8h0.7v1.6h-0.7zM20.3 273.7h0.7v1.6h-0.7zM59.6 273.7h0.7v1.6h-0.7zM24.1 275.6h0.7v1.6h-0.7zM26.0 277.5h0.7v1.6h-0.7zM28.9 277.5h0.7v1.6h-0.7zM22.2 279.4h0.7v1.6h-0.7zM25.1 279.4h0.7v1.6h-0.7zM23.2 281.3h0.7v1.6h-0.7zM26.0 281.3h0.7v1.6h-0.7zM15.5 283.2h0.7v1.6h-0.7zM18.4 283.2h0.7v1.6h-0.7zM18.4 285.1h0.7v1.6h-0.7zM20.3 285.1h0.7v1.6h-0.7zM11.6 288.9h1.6v1.6h-1.6zM24.1 290.8h0.7v1.6h-0.7zM7.8 292.7h1.6v1.6h-1.6zM7.8 294.6h0.7v1.6h-0.7zM20.3 296.5h0.7v1.6h-0.7zM28.0 296.5h0.7v1.6h-0.7zM24.1 298.4h0.7v1.6h-0.7zM51.0 298.4h0.7v1.6h-0.7zM24.1 300.3h0.7v1.6h-0.7zM58.7 300.3h0.7v1.6h-0.7zM26.0 302.2h0.7v1.6h-0.7zM33.7 302.2h0.7v1.6h-0.7zM18.4 304.1h0.7v1.6h-0.7zM29.9 304.1h0.7v1.6h-0.7zM17.4 306.0h0.7v1.6h-0.7zM28.9 306.0h0.7v1.6h-0.7zM18.4 307.9h0.7v1.6h-0.7zM42.4 307.9h0.7v1.6h-0.7zM21.2 309.8h0.7v1.6h-0.7zM41.4 309.8h0.7v1.6h-0.7zM20.3 311.7h0.7v1.6h-0.7zM62.5 311.7h0.7v1.6h-0.7zM24.1 313.6h0.7v1.6h-0.7zM26.0 315.5h0.7v1.6h-0.7zM28.9 315.5h0.7v1.6h-0.7zM22.2 317.4h0.7v1.6h-0.7zM25.1 317.4h0.7v1.6h-0.7zM23.2 319.3h0.7v1.6h-0.7zM26.0 319.3h0.7v1.6h-0.7zM15.5 321.2h0.7v1.6h-0.7zM18.4 321.2h0.7v1.6h-0.7zM18.4 323.1h0.7v1.6h-0.7zM32.8 323.1h0.7v1.6h-0.7zM21.2 325.0h0.7v1.6h-0.7zM37.6 325.0h0.7v1.6h-0.7zM20.3 326.9h0.7v1.6h-0.7zM31.8 326.9h0.7v1.6h-0.7zM24.1 328.8h0.7v1.6h-0.7zM7.8 330.7h1.6v1.6h-1.6zM7.8 332.6h0.7v1.6h-0.7zM20.3 334.5h0.7v1.6h-0.7zM28.0 334.5h0.7v1.6h-0.7zM24.1 336.4h0.7v1.6h-0.7zM39.5 336.4h0.7v1.6h-0.7zM24.1 338.3h0.7v1.6h-0.7zM58.7 338.3h0.7v1.6h-0.7zM26.0 340.2h0.7v1.6h-0.7zM31.8 340.2h0.7v1.6h-0.7zM18.4 342.1h0.7v1.6h-0.7zM29.9 342.1h0.7v1.6h-0.7zM17.4 344.0h0.7v1.6h-0.7zM28.9 344.0h0.7v1.6h-0.7zM18.4 345.9h0.7v1.6h-0.7zM42.4 345.9h0.7v1.6h-0.7zM21.2 347.8h0.7v1.6h-0.7zM39.5 347.8h0.7v1.6h-0.7zM20.3 349.7h0.7v1.6h-0.7zM63.5 349.7h0.7v1.6h-0.7zM24.1 351.6h0.7v1.6h-0.7zM15.5 353.5h0.7v1.6h-0.7zM18.4 353.5h0.7v1.6h-0.7zM18.4 355.4h0.7v1.6h-0.7zM20.3 355.4h0.7v1.6h-0.7zM11.6 359.2h1.6v1.6h-1.6zM24.1 361.1h0.7v1.6h-0.7zM7.8 363.0h1.6v1.6h-1.6zM7.8 364.9h0.7v1.6h-0.7zM20.3 366.8h0.7v1.6h-0.7zM28.0 366.8h0.7v1.6h-0.7zM24.1 368.7h0.7v1.6h-0.7zM48.1 368.7h0.7v1.6h-0.7zM24.1 370.6h0.7v1.6h-0.7zM58.7 370.6h0.7v1.6h-0.7zM26.0 372.5h0.7v1.6h-0.7zM33.7 372.5h0.7v1.6h-0.7zM18.4 374.4h0.7v1.6h-0.7zM29.9 374.4h0.7v1.6h-0.7zM17.4 376.3h0.7v1.6h-0.7zM28.9 376.3h0.7v1.6h-0.7zM18.4 378.2h0.7v1.6h-0.7zM31.8 378.2h0.7v1.6h-0.7zM21.2 380.1h0.7v1.6h-0.7zM49.1 380.1h0.7v1.6h-0.7zM20.3 382.0h0.7v1.6h-0.7zM50.0 382.0h0.7v1.6h-0.7zM24.1 383.9h0.7v1.6h-0.7zM26.0 385.8h0.7v1.6h-0.7zM28.9 385.8h0.7v1.6h-0.7zM15.5 387.7h0.7v1.6h-0.7zM18.4 387.7h0.7v1.6h-0.7zM18.4 389.6h0.7v1.6h-0.7zM20.3 389.6h0.7v1.6h-0.7zM11.6 393.4h1.6v1.6h-1.6zM24.1 395.3h0.7v1.6h-0.7zM7.8 397.2h1.6v1.6h-1.6zM7.8 399.1h0.7v1.6h-0.7zM20.3 401.0h0.7v1.6h-0.7zM28.0 401.0h0.7v1.6h-0.7zM24.1 402.9h0.7v1.6h-0.7zM46.2 402.9h0.7v1.6h-0.7zM24.1 404.8h0.7v1.6h-0.7zM58.7 404.8h0.7v1.6h-0.7zM26.0 406.7h0.7v1.6h-0.7zM33.7 406.7h0.7v1.6h-0.7zM18.4 408.6h0.7v1.6h-0.7zM29.9 408.6h0.7v1.6h-0.7zM17.4 410.5h0.7v1.6h-0.7zM28.9 410.5h0.7v1.6h-0.7zM18.4 412.4h0.7v1.6h-0.7zM29.9 412.4h0.7v1.6h-0.7zM21.2 414.3h0.7v1.6h-0.7zM48.1 414.3h0.7v1.6h-0.7zM20.3 416.2h0.7v1.6h-0.7zM47.2 416.2h0.7v1.6h-0.7zM24.1 418.1h0.7v1.6h-0.7zM26.0 420.0h0.7v1.6h-0.7zM28.9 420.0h0.7v1.6h-0.7zM22.2 421.9h0.7v1.6h-0.7zM25.1 421.9h0.7v1.6h-0.7zM23.2 423.8h0.7v1.6h-0.7zM26.0 423.8h0.7v1.6h-0.7zM15.5 425.7h0.7v1.6h-0.7zM18.4 425.7h0.7v1.6h-0.7zM24.1 427.6h0.7v1.6h-0.7zM7.8 429.5h1.6v1.6h-1.6zM7.8 431.4h0.7v1.6h-0.7zM20.3 433.3h0.7v1.6h-0.7zM28.0 433.3h0.7v1.6h-0.7zM24.1 435.2h0.7v1.6h-0.7zM43.3 435.2h0.7v1.6h-0.7zM24.1 437.1h0.7v1.6h-0.7zM58.7 437.1h0.7v1.6h-0.7zM26.0 439.0h0.7v1.6h-0.7zM33.7 439.0h0.7v1.6h-0.7zM18.4 440.9h0.7v1.6h-0.7zM29.9 440.9h0.7v1.6h-0.7zM17.4 442.8h0.7v1.6h-0.7zM28.9 442.8h0.7v1.6h-0.7zM18.4 444.7h0.7v1.6h-0.7zM44.3 444.7h0.7v1.6h-0.7zM21.2 446.6h0.7v1.6h-0.7zM34.7 446.6h0.7v1.6h-0.7zM24.1 448.5h0.7v1.6h-0.7zM26.0 450.4h0.7v1.6h-0.7zM28.9 450.4h0.7v1.6h-0.7zM22.2 452.3h0.7v1.6h-0.7zM25.1 452.3h0.7v1.6h-0.7zM15.5 454.2h0.7v1.6h-0.7zM18.4 454.2h0.7v1.6h-0.7zM18.4 456.1h0.7v1.6h-0.7zM20.3 456.1h0.7v1.6h-0.7zM11.6 459.9h1.6v1.6h-1.6zM24.1 461.8h0.7v1.6h-0.7zM7.8 463.7h1.6v1.6h-1.6zM7.8 465.6h0.7v1.6h-0.7zM20.3 467.5h0.7v1.6h-0.7zM28.0 467.5h0.7v1.6h-0.7zM24.1 469.4h0.7v1.6h-0.7zM43.3 469.4h0.7v1.6h-0.7zM24.1 471.3h0.7v1.6h-0.7zM58.7 471.3h0.7v1.6h-0.7zM26.0 473.2h0.7v1.6h-0.7zM31.8 473.2h0.7v1.6h-0.7zM18.4 475.1h0.7v1.6h-0.7zM29.9 475.1h0.7v1.6h-0.7zM17.4 477.0h0.7v1.6h-0.7zM28.9 477.0h0.7v1.6h-0.7zM18.4 478.9h0.7v1.6h-0.7zM27.0 478.9h0.7v1.6h-0.7zM24.1 480.8h0.7v1.6h-0.7zM26.0 482.7h0.7v1.6h-0.7zM28.9 482.7h0.7v1.6h-0.7zM22.2 484.6h0.7v1.6h-0.7zM25.1 484.6h0.7v1.6h-0.7zM18.4 486.5h0.7v1.6h-0.7zM20.3 486.5h0.7v1.6h-0.7zM11.6 490.3h1.6v1.6h-1.6zM24.1 492.2h0.7v1.6h-0.7zM7.8 494.1h1.6v1.6h-1.6zM7.8 496.0h0.7v1.6h-0.7zM20.3 497.9h0.7v1.6h-0.7zM28.0 497.9h0.7v1.6h-0.7zM24.1 499.8h0.7v1.6h-0.7zM49.1 499.8h0.7v1.6h-0.7zM24.1 501.7h0.7v1.6h-0.7zM58.7 501.7h0.7v1.6h-0.7zM26.0 503.6h0.7v1.6h-0.7zM32.8 503.6h0.7v1.6h-0.7zM18.4 505.5h0.7v1.6h-0.7zM29.9 505.5h0.7v1.6h-0.7zM17.4 507.4h0.7v1.6h-0.7zM28.9 507.4h0.7v1.6h-0.7zM18.4 509.3h0.7v1.6h-0.7zM47.2 509.3h0.7v1.6h-0.7zM24.1 511.2h0.7v1.6h-0.7zM23.2 513.1h0.7v1.6h-0.7zM26.0 513.1h0.7v1.6h-0.7zM15.5 515.0h0.7v1.6h-0.7zM18.4 515.0h0.7v1.6h-0.7zM24.1 516.9h0.7v1.6h-0.7zM7.8 518.8h1.6v1.6h-1.6zM7.8 560.6h0.7v1.6h-0.7zM20.3 562.5h0.7v1.6h-0.7zM28.0 562.5h0.7v1.6h-0.7zM24.1 564.4h0.7v1.6h-0.7zM44.3 564.4h0.7v1.6h-0.7zM24.1 566.3h0.7v1.6h-0.7zM58.7 566.3h0.7v1.6h-0.7zM26.0 568.2h0.7v1.6h-0.7zM32.8 568.2h0.7v1.6h-0.7zM18.4 570.1h0.7v1.6h-0.7zM29.9 570.1h0.7v1.6h-0.7zM17.4 572.0h0.7v1.6h-0.7zM28.9 572.0h0.7v1.6h-0.7zM18.4 573.9h0.7v1.6h-0.7zM29.9 573.9h0.7v1.6h-0.7zM24.1 575.8h0.7v1.6h-0.7zM24.1 577.8h0.7v1.6h-0.7zM7.8 579.6h1.6v1.6h-1.6zM7.8 581.5h0.7v1.6h-0.7zM20.3 583.4h0.7v1.6h-0.7zM28.0 583.4h0.7v1.6h-0.7zM24.1 585.3h0.7v1.6h-0.7zM36.6 585.3h0.7v1.6h-0.7zM24.1 587.2h0.7v1.6h-0.7zM58.7 587.2h0.7v1.6h-0.7zM26.0 589.1h0.7v1.6h-0.7zM33.7 589.1h0.7v1.6h-0.7zM18.4 591.0h0.7v1.6h-0.7zM29.9 591.0h0.7v1.6h-0.7zM17.4 592.9h0.7v1.6h-0.7zM28.9 592.9h0.7v1.6h-0.7zM18.4 594.8h0.7v1.6h-0.7zM47.2 594.8h0.7v1.6h-0.7zM18.4 596.8h0.7v1.6h-0.7zM20.3 596.8h0.7v1.6h-0.7zM11.6 600.5h1.6v1.6h-1.6zM24.1 602.4h0.7v1.6h-0.7zM7.8 604.3h1.6v1.6h-1.6zM7.8 640.4h0.7v1.6h-0.7zM20.3 642.3h0.7v1.6h-0.7zM28.0 642.3h0.7v1.6h-0.7zM24.1 644.2h0.7v1.6h-0.7zM44.3 644.2h0.7v1.6h-0.7zM24.1 646.1h0.7v1.6h-0.7zM58.7 646.1h0.7v1.6h-0.7zM26.0 648.0h0.7v1.6h-0.7zM31.8 648.0h0.7v1.6h-0.7zM18.4 649.9h0.7v1.6h-0.7zM29.9 649.9h0.7v1.6h-0.7zM17.4 651.8h0.7v1.6h-0.7zM28.9 651.8h0.7v1.6h-0.7zM18.4 653.8h0.7v1.6h-0.7zM27.0 653.8h0.7v1.6h-0.7zM21.2 655.6h0.7v1.6h-0.7zM52.0 655.6h0.7v1.6h-0.7zM24.1 657.5h0.7v1.6h-0.7zM26.0 659.4h0.7v1.6h-0.7zM28.9 659.4h0.7v1.6h-0.7zM18.4 661.3h0.7v1.6h-0.7zM20.3 661.3h0.7v1.6h-0.7zM11.6 665.1h1.6v1.6h-1.6zM24.1 667.0h0.7v1.6h-0.7zM7.8 668.9h1.6v1.6h-1.6zM7.8 670.8h0.7v1.6h-0.7zM20.3 672.8h0.7v1.6h-0.7zM28.0 672.8h0.7v1.6h-0.7zM24.1 674.6h0.7v1.6h-0.7zM41.4 674.6h0.7v1.6h-0.7zM24.1 676.5h0.7v1.6h-0.7zM58.7 676.5h0.7v1.6h-0.7zM26.0 678.4h0.7v1.6h-0.7zM33.7 678.4h0.7v1.6h-0.7zM18.4 680.3h0.7v1.6h-0.7zM29.9 680.3h0.7v1.6h-0.7zM17.4 682.2h0.7v1.6h-0.7zM28.9 682.2h0.7v1.6h-0.7zM18.4 684.1h0.7v1.6h-0.7zM48.1 684.1h0.7v1.6h-0.7zM21.2 686.0h0.7v1.6h-0.7zM38.5 686.0h0.7v1.6h-0.7zM20.3 687.9h0.7v1.6h-0.7zM43.3 687.9h0.7v1.6h-0.7zM24.1 689.8h0.7v1.6h-0.7zM26.0 691.8h0.7v1.6h-0.7zM28.9 691.8h0.7v1.6h-0.7zM22.2 693.6h0.7v1.6h-0.7zM25.1 693.6h0.7v1.6h-0.7zM23.2 695.5h0.7v1.6h-0.7zM26.0 695.5h0.7v1.6h-0.7zM15.5 697.4h0.7v1.6h-0.7zM18.4 697.4h0.7v1.6h-0.7zM18.4 699.3h0.7v1.6h-0.7zM40.4 699.3h0.7v1.6h-0.7zM18.4 701.2h0.7v1.6h-0.7zM20.3 701.2h0.7v1.6h-0.7zM11.6 705.0h1.6v1.6h-1.6zM24.1 706.9h0.7v1.6h-0.7zM7.8 708.8h1.6v1.6h-1.6zM7.8 710.8h0.7v1.6h-0.7zM20.3 712.6h0.7v1.6h-0.7zM28.0 712.6h0.7v1.6h-0.7zM24.1 714.5h0.7v1.6h-0.7zM32.8 714.5h0.7v1.6h-0.7zM24.1 716.4h0.7v1.6h-0.7zM58.7 716.4h0.7v1.6h-0.7zM26.0 718.3h0.7v1.6h-0.7zM31.8 718.3h0.7v1.6h-0.7zM18.4 720.2h0.7v1.6h-0.7zM29.9 720.2h0.7v1.6h-0.7zM17.4 722.1h0.7v1.6h-0.7zM28.9 722.1h0.7v1.6h-0.7zM18.4 724.0h0.7v1.6h-0.7zM47.2 724.0h0.7v1.6h-0.7zM21.2 725.9h0.7v1.6h-0.7zM43.3 725.9h0.7v1.6h-0.7zM20.3 727.8h0.7v1.6h-0.7zM52.9 727.8h0.7v1.6h-0.7zM24.1 729.7h0.7v1.6h-0.7zM26.0 731.6h0.7v1.6h-0.7zM28.9 731.6h0.7v1.6h-0.7zM22.2 733.5h0.7v1.6h-0.7zM25.1 733.5h0.7v1.6h-0.7zM23.2 735.4h0.7v1.6h-0.7zM26.0 735.4h0.7v1.6h-0.7zM15.5 737.3h0.7v1.6h-0.7zM18.4 737.3h0.7v1.6h-0.7zM18.4 739.2h0.7v1.6h-0.7zM41.4 739.2h0.7v1.6h-0.7zM21.2 741.1h0.7v1.6h-0.7zM29.9 741.1h0.7v1.6h-0.7zM20.3 743.0h0.7v1.6h-0.7zM38.5 743.0h0.7v1.6h-0.7zM22.2 744.9h0.7v1.6h-0.7zM25.1 744.9h0.7v1.6h-0.7zM24.1 746.8h0.7v1.6h-0.7zM7.8 748.7h1.6v1.6h-1.6zM7.8 750.6h0.7v1.6h-0.7zM20.3 752.5h0.7v1.6h-0.7zM28.0 752.5h0.7v1.6h-0.7zM24.1 754.4h0.7v1.6h-0.7zM39.5 754.4h0.7v1.6h-0.7zM24.1 756.3h0.7v1.6h-0.7zM58.7 756.3h0.7v1.6h-0.7zM26.0 758.2h0.7v1.6h-0.7zM33.7 758.2h0.7v1.6h-0.7zM18.4 760.1h0.7v1.6h-0.7zM29.9 760.1h0.7v1.6h-0.7zM17.4 762.0h0.7v1.6h-0.7zM28.9 762.0h0.7v1.6h-0.7zM18.4 763.9h0.7v1.6h-0.7zM47.2 763.9h0.7v1.6h-0.7zM24.1 765.8h0.7v1.6h-0.7zM26.0 767.7h0.7v1.6h-0.7zM28.9 767.7h0.7v1.6h-0.7zM22.2 769.6h0.7v1.6h-0.7zM25.1 769.6h0.7v1.6h-0.7zM15.5 771.5h0.7v1.6h-0.7zM18.4 771.5h0.7v1.6h-0.7zM24.1 773.4h0.7v1.6h-0.7zM7.8 775.3h1.6v1.6h-1.6zM7.8 777.2h0.7v1.6h-0.7zM20.3 779.1h0.7v1.6h-0.7zM28.0 779.1h0.7v1.6h-0.7zM24.1 781.0h0.7v1.6h-0.7zM39.5 781.0h0.7v1.6h-0.7zM24.1 782.9h0.7v1.6h-0.7zM58.7 782.9h0.7v1.6h-0.7zM26.0 784.8h0.7v1.6h-0.7zM31.8 784.8h0.7v1.6h-0.7zM18.4 786.7h0.7v1.6h-0.7zM29.9 786.7h0.7v1.6h-0.7zM17.4 788.6h0.7v1.6h-0.7zM28.9 788.6h0.7v1.6h-0.7zM18.4 790.5h0.7v1.6h-0.7zM46.2 790.5h0.7v1.6h-0.7zM21.2 792.4h0.7v1.6h-0.7zM51.0 792.4h0.7v1.6h-0.7zM24.1 794.3h0.7v1.6h-0.7zM26.0 796.2h0.7v1.6h-0.7zM28.9 796.2h0.7v1.6h-0.7zM23.2 798.1h0.7v1.6h-0.7zM26.0 798.1h0.7v1.6h-0.7zM15.5 800.0h0.7v1.6h-0.7zM18.4 800.0h0.7v1.6h-0.7zM24.1 801.9h0.7v1.6h-0.7zM7.8 803.8h1.6v1.6h-1.6zM7.8 838.0h0.7v1.6h-0.7zM20.3 839.9h0.7v1.6h-0.7zM28.0 839.9h0.7v1.6h-0.7zM24.1 841.8h0.7v1.6h-0.7zM38.5 841.8h0.7v1.6h-0.7zM24.1 843.7h0.7v1.6h-0.7zM58.7 843.7h0.7v1.6h-0.7zM26.0 845.6h0.7v1.6h-0.7zM32.8 845.6h0.7v1.6h-0.7zM18.4 847.5h0.7v1.6h-0.7zM29.9 847.5h0.7v1.6h-0.7zM17.4 849.4h0.7v1.6h-0.7zM28.9 849.4h0.7v1.6h-0.7zM18.4 851.3h0.7v1.6h-0.7zM37.6 851.3h0.7v1.6h-0.7zM21.2 853.2h0.7v1.6h-0.7zM52.0 853.2h0.7v1.6h-0.7zM20.3 855.1h0.7v1.6h-0.7zM43.3 855.1h0.7v1.6h-0.7zM24.1 857.0h0.7v1.6h-0.7zM26.0 858.9h0.7v1.6h-0.7zM28.9 858.9h0.7v1.6h-0.7zM22.2 860.8h0.7v1.6h-0.7zM25.1 860.8h0.7v1.6h-0.7zM23.2 862.7h0.7v1.6h-0.7zM26.0 862.7h0.7v1.6h-0.7zM24.1 864.6h0.7v1.6h-0.7zM7.8 866.5h1.6v1.6h-1.6zM7.8 868.4h0.7v1.6h-0.7zM20.3 870.3h0.7v1.6h-0.7zM28.0 870.3h0.7v1.6h-0.7zM24.1 872.2h0.7v1.6h-0.7zM32.8 872.2h0.7v1.6h-0.7zM24.1 874.1h0.7v1.6h-0.7zM58.7 874.1h0.7v1.6h-0.7zM26.0 876.0h0.7v1.6h-0.7zM31.8 876.0h0.7v1.6h-0.7zM18.4 877.9h0.7v1.6h-0.7zM29.9 877.9h0.7v1.6h-0.7zM17.4 879.8h0.7v1.6h-0.7zM28.9 879.8h0.7v1.6h-0.7zM18.4 881.7h0.7v1.6h-0.7zM41.4 881.7h0.7v1.6h-0.7zM21.2 883.6h0.7v1.6h-0.7zM50.0 883.6h0.7v1.6h-0.7zM20.3 885.5h0.7v1.6h-0.7zM67.3 885.5h0.7v1.6h-0.7zM24.1 887.4h0.7v1.6h-0.7zM26.0 889.3h0.7v1.6h-0.7zM28.9 889.3h0.7v1.6h-0.7zM22.2 891.2h0.7v1.6h-0.7zM25.1 891.2h0.7v1.6h-0.7zM23.2 893.1h0.7v1.6h-0.7zM26.0 893.1h0.7v1.6h-0.7zM15.5 895.0h0.7v1.6h-0.7zM18.4 895.0h0.7v1.6h-0.7zM18.4 896.9h0.7v1.6h-0.7zM44.3 896.9h0.7v1.6h-0.7zM21.2 898.8h0.7v1.6h-0.7zM31.8 898.8h0.7v1.6h-0.7z"/><path fill="rgba(9,134,88,0.55)" d="M22.2 7.8h5.5v1.6h-5.5zM20.3 15.3h9.3v1.6h-9.3zM19.3 17.2h9.3v1.6h-9.3zM26.0 21.0h5.5v1.6h-5.5zM22.2 26.7h5.5v1.6h-5.5zM20.3 34.3h9.3v1.6h-9.3zM19.3 36.2h9.3v1.6h-9.3zM22.2 45.7h5.5v1.6h-5.5zM20.3 53.3h9.3v1.6h-9.3zM19.3 55.2h9.3v1.6h-9.3zM26.0 59.0h5.5v1.6h-5.5zM22.2 64.8h5.5v1.6h-5.5zM20.3 72.4h9.3v1.6h-9.3zM19.3 74.2h9.3v1.6h-9.3zM25.1 80.0h0.7v1.6h-0.7zM17.4 81.9h0.7v1.6h-0.7zM26.0 83.8h5.5v1.6h-5.5zM22.2 89.5h5.5v1.6h-5.5zM20.3 97.0h9.3v1.6h-9.3zM19.3 99.0h9.3v1.6h-9.3zM26.0 102.8h5.5v1.6h-5.5zM22.2 108.5h5.5v1.6h-5.5zM26.0 116.0h5.5v1.6h-5.5zM22.2 154.1h5.5v1.6h-5.5zM20.3 161.7h9.3v1.6h-9.3zM19.3 163.6h9.3v1.6h-9.3zM28.0 173.1h0.7v1.6h-0.7zM24.1 174.9h0.7v1.6h-0.7zM25.1 176.8h0.7v1.6h-0.7zM17.4 178.8h0.7v1.6h-0.7zM24.1 186.3h0.7v1.6h-0.7zM25.1 188.2h0.7v1.6h-0.7zM26.0 190.2h5.5v1.6h-5.5zM22.2 195.8h5.5v1.6h-5.5zM20.3 203.4h9.3v1.6h-9.3zM19.3 205.3h9.3v1.6h-9.3zM24.1 212.9h0.7v1.6h-0.7zM17.4 214.8h0.7v1.6h-0.7zM26.0 216.8h5.5v1.6h-5.5zM22.2 222.4h5.5v1.6h-5.5zM20.3 230.0h9.3v1.6h-9.3zM19.3 231.9h9.3v1.6h-9.3zM28.0 239.5h0.7v1.6h-0.7zM24.1 241.4h0.7v1.6h-0.7zM25.1 243.3h0.7v1.6h-0.7zM17.4 245.2h0.7v1.6h-0.7zM15.5 249.0h1.6v1.6h-1.6zM26.0 252.8h5.5v1.6h-5.5zM22.2 258.5h5.5v1.6h-5.5zM20.3 266.1h9.3v1.6h-9.3zM19.3 268.0h9.3v1.6h-9.3zM28.0 277.5h0.7v1.6h-0.7zM24.1 279.4h0.7v1.6h-0.7zM25.1 281.3h0.7v1.6h-0.7zM17.4 283.2h0.7v1.6h-0.7zM15.5 287.0h1.6v1.6h-1.6zM26.0 290.8h5.5v1.6h-5.5zM22.2 296.5h5.5v1.6h-5.5zM20.3 304.1h9.3v1.6h-9.3zM19.3 306.0h9.3v1.6h-9.3zM28.0 315.5h0.7v1.6h-0.7zM24.1 317.4h0.7v1.6h-0.7zM25.1 319.3h0.7v1.6h-0.7zM17.4 321.2h0.7v1.6h-0.7zM26.0 328.8h5.5v1.6h-5.5zM22.2 334.5h5.5v1.6h-5.5zM20.3 342.1h9.3v1.6h-9.3zM19.3 344.0h9.3v1.6h-9.3zM17.4 353.5h0.7v1.6h-0.7zM15.5 357.3h1.6v1.6h-1.6zM26.0 361.1h5.5v1.6h-5.5zM22.2 366.8h5.5v1.6h-5.5zM20.3 374.4h9.3v1.6h-9.3zM19.3 376.3h9.3v1.6h-9.3zM28.0 385.8h0.7v1.6h-0.7zM17.4 387.7h0.7v1.6h-0.7zM15.5 391.5h1.6v1.6h-1.6zM26.0 395.3h5.5v1.6h-5.5zM22.2 401.0h5.5v1.6h-5.5zM20.3 408.6h9.3v1.6h-9.3zM19.3 410.5h9.3v1.6h-9.3zM28.0 420.0h0.7v1.6h-0.7zM24.1 421.9h0.7v1.6h-0.7zM25.1 423.8h0.7v1.6h-0.7zM17.4 425.7h0.7v1.6h-0.7zM26.0 427.6h5.5v1.6h-5.5zM22.2 433.3h5.5v1.6h-5.5zM20.3 440.9h9.3v1.6h-9.3zM19.3 442.8h9.3v1.6h-9.3zM28.0 450.4h0.7v1.6h-0.7zM24.1 452.3h0.7v1.6h-0.7zM17.4 454.2h0.7v1.6h-0.7zM15.5 458.0h1.6v1.6h-1.6zM26.0 461.8h5.5v1.6h-5.5zM22.2 467.5h5.5v1.6h-5.5zM20.3 475.1h9.3v1.6h-9.3zM19.3 477.0h9.3v1.6h-9.3zM28.0 482.7h0.7v1.6h-0.7zM24.1 484.6h0.7v1.6h-0.7zM15.5 488.4h1.6v1.6h-1.6zM26.0 492.2h5.5v1.6h-5.5zM22.2 497.9h5.5v1.6h-5.5zM20.3 505.5h9.3v1.6h-9.3zM19.3 507.4h9.3v1.6h-9.3zM25.1 513.1h0.7v1.6h-0.7zM17.4 515.0h0.7v1.6h-0.7zM26.0 516.9h5.5v1.6h-5.5zM22.2 562.5h5.5v1.6h-5.5zM20.3 570.1h9.3v1.6h-9.3zM19.3 572.0h9.3v1.6h-9.3zM26.0 577.8h5.5v1.6h-5.5zM22.2 583.4h5.5v1.6h-5.5zM20.3 591.0h9.3v1.6h-9.3zM19.3 592.9h9.3v1.6h-9.3zM15.5 598.6h1.6v1.6h-1.6zM26.0 602.4h5.5v1.6h-5.5zM22.2 642.3h5.5v1.6h-5.5zM20.3 649.9h9.3v1.6h-9.3zM19.3 651.8h9.3v1.6h-9.3zM28.0 659.4h0.7v1.6h-0.7zM15.5 663.2h1.6v1.6h-1.6zM26.0 667.0h5.5v1.6h-5.5zM22.2 672.8h5.5v1.6h-5.5zM20.3 680.3h9.3v1.6h-9.3zM19.3 682.2h9.3v1.6h-9.3zM28.0 691.8h0.7v1.6h-0.7zM24.1 693.6h0.7v1.6h-0.7zM25.1 695.5h0.7v1.6h-0.7zM17.4 697.4h0.7v1.6h-0.7zM15.5 703.1h1.6v1.6h-1.6zM26.0 706.9h5.5v1.6h-5.5zM22.2 712.6h5.5v1.6h-5.5zM20.3 720.2h9.3v1.6h-9.3zM19.3 722.1h9.3v1.6h-9.3zM28.0 731.6h0.7v1.6h-0.7zM24.1 733.5h0.7v1.6h-0.7zM25.1 735.4h0.7v1.6h-0.7zM17.4 737.3h0.7v1.6h-0.7zM24.1 744.9h0.7v1.6h-0.7zM26.0 746.8h5.5v1.6h-5.5zM22.2 752.5h5.5v1.6h-5.5zM20.3 760.1h9.3v1.6h-9.3zM19.3 762.0h9.3v1.6h-9.3zM28.0 767.7h0.7v1.6h-0.7zM24.1 769.6h0.7v1.6h-0.7zM17.4 771.5h0.7v1.6h-0.7zM26.0 773.4h5.5v1.6h-5.5zM22.2 779.1h5.5v1.6h-5.5zM20.3 786.7h9.3v1.6h-9.3zM19.3 788.6h9.3v1.6h-9.3zM28.0 796.2h0.7v1.6h-0.7zM25.1 798.1h0.7v1.6h-0.7zM17.4 800.0h0.7v1.6h-0.7zM26.0 801.9h5.5v1.6h-5.5zM22.2 839.9h5.5v1.6h-5.5zM20.3 847.5h9.3v1.6h-9.3zM19.3 849.4h9.3v1.6h-9.3zM28.0 858.9h0.7v1.6h-0.7zM24.1 860.8h0.7v1.6h-0.7zM25.1 862.7h0.7v1.6h-0.7zM26.0 864.6h5.5v1.6h-5.5zM22.2 870.3h5.5v1.6h-5.5zM20.3 877.9h9.3v1.6h-9.3zM19.3 879.8h9.3v1.6h-9.3zM28.0 889.3h0.7v1.6h-0.7zM24.1 891.2h0.7v1.6h-0.7zM25.1 893.1h0.7v1.6h-0.7zM17.4 895.0h0.7v1.6h-0.7z"/><path fill="rgba(4,81,165,0.5)" d="M26.0 9.7h5.5v1.6h-5.5zM32.8 9.7h8.3v1.6h-8.3zM26.0 11.5h32.3v1.6h-32.3zM28.0 13.4h3.5v1.6h-3.5zM20.3 19.1h12.2v1.6h-12.2zM33.7 19.1h2.6v1.6h-2.6zM37.6 19.1h11.2v1.6h-11.2zM26.0 28.6h3.5v1.6h-3.5zM30.8 28.6h4.5v1.6h-4.5zM36.6 28.6h3.5v1.6h-3.5zM41.4 28.6h5.5v1.6h-5.5zM48.1 28.6h2.6v1.6h-2.6zM26.0 30.5h32.3v1.6h-32.3zM28.0 32.4h4.5v1.6h-4.5zM20.3 38.1h3.5v1.6h-3.5zM25.1 38.1h4.5v1.6h-4.5zM30.8 38.1h2.6v1.6h-2.6zM26.0 40.0h5.5v1.6h-5.5zM32.8 40.0h1.6v1.6h-1.6zM35.6 40.0h10.3v1.6h-10.3zM47.2 40.0h1.6v1.6h-1.6zM50.0 40.0h5.5v1.6h-5.5zM56.8 40.0h8.3v1.6h-8.3zM66.4 40.0h2.6v1.6h-2.6zM70.2 40.0h1.6v1.6h-1.6zM73.1 40.0h2.6v1.6h-2.6zM76.9 40.0h2.6v1.6h-2.6zM80.8 40.0h2.2v1.6h-2.2zM26.0 47.6h4.5v1.6h-4.5zM26.0 49.5h32.3v1.6h-32.3zM28.0 51.4h3.5v1.6h-3.5zM20.3 57.1h12.2v1.6h-12.2zM33.7 57.1h2.6v1.6h-2.6zM37.6 57.1h11.2v1.6h-11.2zM26.0 66.7h4.5v1.6h-4.5zM31.8 66.7h1.6v1.6h-1.6zM34.7 66.7h4.5v1.6h-4.5zM40.4 66.7h0.7v1.6h-0.7zM42.4 66.7h3.5v1.6h-3.5zM26.0 68.5h32.3v1.6h-32.3zM28.0 70.5h4.5v1.6h-4.5zM20.3 76.2h4.5v1.6h-4.5zM26.0 76.2h7.4v1.6h-7.4zM26.0 78.0h7.4v1.6h-7.4zM34.7 78.0h2.6v1.6h-2.6zM38.5 78.0h2.6v1.6h-2.6zM42.4 78.0h3.5v1.6h-3.5zM47.2 78.0h1.6v1.6h-1.6zM50.0 78.0h4.5v1.6h-4.5zM55.8 78.0h0.7v1.6h-0.7zM57.7 78.0h2.6v1.6h-2.6zM61.6 78.0h2.6v1.6h-2.6zM65.4 78.0h10.3v1.6h-10.3zM76.9 78.0h6.1v1.6h-6.1zM26.0 91.3h6.4v1.6h-6.4zM26.0 93.2h32.3v1.6h-32.3zM28.0 95.2h3.5v1.6h-3.5zM20.3 100.8h5.5v1.6h-5.5zM27.0 100.8h3.5v1.6h-3.5zM31.8 100.8h6.4v1.6h-6.4zM26.0 110.3h6.4v1.6h-6.4zM33.7 110.3h6.4v1.6h-6.4zM26.0 112.2h32.3v1.6h-32.3zM28.0 114.2h4.5v1.6h-4.5zM26.0 155.9h8.3v1.6h-8.3zM35.6 155.9h3.5v1.6h-3.5zM40.4 155.9h1.6v1.6h-1.6zM43.3 155.9h3.5v1.6h-3.5zM26.0 157.8h32.3v1.6h-32.3zM28.0 159.8h4.5v1.6h-4.5zM20.3 165.4h5.5v1.6h-5.5zM27.0 165.4h9.3v1.6h-9.3zM23.2 167.3h4.5v1.6h-4.5zM28.9 167.3h6.4v1.6h-6.4zM36.6 167.3h2.6v1.6h-2.6zM40.4 167.3h2.6v1.6h-2.6zM22.2 169.2h4.5v1.6h-4.5zM28.0 169.2h1.6v1.6h-1.6zM30.8 169.2h1.6v1.6h-1.6zM33.7 169.2h3.5v1.6h-3.5zM38.5 169.2h4.5v1.6h-4.5zM44.3 169.2h6.4v1.6h-6.4zM52.0 169.2h3.5v1.6h-3.5zM56.8 169.2h1.6v1.6h-1.6zM26.0 171.2h5.5v1.6h-5.5zM32.8 171.2h2.6v1.6h-2.6zM36.6 171.2h4.5v1.6h-4.5zM42.4 171.2h2.6v1.6h-2.6zM46.2 171.2h6.4v1.6h-6.4zM53.9 171.2h3.5v1.6h-3.5zM58.7 171.2h1.6v1.6h-1.6zM61.6 171.2h5.5v1.6h-5.5zM68.3 171.2h1.6v1.6h-1.6zM71.2 171.2h4.5v1.6h-4.5zM76.9 171.2h5.5v1.6h-5.5zM20.3 180.7h4.5v1.6h-4.5zM26.0 180.7h4.5v1.6h-4.5zM31.8 180.7h5.5v1.6h-5.5zM23.2 182.5h10.3v1.6h-10.3zM22.2 184.4h4.5v1.6h-4.5zM28.0 184.4h5.5v1.6h-5.5zM34.7 184.4h3.5v1.6h-3.5zM26.0 197.8h5.5v1.6h-5.5zM32.8 197.8h1.6v1.6h-1.6zM35.6 197.8h1.6v1.6h-1.6zM38.5 197.8h1.6v1.6h-1.6zM41.4 197.8h3.5v1.6h-3.5zM26.0 199.7h32.3v1.6h-32.3zM28.0 201.5h5.5v1.6h-5.5zM20.3 207.2h7.4v1.6h-7.4zM28.9 207.2h2.6v1.6h-2.6zM32.8 207.2h1.6v1.6h-1.6zM23.2 209.2h2.6v1.6h-2.6zM27.0 209.2h3.5v1.6h-3.5zM31.8 209.2h3.5v1.6h-3.5zM36.6 209.2h2.6v1.6h-2.6zM26.0 211.0h4.5v1.6h-4.5zM31.8 211.0h1.6v1.6h-1.6zM34.7 211.0h1.6v1.6h-1.6zM37.6 211.0h11.2v1.6h-11.2zM50.0 211.0h4.5v1.6h-4.5zM55.8 211.0h6.4v1.6h-6.4zM63.5 211.0h1.6v1.6h-1.6zM66.4 211.0h3.5v1.6h-3.5zM71.2 211.0h8.3v1.6h-8.3zM80.8 211.0h2.2v1.6h-2.2zM26.0 224.3h3.5v1.6h-3.5zM30.8 224.3h8.3v1.6h-8.3zM40.4 224.3h1.6v1.6h-1.6zM26.0 226.2h32.3v1.6h-32.3zM28.0 228.2h5.5v1.6h-5.5zM20.3 233.8h2.6v1.6h-2.6zM24.1 233.8h5.5v1.6h-5.5zM23.2 235.8h4.5v1.6h-4.5zM28.9 235.8h2.6v1.6h-2.6zM32.8 235.8h3.5v1.6h-3.5zM37.6 235.8h2.6v1.6h-2.6zM41.4 235.8h1.6v1.6h-1.6zM44.3 235.8h2.6v1.6h-2.6zM48.1 235.8h5.5v1.6h-5.5zM26.0 237.7h5.5v1.6h-5.5zM32.8 237.7h1.6v1.6h-1.6zM35.6 237.7h2.6v1.6h-2.6zM39.5 237.7h2.6v1.6h-2.6zM43.3 237.7h1.6v1.6h-1.6zM46.2 237.7h1.6v1.6h-1.6zM49.1 237.7h2.6v1.6h-2.6zM52.9 237.7h1.6v1.6h-1.6zM55.8 237.7h2.6v1.6h-2.6zM59.6 237.7h11.2v1.6h-11.2zM72.1 237.7h1.6v1.6h-1.6zM75.0 237.7h4.5v1.6h-4.5zM80.8 237.7h2.2v1.6h-2.2zM26.0 260.4h3.5v1.6h-3.5zM30.8 260.4h12.2v1.6h-12.2zM26.0 262.3h32.3v1.6h-32.3zM28.0 264.2h4.5v1.6h-4.5zM20.3 269.9h3.5v1.6h-3.5zM25.1 269.9h1.6v1.6h-1.6zM28.0 269.9h7.4v1.6h-7.4zM36.6 269.9h1.6v1.6h-1.6zM39.5 269.9h4.5v1.6h-4.5zM45.2 269.9h2.6v1.6h-2.6zM23.2 271.8h2.6v1.6h-2.6zM27.0 271.8h4.5v1.6h-4.5zM32.8 271.8h2.6v1.6h-2.6zM36.6 271.8h1.6v1.6h-1.6zM22.2 273.7h4.5v1.6h-4.5zM28.0 273.7h2.6v1.6h-2.6zM31.8 273.7h8.3v1.6h-8.3zM41.4 273.7h2.6v1.6h-2.6zM45.2 273.7h2.6v1.6h-2.6zM49.1 273.7h1.6v1.6h-1.6zM52.0 273.7h3.5v1.6h-3.5zM56.8 273.7h2.6v1.6h-2.6zM26.0 275.6h7.4v1.6h-7.4zM34.7 275.6h1.6v1.6h-1.6zM37.6 275.6h2.6v1.6h-2.6zM41.4 275.6h1.6v1.6h-1.6zM44.3 275.6h2.6v1.6h-2.6zM48.1 275.6h2.6v1.6h-2.6zM52.0 275.6h4.5v1.6h-4.5zM57.7 275.6h6.4v1.6h-6.4zM65.4 275.6h2.6v1.6h-2.6zM69.2 275.6h2.6v1.6h-2.6zM73.1 275.6h1.6v1.6h-1.6zM76.0 275.6h4.5v1.6h-4.5zM81.7 275.6h1.3v1.6h-1.3zM26.0 298.4h4.5v1.6h-4.5zM31.8 298.4h8.3v1.6h-8.3zM41.4 298.4h9.3v1.6h-9.3zM26.0 300.3h32.3v1.6h-32.3zM28.0 302.2h5.5v1.6h-5.5zM20.3 307.9h4.5v1.6h-4.5zM26.0 307.9h1.6v1.6h-1.6zM28.9 307.9h4.5v1.6h-4.5zM34.7 307.9h1.6v1.6h-1.6zM37.6 307.9h1.6v1.6h-1.6zM40.4 307.9h1.6v1.6h-1.6zM23.2 309.8h4.5v1.6h-4.5zM28.9 309.8h7.4v1.6h-7.4zM37.6 309.8h3.5v1.6h-3.5zM22.2 311.7h5.5v1.6h-5.5zM28.9 311.7h3.5v1.6h-3.5zM33.7 311.7h2.6v1.6h-2.6zM37.6 311.7h6.4v1.6h-6.4zM45.2 311.7h2.6v1.6h-2.6zM49.1 311.7h4.5v1.6h-4.5zM54.8 311.7h7.4v1.6h-7.4zM26.0 313.6h3.5v1.6h-3.5zM30.8 313.6h1.6v1.6h-1.6zM33.7 313.6h1.6v1.6h-1.6zM36.6 313.6h1.6v1.6h-1.6zM39.5 313.6h5.5v1.6h-5.5zM46.2 313.6h11.2v1.6h-11.2zM58.7 313.6h1.6v1.6h-1.6zM61.6 313.6h2.6v1.6h-2.6zM65.4 313.6h4.5v1.6h-4.5zM71.2 313.6h5.5v1.6h-5.5zM77.9 313.6h4.5v1.6h-4.5zM20.3 323.1h12.2v1.6h-12.2zM23.2 325.0h3.5v1.6h-3.5zM28.0 325.0h2.6v1.6h-2.6zM31.8 325.0h5.5v1.6h-5.5zM22.2 326.9h2.6v1.6h-2.6zM26.0 326.9h5.5v1.6h-5.5zM26.0 336.4h3.5v1.6h-3.5zM30.8 336.4h1.6v1.6h-1.6zM33.7 336.4h5.5v1.6h-5.5zM26.0 338.3h32.3v1.6h-32.3zM28.0 340.2h3.5v1.6h-3.5zM20.3 345.9h9.3v1.6h-9.3zM30.8 345.9h6.4v1.6h-6.4zM38.5 345.9h3.5v1.6h-3.5zM23.2 347.8h3.5v1.6h-3.5zM28.0 347.8h1.6v1.6h-1.6zM30.8 347.8h2.6v1.6h-2.6zM34.7 347.8h4.5v1.6h-4.5zM22.2 349.7h3.5v1.6h-3.5zM27.0 349.7h4.5v1.6h-4.5zM32.8 349.7h2.6v1.6h-2.6zM36.6 349.7h4.5v1.6h-4.5zM42.4 349.7h8.3v1.6h-8.3zM52.0 349.7h2.6v1.6h-2.6zM55.8 349.7h7.4v1.6h-7.4zM26.0 351.6h5.5v1.6h-5.5zM32.8 351.6h8.3v1.6h-8.3zM42.4 351.6h5.5v1.6h-5.5zM49.1 351.6h1.6v1.6h-1.6zM52.0 351.6h6.4v1.6h-6.4zM59.6 351.6h2.6v1.6h-2.6zM63.5 351.6h10.3v1.6h-10.3zM75.0 351.6h2.6v1.6h-2.6zM78.8 351.6h4.2v1.6h-4.2zM26.0 368.7h7.4v1.6h-7.4zM34.7 368.7h1.6v1.6h-1.6zM37.6 368.7h2.6v1.6h-2.6zM41.4 368.7h6.4v1.6h-6.4zM26.0 370.6h32.3v1.6h-32.3zM28.0 372.5h2.6v1.6h-2.6zM31.8 372.5h1.6v1.6h-1.6zM20.3 378.2h11.2v1.6h-11.2zM23.2 380.1h2.6v1.6h-2.6zM27.0 380.1h7.4v1.6h-7.4zM35.6 380.1h3.5v1.6h-3.5zM40.4 380.1h8.3v1.6h-8.3zM22.2 382.0h9.3v1.6h-9.3zM32.8 382.0h1.6v1.6h-1.6zM35.6 382.0h10.3v1.6h-10.3zM47.2 382.0h2.6v1.6h-2.6zM26.0 383.9h4.5v1.6h-4.5zM31.8 383.9h3.5v1.6h-3.5zM36.6 383.9h4.5v1.6h-4.5zM42.4 383.9h4.5v1.6h-4.5zM48.1 383.9h6.4v1.6h-6.4zM55.8 383.9h1.6v1.6h-1.6zM58.7 383.9h1.6v1.6h-1.6zM61.6 383.9h2.6v1.6h-2.6zM65.4 383.9h3.5v1.6h-3.5zM70.2 383.9h11.2v1.6h-11.2zM82.7 383.9h0.3v1.6h-0.3zM26.0 402.9h3.5v1.6h-3.5zM30.8 402.9h1.6v1.6h-1.6zM33.7 402.9h2.6v1.6h-2.6zM37.6 402.9h8.3v1.6h-8.3zM26.0 404.8h32.3v1.6h-32.3zM28.0 406.7h5.5v1.6h-5.5zM20.3 412.4h3.5v1.6h-3.5zM25.1 412.4h1.6v1.6h-1.6zM28.0 412.4h1.6v1.6h-1.6zM23.2 414.3h7.4v1.6h-7.4zM31.8 414.3h2.6v1.6h-2.6zM35.6 414.3h2.6v1.6h-2.6zM39.5 414.3h4.5v1.6h-4.5zM45.2 414.3h2.6v1.6h-2.6zM22.2 416.2h3.5v1.6h-3.5zM27.0 416.2h1.6v1.6h-1.6zM29.9 416.2h8.3v1.6h-8.3zM39.5 416.2h7.4v1.6h-7.4zM26.0 418.1h12.2v1.6h-12.2zM39.5 418.1h5.5v1.6h-5.5zM46.2 418.1h1.6v1.6h-1.6zM49.1 418.1h3.5v1.6h-3.5zM53.9 418.1h8.3v1.6h-8.3zM63.5 418.1h2.6v1.6h-2.6zM67.3 418.1h3.5v1.6h-3.5zM72.1 418.1h1.6v1.6h-1.6zM75.0 418.1h1.6v1.6h-1.6zM77.9 418.1h2.6v1.6h-2.6zM81.7 418.1h1.3v1.6h-1.3zM26.0 435.2h3.5v1.6h-3.5zM30.8 435.2h4.5v1.6h-4.5zM36.6 435.2h3.5v1.6h-3.5zM41.4 435.2h1.6v1.6h-1.6zM26.0 437.1h32.3v1.6h-32.3zM28.0 439.0h2.6v1.6h-2.6zM31.8 439.0h1.6v1.6h-1.6zM20.3 444.7h4.5v1.6h-4.5zM26.0 444.7h4.5v1.6h-4.5zM31.8 444.7h12.2v1.6h-12.2zM23.2 446.6h2.6v1.6h-2.6zM27.0 446.6h3.5v1.6h-3.5zM31.8 446.6h2.6v1.6h-2.6zM26.0 448.5h8.3v1.6h-8.3zM35.6 448.5h1.6v1.6h-1.6zM38.5 448.5h4.5v1.6h-4.5zM44.3 448.5h6.4v1.6h-6.4zM52.0 448.5h5.5v1.6h-5.5zM58.7 448.5h4.5v1.6h-4.5zM64.4 448.5h8.3v1.6h-8.3zM74.0 448.5h8.3v1.6h-8.3zM26.0 469.4h5.5v1.6h-5.5zM32.8 469.4h1.6v1.6h-1.6zM35.6 469.4h7.4v1.6h-7.4zM26.0 471.3h32.3v1.6h-32.3zM28.0 473.2h3.5v1.6h-3.5zM20.3 478.9h3.5v1.6h-3.5zM25.1 478.9h1.6v1.6h-1.6zM26.0 480.8h3.5v1.6h-3.5zM30.8 480.8h4.5v1.6h-4.5zM36.6 480.8h2.6v1.6h-2.6zM40.4 480.8h3.5v1.6h-3.5zM45.2 480.8h5.5v1.6h-5.5zM52.0 480.8h1.6v1.6h-1.6zM54.8 480.8h1.6v1.6h-1.6zM57.7 480.8h4.5v1.6h-4.5zM63.5 480.8h2.6v1.6h-2.6zM67.3 480.8h5.5v1.6h-5.5zM74.0 480.8h3.5v1.6h-3.5zM78.8 480.8h4.2v1.6h-4.2zM26.0 499.8h11.2v1.6h-11.2zM38.5 499.8h2.6v1.6h-2.6zM42.4 499.8h6.4v1.6h-6.4zM26.0 501.7h32.3v1.6h-32.3zM28.0 503.6h4.5v1.6h-4.5zM20.3 509.3h2.6v1.6h-2.6zM24.1 509.3h1.6v1.6h-1.6zM27.0 509.3h3.5v1.6h-3.5zM31.8 509.3h2.6v1.6h-2.6zM35.6 509.3h1.6v1.6h-1.6zM38.5 509.3h1.6v1.6h-1.6zM41.4 509.3h5.5v1.6h-5.5zM26.0 511.2h8.3v1.6h-8.3zM35.6 511.2h4.5v1.6h-4.5zM41.4 511.2h4.5v1.6h-4.5zM47.2 511.2h2.6v1.6h-2.6zM51.0 511.2h4.5v1.6h-4.5zM56.8 511.2h2.6v1.6h-2.6zM60.6 511.2h2.6v1.6h-2.6zM64.4 511.2h2.6v1.6h-2.6zM68.3 511.2h1.6v1.6h-1.6zM71.2 511.2h3.5v1.6h-3.5zM76.0 511.2h1.6v1.6h-1.6zM78.8 511.2h2.6v1.6h-2.6zM82.7 511.2h0.3v1.6h-0.3zM26.0 564.4h2.6v1.6h-2.6zM29.9 564.4h2.6v1.6h-2.6zM33.7 564.4h2.6v1.6h-2.6zM37.6 564.4h6.4v1.6h-6.4zM26.0 566.3h32.3v1.6h-32.3zM28.0 568.2h4.5v1.6h-4.5zM20.3 573.9h5.5v1.6h-5.5zM27.0 573.9h2.6v1.6h-2.6zM26.0 575.8h5.5v1.6h-5.5zM32.8 575.8h3.5v1.6h-3.5zM37.6 575.8h7.4v1.6h-7.4zM46.2 575.8h8.3v1.6h-8.3zM55.8 575.8h1.6v1.6h-1.6zM58.7 575.8h1.6v1.6h-1.6zM61.6 575.8h2.6v1.6h-2.6zM65.4 575.8h2.6v1.6h-2.6zM69.2 575.8h5.5v1.6h-5.5zM76.0 575.8h1.6v1.6h-1.6zM78.8 575.8h1.6v1.6h-1.6zM81.7 575.8h1.3v1.6h-1.3zM26.0 585.3h4.5v1.6h-4.5zM31.8 585.3h4.5v1.6h-4.5zM26.0 587.2h32.3v1.6h-32.3zM28.0 589.1h5.5v1.6h-5.5zM20.3 594.8h9.3v1.6h-9.3zM30.8 594.8h3.5v1.6h-3.5zM35.6 594.8h6.4v1.6h-6.4zM43.3 594.8h3.5v1.6h-3.5zM26.0 644.2h5.5v1.6h-5.5zM32.8 644.2h1.6v1.6h-1.6zM35.6 644.2h4.5v1.6h-4.5zM41.4 644.2h2.6v1.6h-2.6zM26.0 646.1h32.3v1.6h-32.3zM28.0 648.0h3.5v1.6h-3.5zM20.3 653.8h6.4v1.6h-6.4zM23.2 655.6h4.5v1.6h-4.5zM28.9 655.6h6.4v1.6h-6.4zM36.6 655.6h3.5v1.6h-3.5zM41.4 655.6h1.6v1.6h-1.6zM44.3 655.6h3.5v1.6h-3.5zM49.1 655.6h2.6v1.6h-2.6zM26.0 657.5h2.6v1.6h-2.6zM29.9 657.5h3.5v1.6h-3.5zM34.7 657.5h2.6v1.6h-2.6zM38.5 657.5h1.6v1.6h-1.6zM41.4 657.5h1.6v1.6h-1.6zM44.3 657.5h2.6v1.6h-2.6zM48.1 657.5h1.6v1.6h-1.6zM51.0 657.5h3.5v1.6h-3.5zM55.8 657.5h4.5v1.6h-4.5zM61.6 657.5h1.6v1.6h-1.6zM64.4 657.5h8.3v1.6h-8.3zM74.0 657.5h8.3v1.6h-8.3zM26.0 674.6h3.5v1.6h-3.5zM30.8 674.6h1.6v1.6h-1.6zM33.7 674.6h7.4v1.6h-7.4zM26.0 676.5h32.3v1.6h-32.3zM28.0 678.4h5.5v1.6h-5.5zM20.3 684.1h9.3v1.6h-9.3zM30.8 684.1h8.3v1.6h-8.3zM40.4 684.1h3.5v1.6h-3.5zM45.2 684.1h2.6v1.6h-2.6zM23.2 686.0h3.5v1.6h-3.5zM28.0 686.0h2.6v1.6h-2.6zM31.8 686.0h3.5v1.6h-3.5zM36.6 686.0h1.6v1.6h-1.6zM22.2 687.9h7.4v1.6h-7.4zM30.8 687.9h1.6v1.6h-1.6zM33.7 687.9h4.5v1.6h-4.5zM39.5 687.9h3.5v1.6h-3.5zM26.0 689.8h3.5v1.6h-3.5zM30.8 689.8h2.6v1.6h-2.6zM34.7 689.8h2.6v1.6h-2.6zM38.5 689.8h1.6v1.6h-1.6zM41.4 689.8h6.4v1.6h-6.4zM49.1 689.8h6.4v1.6h-6.4zM56.8 689.8h1.6v1.6h-1.6zM59.6 689.8h4.5v1.6h-4.5zM65.4 689.8h8.3v1.6h-8.3zM75.0 689.8h3.5v1.6h-3.5zM79.8 689.8h3.2v1.6h-3.2zM20.3 699.3h9.3v1.6h-9.3zM30.8 699.3h9.3v1.6h-9.3zM26.0 714.5h3.5v1.6h-3.5zM30.8 714.5h1.6v1.6h-1.6zM26.0 716.4h32.3v1.6h-32.3zM28.0 718.3h3.5v1.6h-3.5zM20.3 724.0h11.2v1.6h-11.2zM32.8 724.0h6.4v1.6h-6.4zM40.4 724.0h6.4v1.6h-6.4zM23.2 725.9h12.2v1.6h-12.2zM36.6 725.9h1.6v1.6h-1.6zM39.5 725.9h3.5v1.6h-3.5zM22.2 727.8h5.5v1.6h-5.5zM28.9 727.8h2.6v1.6h-2.6zM32.8 727.8h3.5v1.6h-3.5zM37.6 727.8h11.2v1.6h-11.2zM50.0 727.8h2.6v1.6h-2.6zM26.0 729.7h2.6v1.6h-2.6zM29.9 729.7h3.5v1.6h-3.5zM34.7 729.7h1.6v1.6h-1.6zM37.6 729.7h2.6v1.6h-2.6zM41.4 729.7h8.3v1.6h-8.3zM51.0 729.7h5.5v1.6h-5.5zM57.7 729.7h2.6v1.6h-2.6zM61.6 729.7h4.5v1.6h-4.5zM67.3 729.7h1.6v1.6h-1.6zM70.2 729.7h4.5v1.6h-4.5zM76.0 729.7h4.5v1.6h-4.5zM81.7 729.7h1.3v1.6h-1.3zM20.3 739.2h2.6v1.6h-2.6zM24.1 739.2h7.4v1.6h-7.4zM32.8 739.2h8.3v1.6h-8.3zM23.2 741.1h6.4v1.6h-6.4zM22.2 743.0h7.4v1.6h-7.4zM30.8 743.0h1.6v1.6h-1.6zM33.7 743.0h1.6v1.6h-1.6zM36.6 743.0h1.6v1.6h-1.6zM26.0 754.4h5.5v1.6h-5.5zM32.8 754.4h3.5v1.6h-3.5zM37.6 754.4h1.6v1.6h-1.6zM26.0 756.3h32.3v1.6h-32.3zM28.0 758.2h5.5v1.6h-5.5zM20.3 763.9h4.5v1.6h-4.5zM26.0 763.9h1.6v1.6h-1.6zM28.9 763.9h1.6v1.6h-1.6zM31.8 763.9h6.4v1.6h-6.4zM39.5 763.9h2.6v1.6h-2.6zM43.3 763.9h3.5v1.6h-3.5zM26.0 765.8h3.5v1.6h-3.5zM30.8 765.8h10.3v1.6h-10.3zM42.4 765.8h4.5v1.6h-4.5zM48.1 765.8h6.4v1.6h-6.4zM55.8 765.8h3.5v1.6h-3.5zM60.6 765.8h3.5v1.6h-3.5zM65.4 765.8h1.6v1.6h-1.6zM68.3 765.8h3.5v1.6h-3.5zM73.1 765.8h1.6v1.6h-1.6zM76.0 765.8h7.0v1.6h-7.0zM26.0 781.0h2.6v1.6h-2.6zM29.9 781.0h2.6v1.6h-2.6zM33.7 781.0h5.5v1.6h-5.5zM26.0 782.9h32.3v1.6h-32.3zM28.0 784.8h3.5v1.6h-3.5zM20.3 790.5h3.5v1.6h-3.5zM25.1 790.5h3.5v1.6h-3.5zM29.9 790.5h2.6v1.6h-2.6zM33.7 790.5h2.6v1.6h-2.6zM37.6 790.5h4.5v1.6h-4.5zM43.3 790.5h2.6v1.6h-2.6zM23.2 792.4h5.5v1.6h-5.5zM29.9 792.4h1.6v1.6h-1.6zM32.8 792.4h2.6v1.6h-2.6zM36.6 792.4h2.6v1.6h-2.6zM40.4 792.4h1.6v1.6h-1.6zM43.3 792.4h1.6v1.6h-1.6zM46.2 792.4h4.5v1.6h-4.5zM26.0 794.3h7.4v1.6h-7.4zM34.7 794.3h1.6v1.6h-1.6zM37.6 794.3h7.4v1.6h-7.4zM46.2 794.3h2.6v1.6h-2.6zM50.0 794.3h1.6v1.6h-1.6zM52.9 794.3h3.5v1.6h-3.5zM57.7 794.3h2.6v1.6h-2.6zM61.6 794.3h1.6v1.6h-1.6zM64.4 794.3h8.3v1.6h-8.3zM74.0 794.3h2.6v1.6h-2.6zM77.9 794.3h5.1v1.6h-5.1zM26.0 841.8h2.6v1.6h-2.6zM29.9 841.8h2.6v1.6h-2.6zM33.7 841.8h1.6v1.6h-1.6zM36.6 841.8h1.6v1.6h-1.6zM26.0 843.7h32.3v1.6h-32.3zM28.0 845.6h4.5v1.6h-4.5zM20.3 851.3h3.5v1.6h-3.5zM25.1 851.3h6.4v1.6h-6.4zM32.8 851.3h4.5v1.6h-4.5zM23.2 853.2h2.6v1.6h-2.6zM27.0 853.2h2.6v1.6h-2.6zM30.8 853.2h1.6v1.6h-1.6zM33.7 853.2h2.6v1.6h-2.6zM37.6 853.2h1.6v1.6h-1.6zM40.4 853.2h1.6v1.6h-1.6zM43.3 853.2h8.3v1.6h-8.3zM22.2 855.1h12.2v1.6h-12.2zM35.6 855.1h2.6v1.6h-2.6zM39.5 855.1h3.5v1.6h-3.5zM26.0 857.0h5.5v1.6h-5.5zM32.8 857.0h5.5v1.6h-5.5zM39.5 857.0h6.4v1.6h-6.4zM47.2 857.0h2.6v1.6h-2.6zM51.0 857.0h1.6v1.6h-1.6zM53.9 857.0h3.5v1.6h-3.5zM58.7 857.0h8.3v1.6h-8.3zM68.3 857.0h1.6v1.6h-1.6zM71.2 857.0h6.4v1.6h-6.4zM78.8 857.0h1.6v1.6h-1.6zM81.7 857.0h1.3v1.6h-1.3zM26.0 872.2h2.6v1.6h-2.6zM29.9 872.2h2.6v1.6h-2.6zM26.0 874.1h32.3v1.6h-32.3zM28.0 876.0h3.5v1.6h-3.5zM20.3 881.7h8.3v1.6h-8.3zM29.9 881.7h8.3v1.6h-8.3zM39.5 881.7h1.6v1.6h-1.6zM23.2 883.6h2.6v1.6h-2.6zM27.0 883.6h10.3v1.6h-10.3zM38.5 883.6h2.6v1.6h-2.6zM42.4 883.6h2.6v1.6h-2.6zM46.2 883.6h3.5v1.6h-3.5zM22.2 885.5h2.6v1.6h-2.6zM26.0 885.5h4.5v1.6h-4.5zM31.8 885.5h1.6v1.6h-1.6zM34.7 885.5h3.5v1.6h-3.5zM39.5 885.5h7.4v1.6h-7.4zM48.1 885.5h1.6v1.6h-1.6zM51.0 885.5h3.5v1.6h-3.5zM55.8 885.5h11.2v1.6h-11.2zM26.0 887.4h7.4v1.6h-7.4zM34.7 887.4h3.5v1.6h-3.5zM39.5 887.4h1.6v1.6h-1.6zM42.4 887.4h2.6v1.6h-2.6zM46.2 887.4h1.6v1.6h-1.6zM49.1 887.4h6.4v1.6h-6.4zM56.8 887.4h8.3v1.6h-8.3zM66.4 887.4h1.6v1.6h-1.6zM69.2 887.4h3.5v1.6h-3.5zM74.0 887.4h2.6v1.6h-2.6zM77.9 887.4h5.1v1.6h-5.1zM20.3 896.9h4.5v1.6h-4.5zM26.0 896.9h6.4v1.6h-6.4zM33.7 896.9h2.6v1.6h-2.6zM37.6 896.9h6.4v1.6h-6.4zM23.2 898.8h8.3v1.6h-8.3z"/><path fill="rgba(210,20,20,0.5)" d="M7.8 119.8h0.7v1.6h-0.7zM11.6 121.8h8.3v1.6h-8.3zM20.3 121.8h0.7v1.6h-0.7zM22.2 121.8h5.5v1.6h-5.5zM28.0 121.8h0.7v1.6h-0.7zM11.6 123.7h12.2v1.6h-12.2zM24.1 123.7h0.7v1.6h-0.7zM26.0 123.7h2.6v1.6h-2.6zM29.9 123.7h1.6v1.6h-1.6zM32.8 123.7h8.3v1.6h-8.3zM42.4 123.7h3.5v1.6h-3.5zM46.2 123.7h0.7v1.6h-0.7zM11.6 125.5h12.2v1.6h-12.2zM24.1 125.5h0.7v1.6h-0.7zM26.0 125.5h32.3v1.6h-32.3zM58.7 125.5h0.7v1.6h-0.7zM11.6 127.5h14.1v1.6h-14.1zM26.0 127.5h0.7v1.6h-0.7zM28.0 127.5h4.5v1.6h-4.5zM32.8 127.5h0.7v1.6h-0.7zM11.6 129.3h6.4v1.6h-6.4zM18.4 129.3h0.7v1.6h-0.7zM20.3 129.3h9.3v1.6h-9.3zM29.9 129.3h0.7v1.6h-0.7zM11.6 131.2h5.5v1.6h-5.5zM17.4 131.2h0.7v1.6h-0.7zM19.3 131.2h9.3v1.6h-9.3zM28.9 131.2h0.7v1.6h-0.7zM11.6 133.2h6.4v1.6h-6.4zM18.4 133.2h0.7v1.6h-0.7zM20.3 133.2h2.6v1.6h-2.6zM24.1 133.2h1.6v1.6h-1.6zM27.0 133.2h1.6v1.6h-1.6zM29.9 133.2h1.6v1.6h-1.6zM31.8 133.2h0.7v1.6h-0.7zM11.6 135.1h9.3v1.6h-9.3zM21.2 135.1h0.7v1.6h-0.7zM23.2 135.1h3.5v1.6h-3.5zM28.0 135.1h3.5v1.6h-3.5zM32.8 135.1h6.4v1.6h-6.4zM40.4 135.1h3.5v1.6h-3.5zM45.2 135.1h2.6v1.6h-2.6zM48.1 135.1h0.7v1.6h-0.7zM11.6 136.9h12.2v1.6h-12.2zM24.1 136.9h0.7v1.6h-0.7zM26.0 136.9h3.5v1.6h-3.5zM30.8 136.9h1.6v1.6h-1.6zM33.7 136.9h7.4v1.6h-7.4zM42.4 136.9h1.6v1.6h-1.6zM45.2 136.9h6.4v1.6h-6.4zM52.9 136.9h1.6v1.6h-1.6zM55.8 136.9h2.6v1.6h-2.6zM59.6 136.9h6.4v1.6h-6.4zM67.3 136.9h1.6v1.6h-1.6zM70.2 136.9h1.6v1.6h-1.6zM73.1 136.9h6.4v1.6h-6.4zM80.8 136.9h2.2v1.6h-2.2zM11.6 138.8h14.1v1.6h-14.1zM26.0 138.8h0.7v1.6h-0.7zM28.0 138.8h0.7v1.6h-0.7zM28.9 138.8h0.7v1.6h-0.7zM11.6 140.8h10.3v1.6h-10.3zM22.2 140.8h0.7v1.6h-0.7zM24.1 140.8h0.7v1.6h-0.7zM25.1 140.8h0.7v1.6h-0.7zM11.6 142.7h6.4v1.6h-6.4zM18.4 142.7h0.7v1.6h-0.7zM20.3 142.7h0.7v1.6h-0.7zM15.5 144.6h1.6v1.6h-1.6zM11.6 146.4h1.6v1.6h-1.6zM11.6 148.3h12.2v1.6h-12.2zM24.1 148.3h0.7v1.6h-0.7zM26.0 148.3h5.5v1.6h-5.5zM7.8 150.2h1.6v1.6h-1.6zM7.8 520.8h0.7v1.6h-0.7zM11.6 522.6h8.3v1.6h-8.3zM20.3 522.6h0.7v1.6h-0.7zM22.2 522.6h5.5v1.6h-5.5zM28.0 522.6h0.7v1.6h-0.7zM11.6 524.5h12.2v1.6h-12.2zM24.1 524.5h0.7v1.6h-0.7zM26.0 524.5h5.5v1.6h-5.5zM31.8 524.5h0.7v1.6h-0.7zM11.6 526.4h12.2v1.6h-12.2zM24.1 526.4h0.7v1.6h-0.7zM26.0 526.4h32.3v1.6h-32.3zM58.7 526.4h0.7v1.6h-0.7zM11.6 528.3h14.1v1.6h-14.1zM26.0 528.3h0.7v1.6h-0.7zM28.0 528.3h5.5v1.6h-5.5zM33.7 528.3h0.7v1.6h-0.7zM11.6 530.2h6.4v1.6h-6.4zM18.4 530.2h0.7v1.6h-0.7zM20.3 530.2h9.3v1.6h-9.3zM29.9 530.2h0.7v1.6h-0.7zM11.6 532.1h5.5v1.6h-5.5zM17.4 532.1h0.7v1.6h-0.7zM19.3 532.1h9.3v1.6h-9.3zM28.9 532.1h0.7v1.6h-0.7zM11.6 534.0h6.4v1.6h-6.4zM18.4 534.0h0.7v1.6h-0.7zM20.3 534.0h3.5v1.6h-3.5zM25.1 534.0h11.2v1.6h-11.2zM37.6 534.0h8.3v1.6h-8.3zM46.2 534.0h0.7v1.6h-0.7zM11.6 535.9h12.2v1.6h-12.2zM24.1 535.9h0.7v1.6h-0.7zM26.0 535.9h5.5v1.6h-5.5zM7.8 537.8h1.6v1.6h-1.6zM7.8 539.8h0.7v1.6h-0.7zM11.6 541.6h8.3v1.6h-8.3zM20.3 541.6h0.7v1.6h-0.7zM22.2 541.6h5.5v1.6h-5.5zM28.0 541.6h0.7v1.6h-0.7zM11.6 543.5h12.2v1.6h-12.2zM24.1 543.5h0.7v1.6h-0.7zM26.0 543.5h3.5v1.6h-3.5zM30.8 543.5h7.4v1.6h-7.4zM38.5 543.5h0.7v1.6h-0.7zM11.6 545.4h12.2v1.6h-12.2zM24.1 545.4h0.7v1.6h-0.7zM26.0 545.4h32.3v1.6h-32.3zM58.7 545.4h0.7v1.6h-0.7zM11.6 547.3h14.1v1.6h-14.1zM26.0 547.3h0.7v1.6h-0.7zM28.0 547.3h4.5v1.6h-4.5zM32.8 547.3h0.7v1.6h-0.7zM11.6 549.2h6.4v1.6h-6.4zM18.4 549.2h0.7v1.6h-0.7zM20.3 549.2h9.3v1.6h-9.3zM29.9 549.2h0.7v1.6h-0.7zM11.6 551.1h5.5v1.6h-5.5zM17.4 551.1h0.7v1.6h-0.7zM19.3 551.1h9.3v1.6h-9.3zM28.9 551.1h0.7v1.6h-0.7zM11.6 553.0h6.4v1.6h-6.4zM18.4 553.0h0.7v1.6h-0.7zM20.3 553.0h8.3v1.6h-8.3zM29.9 553.0h3.5v1.6h-3.5zM34.7 553.0h1.6v1.6h-1.6zM37.6 553.0h2.6v1.6h-2.6zM41.4 553.0h7.4v1.6h-7.4zM49.1 553.0h0.7v1.6h-0.7zM11.6 554.9h12.2v1.6h-12.2zM24.1 554.9h0.7v1.6h-0.7zM26.0 554.9h3.5v1.6h-3.5zM30.8 554.9h1.6v1.6h-1.6zM33.7 554.9h4.5v1.6h-4.5zM39.5 554.9h2.6v1.6h-2.6zM43.3 554.9h1.6v1.6h-1.6zM46.2 554.9h5.5v1.6h-5.5zM52.9 554.9h2.6v1.6h-2.6zM56.8 554.9h1.6v1.6h-1.6zM59.6 554.9h8.3v1.6h-8.3zM69.2 554.9h3.5v1.6h-3.5zM74.0 554.9h1.6v1.6h-1.6zM76.9 554.9h6.1v1.6h-6.1zM11.6 556.8h12.2v1.6h-12.2zM24.1 556.8h0.7v1.6h-0.7zM26.0 556.8h5.5v1.6h-5.5zM7.8 558.8h1.6v1.6h-1.6zM7.8 606.2h0.7v1.6h-0.7zM11.6 608.1h8.3v1.6h-8.3zM20.3 608.1h0.7v1.6h-0.7zM22.2 608.1h5.5v1.6h-5.5zM28.0 608.1h0.7v1.6h-0.7zM11.6 610.0h12.2v1.6h-12.2zM24.1 610.0h0.7v1.6h-0.7zM26.0 610.0h2.6v1.6h-2.6zM29.9 610.0h1.6v1.6h-1.6zM32.8 610.0h2.6v1.6h-2.6zM36.6 610.0h3.5v1.6h-3.5zM40.4 610.0h0.7v1.6h-0.7zM11.6 611.9h12.2v1.6h-12.2zM24.1 611.9h0.7v1.6h-0.7zM26.0 611.9h32.3v1.6h-32.3zM58.7 611.9h0.7v1.6h-0.7zM11.6 613.8h14.1v1.6h-14.1zM26.0 613.8h0.7v1.6h-0.7zM28.0 613.8h4.5v1.6h-4.5zM32.8 613.8h0.7v1.6h-0.7zM11.6 615.8h6.4v1.6h-6.4zM18.4 615.8h0.7v1.6h-0.7zM20.3 615.8h9.3v1.6h-9.3zM29.9 615.8h0.7v1.6h-0.7zM11.6 617.6h5.5v1.6h-5.5zM17.4 617.6h0.7v1.6h-0.7zM19.3 617.6h9.3v1.6h-9.3zM28.9 617.6h0.7v1.6h-0.7zM11.6 619.5h6.4v1.6h-6.4zM18.4 619.5h0.7v1.6h-0.7zM20.3 619.5h2.6v1.6h-2.6zM24.1 619.5h2.6v1.6h-2.6zM28.0 619.5h1.6v1.6h-1.6zM29.9 619.5h0.7v1.6h-0.7zM11.6 621.4h12.2v1.6h-12.2zM24.1 621.4h0.7v1.6h-0.7zM26.0 621.4h4.5v1.6h-4.5zM31.8 621.4h2.6v1.6h-2.6zM35.6 621.4h11.2v1.6h-11.2zM48.1 621.4h1.6v1.6h-1.6zM51.0 621.4h3.5v1.6h-3.5zM55.8 621.4h7.4v1.6h-7.4zM64.4 621.4h3.5v1.6h-3.5zM69.2 621.4h1.6v1.6h-1.6zM72.1 621.4h2.6v1.6h-2.6zM76.0 621.4h7.0v1.6h-7.0zM11.6 623.3h14.1v1.6h-14.1zM26.0 623.3h0.7v1.6h-0.7zM28.0 623.3h0.7v1.6h-0.7zM28.9 623.3h0.7v1.6h-0.7zM11.6 625.2h10.3v1.6h-10.3zM22.2 625.2h0.7v1.6h-0.7zM24.1 625.2h0.7v1.6h-0.7zM25.1 625.2h0.7v1.6h-0.7zM11.6 627.1h11.2v1.6h-11.2zM23.2 627.1h0.7v1.6h-0.7zM25.1 627.1h0.7v1.6h-0.7zM26.0 627.1h0.7v1.6h-0.7zM11.6 629.0h3.5v1.6h-3.5zM15.5 629.0h0.7v1.6h-0.7zM17.4 629.0h0.7v1.6h-0.7zM18.4 629.0h0.7v1.6h-0.7zM11.6 630.9h6.4v1.6h-6.4zM18.4 630.9h0.7v1.6h-0.7zM20.3 630.9h0.7v1.6h-0.7zM15.5 632.8h1.6v1.6h-1.6zM11.6 634.8h1.6v1.6h-1.6zM11.6 636.6h12.2v1.6h-12.2zM24.1 636.6h0.7v1.6h-0.7zM26.0 636.6h5.5v1.6h-5.5zM7.8 638.5h1.6v1.6h-1.6zM7.8 805.7h0.7v1.6h-0.7zM11.6 807.6h8.3v1.6h-8.3zM20.3 807.6h0.7v1.6h-0.7zM22.2 807.6h5.5v1.6h-5.5zM28.0 807.6h0.7v1.6h-0.7zM11.6 809.5h12.2v1.6h-12.2zM24.1 809.5h0.7v1.6h-0.7zM26.0 809.5h2.6v1.6h-2.6zM29.9 809.5h6.4v1.6h-6.4zM37.6 809.5h2.6v1.6h-2.6zM41.4 809.5h2.6v1.6h-2.6zM44.3 809.5h0.7v1.6h-0.7zM11.6 811.4h12.2v1.6h-12.2zM24.1 811.4h0.7v1.6h-0.7zM26.0 811.4h32.3v1.6h-32.3zM58.7 811.4h0.7v1.6h-0.7zM11.6 813.3h14.1v1.6h-14.1zM26.0 813.3h0.7v1.6h-0.7zM28.0 813.3h4.5v1.6h-4.5zM32.8 813.3h0.7v1.6h-0.7zM11.6 815.2h6.4v1.6h-6.4zM18.4 815.2h0.7v1.6h-0.7zM20.3 815.2h9.3v1.6h-9.3zM29.9 815.2h0.7v1.6h-0.7zM11.6 817.1h5.5v1.6h-5.5zM17.4 817.1h0.7v1.6h-0.7zM19.3 817.1h9.3v1.6h-9.3zM28.9 817.1h0.7v1.6h-0.7zM11.6 819.0h6.4v1.6h-6.4zM18.4 819.0h0.7v1.6h-0.7zM20.3 819.0h3.5v1.6h-3.5zM25.1 819.0h2.6v1.6h-2.6zM28.9 819.0h7.4v1.6h-7.4zM37.6 819.0h1.6v1.6h-1.6zM40.4 819.0h8.3v1.6h-8.3zM49.1 819.0h0.7v1.6h-0.7zM11.6 820.9h9.3v1.6h-9.3zM21.2 820.9h0.7v1.6h-0.7zM23.2 820.9h2.6v1.6h-2.6zM27.0 820.9h8.3v1.6h-8.3zM36.6 820.9h2.6v1.6h-2.6zM40.4 820.9h4.5v1.6h-4.5zM45.2 820.9h0.7v1.6h-0.7zM11.6 822.8h8.3v1.6h-8.3zM20.3 822.8h0.7v1.6h-0.7zM22.2 822.8h4.5v1.6h-4.5zM28.0 822.8h5.5v1.6h-5.5zM34.7 822.8h3.5v1.6h-3.5zM39.5 822.8h4.5v1.6h-4.5zM45.2 822.8h1.6v1.6h-1.6zM48.1 822.8h1.6v1.6h-1.6zM51.0 822.8h2.6v1.6h-2.6zM53.9 822.8h0.7v1.6h-0.7zM11.6 824.7h12.2v1.6h-12.2zM24.1 824.7h0.7v1.6h-0.7zM26.0 824.7h5.5v1.6h-5.5zM32.8 824.7h6.4v1.6h-6.4zM40.4 824.7h1.6v1.6h-1.6zM43.3 824.7h8.3v1.6h-8.3zM52.9 824.7h1.6v1.6h-1.6zM55.8 824.7h3.5v1.6h-3.5zM60.6 824.7h1.6v1.6h-1.6zM63.5 824.7h3.5v1.6h-3.5zM68.3 824.7h6.4v1.6h-6.4zM76.0 824.7h6.4v1.6h-6.4zM11.6 826.6h14.1v1.6h-14.1zM26.0 826.6h0.7v1.6h-0.7zM28.0 826.6h0.7v1.6h-0.7zM28.9 826.6h0.7v1.6h-0.7zM11.6 828.5h10.3v1.6h-10.3zM22.2 828.5h0.7v1.6h-0.7zM24.1 828.5h0.7v1.6h-0.7zM25.1 828.5h0.7v1.6h-0.7zM11.6 830.4h11.2v1.6h-11.2zM23.2 830.4h0.7v1.6h-0.7zM25.1 830.4h0.7v1.6h-0.7zM26.0 830.4h0.7v1.6h-0.7zM11.6 832.3h3.5v1.6h-3.5zM15.5 832.3h0.7v1.6h-0.7zM17.4 832.3h0.7v1.6h-0.7zM18.4 832.3h0.7v1.6h-0.7zM11.6 834.2h12.2v1.6h-12.2zM24.1 834.2h0.7v1.6h-0.7zM26.0 834.2h5.5v1.6h-5.5zM7.8 836.1h1.6v1.6h-1.6z"/></svg>
<svg style="position:absolute;left:1440.00px;top:47.00px" width="83.00" height="894.00"><path fill="rgba(0,0,0,0.3)" d="M0.1 0.1h0.7v1.6h-0.7z"/></svg>
<div style="position:absolute;left:1523.00px;top:46px;width:13.00px;height:895px;background:#f8f8f8;border-left:1px solid #efefef"></div>
<div style="position:absolute;left:1526.70px;top:50px;width:7.4px;height:885px;background:#c2c2c2;border-radius:4px"></div>
</div></body></html>
